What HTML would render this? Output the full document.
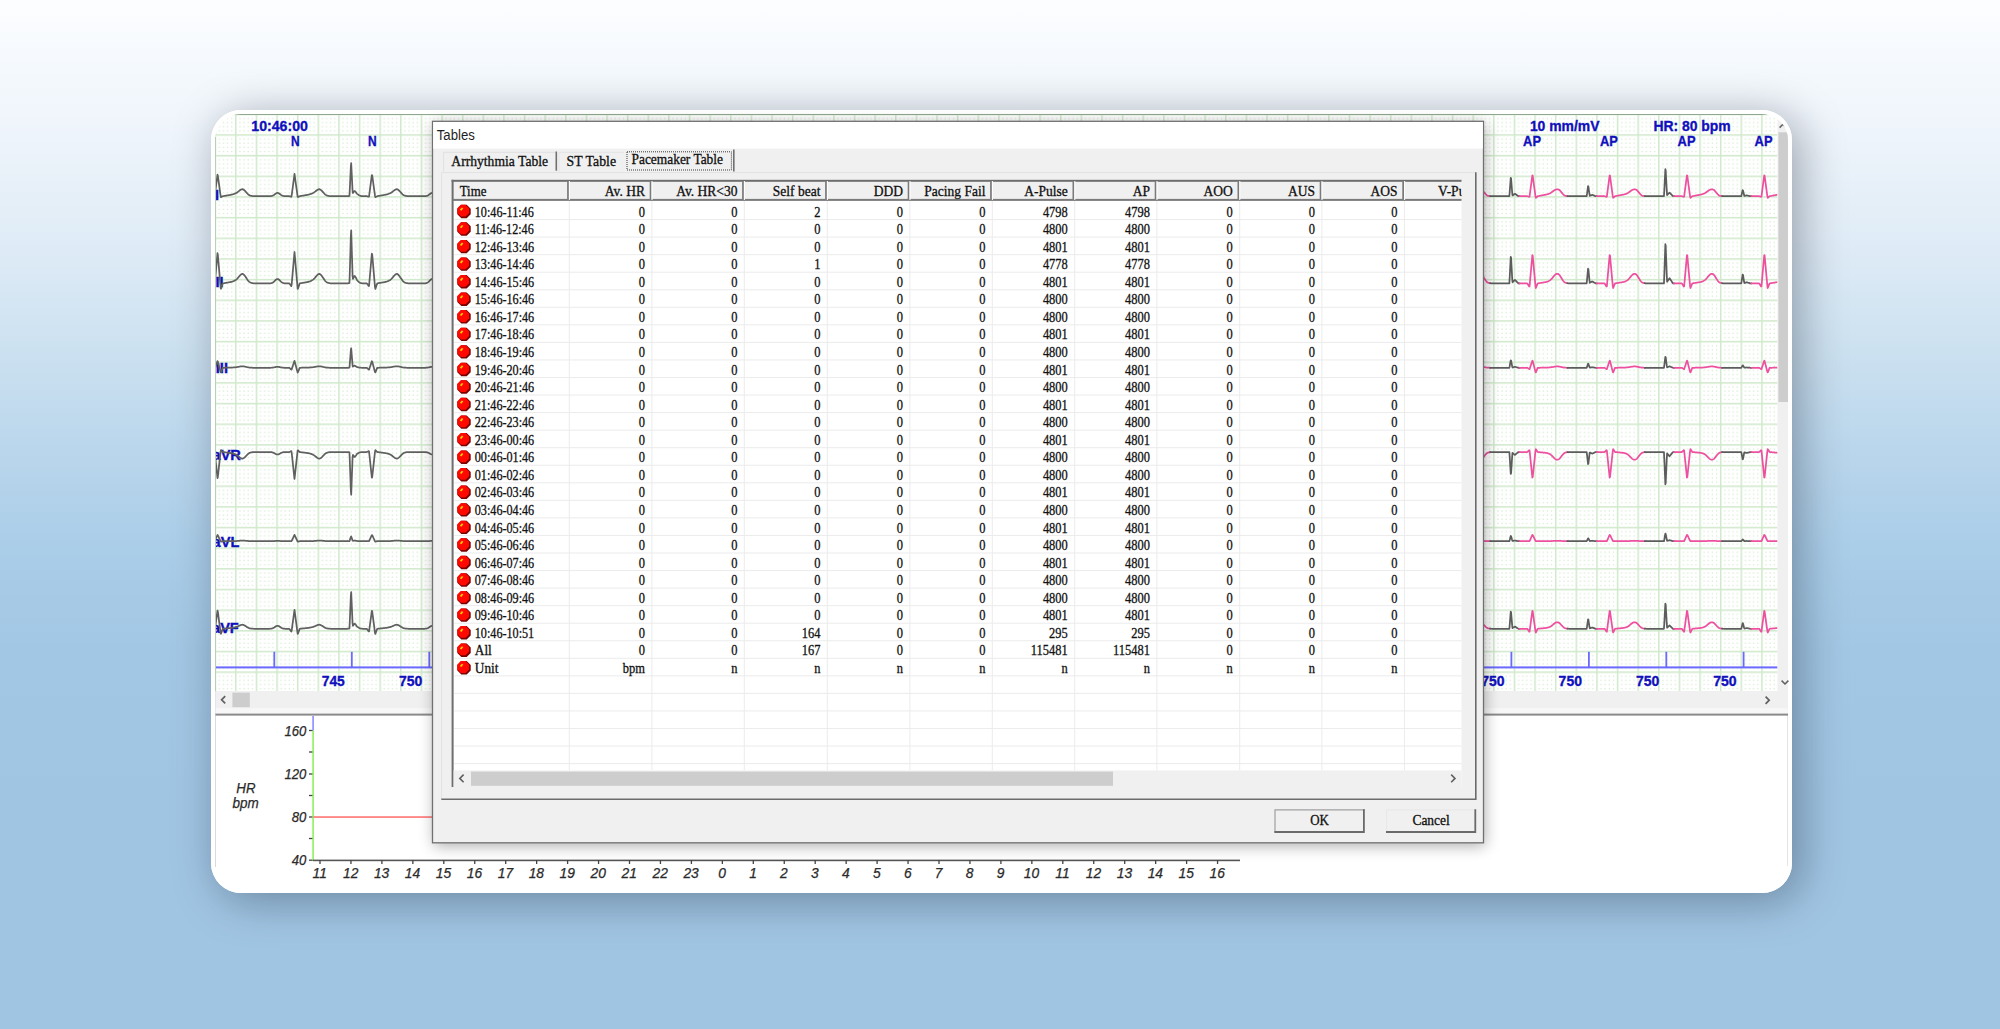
<!DOCTYPE html>
<html><head><meta charset="utf-8"><title>Tables</title>
<style>
html,body{margin:0;padding:0;}
body{width:2000px;height:1029px;overflow:hidden;position:relative;
 background:linear-gradient(180deg,#fcfdff 0px,#f6fafe 55px,#ecf3fa 150px,#deebf6 250px,#cce1f0 350px,#bad6ec 450px,#aacde8 550px,#a2c7e4 650px,#a0c5e3 800px,#a0c5e3 1029px);
 font-family:"Liberation Sans", sans-serif;}
.a{position:absolute;}
#shadow{position:absolute;left:211px;top:110px;width:1581px;height:783px;border-radius:30px;background:#fff;
 box-shadow:8px 7px 45px 0px rgba(0,10,25,0.34);}
#card{position:absolute;left:0;top:0;width:2000px;height:1029px;clip-path:inset(110px 208px 136px 211px round 30px);}
.ser{font-family:"Liberation Serif", serif;}
.lbl{font-family:"Liberation Sans", sans-serif;font-weight:bold;color:#1414c4;position:absolute;white-space:nowrap;line-height:1;}
</style></head><body>
<div id="shadow"></div>
<div id="card">
<div class="a" style="left:211px;top:110px;width:1581px;height:783px;background:#fff;"></div>

<svg class="a" style="left:0;top:0" width="2000" height="1029" viewBox="0 0 2000 1029"><defs><pattern id="g" patternUnits="userSpaceOnUse" x="214.450" y="113.590" width="20.623" height="20.660"><rect x="4.22" y="4.23" width="1.3" height="1.3" fill="#d6ecd2"/><rect x="4.22" y="8.36" width="1.3" height="1.3" fill="#d6ecd2"/><rect x="4.22" y="12.50" width="1.3" height="1.3" fill="#d6ecd2"/><rect x="4.22" y="16.63" width="1.3" height="1.3" fill="#d6ecd2"/><rect x="8.35" y="4.23" width="1.3" height="1.3" fill="#d6ecd2"/><rect x="8.35" y="8.36" width="1.3" height="1.3" fill="#d6ecd2"/><rect x="8.35" y="12.50" width="1.3" height="1.3" fill="#d6ecd2"/><rect x="8.35" y="16.63" width="1.3" height="1.3" fill="#d6ecd2"/><rect x="12.47" y="4.23" width="1.3" height="1.3" fill="#d6ecd2"/><rect x="12.47" y="8.36" width="1.3" height="1.3" fill="#d6ecd2"/><rect x="12.47" y="12.50" width="1.3" height="1.3" fill="#d6ecd2"/><rect x="12.47" y="16.63" width="1.3" height="1.3" fill="#d6ecd2"/><rect x="16.60" y="4.23" width="1.3" height="1.3" fill="#d6ecd2"/><rect x="16.60" y="8.36" width="1.3" height="1.3" fill="#d6ecd2"/><rect x="16.60" y="12.50" width="1.3" height="1.3" fill="#d6ecd2"/><rect x="16.60" y="16.63" width="1.3" height="1.3" fill="#d6ecd2"/><rect x="0" y="0" width="20.623" height="1.5" fill="#cfe9ca"/><rect x="0" y="0" width="1.5" height="20.660" fill="#cfe9ca"/></pattern></defs><clipPath id="gc"><path d="M215 140 A26 26 0 0 1 241 114 H1761 A26 26 0 0 1 1787 140 V691 H215 Z"/></clipPath><g clip-path="url(#gc)"><rect x="215" y="114" width="1562.5" height="577" fill="#fff"/><rect x="215" y="114" width="1562.5" height="577" fill="url(#g)"/><rect x="215" y="114" width="1562.5" height="1" fill="#8fa88f"/></g></svg>
<svg class="a" style="left:0;top:0" width="2000" height="1029" viewBox="0 0 2000 1029">
<defs><clipPath id="lc"><rect x="215.3" y="114" width="300" height="600"/></clipPath></defs><g clip-path="url(#lc)">
<text x="215.10" y="200.00" font-size="14.60" font-family='"Liberation Sans", sans-serif' font-weight="bold" fill="#1010bd" text-anchor="start" stroke="#1010bd" stroke-width="0.35">I</text>
<text x="215.50" y="286.80" font-size="14.60" font-family='"Liberation Sans", sans-serif' font-weight="bold" fill="#1010bd" text-anchor="start" stroke="#1010bd" stroke-width="0.35">II</text>
<text x="215.80" y="373.30" font-size="14.60" font-family='"Liberation Sans", sans-serif' font-weight="bold" fill="#1010bd" text-anchor="start" stroke="#1010bd" stroke-width="0.35">III</text>
<text x="240.91" y="459.80" font-size="14.60" font-family='"Liberation Sans", sans-serif' font-weight="bold" fill="#1010bd" text-anchor="end" stroke="#1010bd" stroke-width="0.35">aVR</text>
<text x="239.39" y="546.60" font-size="14.60" font-family='"Liberation Sans", sans-serif' font-weight="bold" fill="#1010bd" text-anchor="end" stroke="#1010bd" stroke-width="0.35">aVL</text>
<text x="238.79" y="632.80" font-size="14.60" font-family='"Liberation Sans", sans-serif' font-weight="bold" fill="#1010bd" text-anchor="end" stroke="#1010bd" stroke-width="0.35">aVF</text>
</g>
</svg>
<svg class="a" style="left:0;top:0" width="2000" height="1029" viewBox="0 0 2000 1029"><defs><clipPath id="ec"><rect x="215.5" y="114" width="1562" height="577"/></clipPath></defs><g clip-path="url(#ec)" fill="none" stroke-width="1.75" stroke-linejoin="round" stroke-linecap="round"><path d="M214.00 196.64 L214.35 196.73 L214.70 196.04 L215.05 193.36 L215.40 190.69 L215.75 188.02 L216.10 185.35 L216.45 182.68 L216.80 180.01 L217.15 177.33 L217.50 174.66 L217.85 175.72 L218.20 178.27 L218.55 180.82 L218.90 183.37 L219.25 185.91 L219.60 188.46 L219.95 191.01 L220.30 193.56 L220.65 196.11 L221.00 197.10 L221.35 196.92 L221.70 196.75 L222.05 196.57 L222.40 196.40 L222.75 196.20 L223.10 196.12 L223.45 196.06 L223.80 196.00 L224.15 195.94 L224.50 195.88 L224.85 195.82 L225.20 195.77 L225.55 195.71 L225.90 195.65 L226.25 195.59 L226.60 195.53 L226.95 195.47 L227.30 195.42 L227.65 195.36 L228.00 195.30 L228.35 195.24 L228.70 195.18 L229.05 195.12 L229.40 195.05 L229.75 194.99 L230.10 194.93 L230.45 194.86 L230.80 194.79 L231.15 194.72 L231.50 194.65 L231.85 194.57 L232.20 194.48 L232.55 194.39 L232.90 194.29 L233.25 194.18 L233.60 194.06 L233.95 193.93 L234.30 193.79 L234.65 193.64 L235.00 193.52 L235.35 193.39 L235.70 193.24 L236.05 193.07 L236.40 192.88 L236.75 192.67 L237.10 192.45 L237.45 192.20 L237.80 191.95 L238.15 191.68 L238.50 191.41 L238.85 191.13 L239.20 190.85 L239.55 190.58 L239.90 190.32 L240.25 190.07 L240.60 189.85 L240.95 189.65 L241.30 189.48 L241.65 189.35 L242.00 189.26 L242.35 189.21 L242.70 189.24 L243.05 189.38 L243.40 189.58 L243.75 189.81 L244.10 190.07 L244.45 190.38 L244.80 190.70 L245.15 191.06 L245.50 191.43 L245.85 191.81 L246.20 192.21 L246.55 192.60 L246.90 193.00 L247.25 193.39 L247.60 193.76 L247.95 194.13 L248.30 194.48 L248.65 194.79 L249.00 194.99 L249.35 195.17 L249.70 195.33 L250.05 195.47 L250.40 195.59 L250.75 195.70 L251.10 195.79 L251.45 195.87 L251.80 195.93 L252.15 195.99 L252.50 196.03 L252.85 196.07 L253.20 196.10 L253.55 196.12 L253.90 196.14 L254.25 196.15 L254.60 196.17 L254.95 196.17 L255.30 196.18 L255.65 196.19 L256.00 196.19 L256.35 196.19 L256.70 196.19 L257.05 196.20 L257.40 196.20 L257.75 196.20 L258.10 196.20 L258.45 196.20 L258.80 196.20 L259.15 196.20 L259.50 196.20 L259.85 196.20 L260.20 196.20 L260.55 196.20 L260.90 196.20 L261.25 196.20 L261.60 196.20 L261.95 196.20 L262.30 196.20 L262.65 196.20 L263.00 196.20 L263.35 196.20 L263.70 196.20 L264.05 196.20 L264.40 196.20 L264.75 196.20 L265.10 196.20 L265.45 196.20 L265.80 196.20 L266.15 196.20 L266.50 196.20 L266.85 196.20 L267.20 196.20 L267.55 196.20 L267.90 196.20 L268.25 196.19 L268.60 196.19 L268.95 196.19 L269.30 196.18 L269.65 196.17 L270.00 196.15 L270.35 196.12 L270.70 196.09 L271.05 196.05 L271.40 195.99 L271.75 195.91 L272.10 195.82 L272.45 195.70 L272.80 195.56 L273.15 195.39 L273.50 195.19 L273.85 194.97 L274.20 194.73 L274.55 194.47 L274.90 194.20 L275.25 193.93 L275.60 193.67 L275.95 193.44 L276.30 193.23 L276.65 193.07 L277.00 192.96 L277.35 192.91 L277.70 192.91 L278.05 192.97 L278.40 193.09 L278.75 193.26 L279.10 193.47 L279.45 193.71 L279.80 193.97 L280.15 194.24 L280.50 194.50 L280.85 194.76 L281.20 195.00 L281.55 195.22 L281.90 195.41 L282.25 195.58 L282.60 195.72 L282.95 195.83 L283.30 195.93 L283.65 196.00 L284.00 196.06 L284.35 196.10 L284.70 196.13 L285.05 196.15 L285.40 196.17 L285.75 196.18 L286.10 196.19 L286.45 196.19 L286.80 196.19 L287.15 196.20 L287.50 196.20 L287.85 196.20 L288.20 196.20 L288.55 196.20 L288.90 196.20 L289.25 196.20 L289.60 196.28 L289.95 196.38 L290.30 196.47 L290.65 196.57 L291.00 196.66 L291.35 196.76 L291.70 195.27 L292.05 192.60 L292.40 189.93 L292.75 187.26 L293.10 184.59 L293.45 181.91 L293.80 179.24 L294.15 176.57 L294.50 173.90 L294.85 176.45 L295.20 179.00 L295.55 181.55 L295.90 184.09 L296.25 186.64 L296.60 189.19 L296.95 191.74 L297.30 194.29 L297.65 196.84 L298.00 197.05 L298.35 196.87 L298.70 196.70 L299.05 196.52 L299.40 196.35 L299.75 196.16 L300.10 196.10 L300.45 196.04 L300.80 195.98 L301.15 195.92 L301.50 195.87 L301.85 195.81 L302.20 195.75 L302.55 195.69 L302.90 195.63 L303.25 195.57 L303.60 195.52 L303.95 195.46 L304.30 195.40 L304.65 195.34 L305.00 195.28 L305.35 195.22 L305.70 195.16 L306.05 195.10 L306.40 195.04 L306.75 194.97 L307.10 194.91 L307.45 194.84 L307.80 194.77 L308.15 194.70 L308.50 194.62 L308.85 194.54 L309.20 194.46 L309.55 194.36 L309.90 194.26 L310.25 194.15 L310.60 194.03 L310.95 193.89 L311.30 193.75 L311.65 193.61 L312.00 193.49 L312.35 193.35 L312.70 193.19 L313.05 193.02 L313.40 192.82 L313.75 192.61 L314.10 192.38 L314.45 192.13 L314.80 191.87 L315.15 191.60 L315.50 191.33 L315.85 191.05 L316.20 190.77 L316.55 190.50 L316.90 190.24 L317.25 190.00 L317.60 189.79 L317.95 189.60 L318.30 189.44 L318.65 189.32 L319.00 189.24 L319.35 189.20 L319.70 189.27 L320.05 189.44 L320.40 189.64 L320.75 189.88 L321.10 190.16 L321.45 190.47 L321.80 190.80 L322.15 191.16 L322.50 191.54 L322.85 191.93 L323.20 192.32 L323.55 192.72 L323.90 193.11 L324.25 193.49 L324.60 193.87 L324.95 194.23 L325.30 194.57 L325.65 194.85 L326.00 195.04 L326.35 195.22 L326.70 195.37 L327.05 195.51 L327.40 195.62 L327.75 195.73 L328.10 195.81 L328.45 195.89 L328.80 195.95 L329.15 196.00 L329.50 196.04 L329.85 196.08 L330.20 196.11 L330.55 196.13 L330.90 196.14 L331.25 196.16 L331.60 196.17 L331.95 196.18 L332.30 196.18 L332.65 196.19 L333.00 196.19 L333.35 196.19 L333.70 196.20 L334.05 196.20 L334.40 196.20 L334.75 196.20 L335.10 196.20 L335.45 196.20 L335.80 196.20 L336.15 196.20 L336.50 196.20 L336.85 196.20 L337.20 196.20 L337.55 196.20 L337.90 196.20 L338.25 196.20 L338.60 196.20 L338.95 196.20 L339.30 196.20 L339.65 196.20 L340.00 196.20 L340.35 196.20 L340.70 196.20 L341.05 196.20 L341.40 196.20 L341.75 196.20 L342.10 196.20 L342.45 196.20 L342.80 196.20 L343.15 196.20 L343.50 196.20 L343.85 196.20 L344.20 196.20 L344.55 196.20 L344.90 196.20 L345.25 196.20 L345.60 196.20 L345.95 196.19 L346.30 196.19 L346.65 196.18 L347.00 196.17 L347.35 196.16 L347.70 196.14 L348.05 196.11 L348.40 196.07 L348.75 196.02 L349.10 195.95 L349.45 195.86 L349.80 189.38 L350.15 181.81 L350.50 174.21 L350.85 166.59 L351.20 163.19 L351.55 170.39 L351.90 177.58 L352.25 184.55 L352.60 191.43 L352.95 193.01 L353.30 192.47 L353.65 191.97 L354.00 191.50 L354.35 191.08 L354.70 191.05 L355.05 191.31 L355.40 191.63 L355.75 192.01 L356.10 192.45 L356.45 192.93 L356.80 193.44 L357.15 193.86 L357.50 194.12 L357.85 194.39 L358.20 194.65 L358.55 194.90 L358.90 195.13 L359.25 195.33 L359.60 195.51 L359.95 195.66 L360.30 195.79 L360.65 195.89 L361.00 195.97 L361.35 196.03 L361.70 196.08 L362.05 196.12 L362.40 196.14 L362.75 196.16 L363.10 196.17 L363.45 196.18 L363.80 196.19 L364.15 196.19 L364.50 196.20 L364.85 196.20 L365.20 196.20 L365.55 196.20 L365.90 196.20 L366.25 196.20 L366.60 196.20 L366.95 196.24 L367.30 196.34 L367.65 196.43 L368.00 196.53 L368.35 196.62 L368.70 196.72 L369.05 196.42 L369.40 193.75 L369.75 191.07 L370.10 188.40 L370.45 185.73 L370.80 183.06 L371.15 180.39 L371.50 177.72 L371.85 175.04 L372.20 175.36 L372.55 177.90 L372.90 180.45 L373.25 183.00 L373.60 185.55 L373.95 188.10 L374.30 190.65 L374.65 193.20 L375.00 195.74 L375.35 197.12 L375.70 196.95 L376.05 196.77 L376.40 196.60 L376.75 196.42 L377.10 196.23 L377.45 196.12 L377.80 196.07 L378.15 196.01 L378.50 195.95 L378.85 195.89 L379.20 195.83 L379.55 195.77 L379.90 195.72 L380.25 195.66 L380.60 195.60 L380.95 195.54 L381.30 195.48 L381.65 195.42 L382.00 195.36 L382.35 195.31 L382.70 195.25 L383.05 195.19 L383.40 195.13 L383.75 195.06 L384.10 195.00 L384.45 194.94 L384.80 194.87 L385.15 194.80 L385.50 194.73 L385.85 194.66 L386.20 194.58 L386.55 194.49 L386.90 194.40 L387.25 194.31 L387.60 194.20 L387.95 194.08 L388.30 193.95 L388.65 193.81 L389.00 193.65 L389.35 193.54 L389.70 193.41 L390.05 193.26 L390.40 193.09 L390.75 192.91 L391.10 192.70 L391.45 192.48 L391.80 192.24 L392.15 191.99 L392.50 191.72 L392.85 191.45 L393.20 191.17 L393.55 190.89 L393.90 190.62 L394.25 190.35 L394.60 190.10 L394.95 189.88 L395.30 189.68 L395.65 189.51 L396.00 189.37 L396.35 189.27 L396.70 189.22 L397.05 189.22 L397.40 189.36 L397.75 189.55 L398.10 189.77 L398.45 190.03 L398.80 190.33 L399.15 190.66 L399.50 191.01 L399.85 191.38 L400.20 191.76 L400.55 192.15 L400.90 192.55 L401.25 192.94 L401.60 193.33 L401.95 193.71 L402.30 194.08 L402.65 194.43 L403.00 194.76 L403.35 194.96 L403.70 195.14 L404.05 195.31 L404.40 195.45 L404.75 195.58 L405.10 195.68 L405.45 195.78 L405.80 195.86 L406.15 195.92 L406.50 195.98 L406.85 196.03 L407.20 196.06 L407.55 196.09 L407.90 196.12 L408.25 196.14 L408.60 196.15 L408.95 196.16 L409.30 196.17 L409.65 196.18 L410.00 196.19 L410.35 196.19 L410.70 196.19 L411.05 196.19 L411.40 196.20 L411.75 196.20 L412.10 196.20 L412.45 196.20 L412.80 196.20 L413.15 196.20 L413.50 196.20 L413.85 196.20 L414.20 196.20 L414.55 196.20 L414.90 196.20 L415.25 196.20 L415.60 196.20 L415.95 196.20 L416.30 196.20 L416.65 196.20 L417.00 196.20 L417.35 196.20 L417.70 196.20 L418.05 196.20 L418.40 196.20 L418.75 196.20 L419.10 196.20 L419.45 196.20 L419.80 196.20 L420.15 196.20 L420.50 196.20 L420.85 196.20 L421.20 196.20 L421.55 196.20 L421.90 196.20 L422.25 196.20 L422.60 196.20 L422.95 196.19 L423.30 196.19 L423.65 196.19 L424.00 196.18 L424.35 196.17 L424.70 196.15 L425.05 196.13 L425.40 196.10 L425.75 196.06 L426.10 196.01 L426.45 195.94 L426.80 195.85 L427.15 195.74 L427.50 195.60 L427.85 195.44 L428.20 195.25 L428.55 195.03 L428.90 194.80 L429.25 194.54 L429.60 194.28 L429.95 194.01 L430.30 193.75 L430.65 193.50 L431.00 193.29 L431.35 193.11 L431.70 192.99 L432.05 192.92 L432.40 192.90 L432.75 192.95" stroke="#606060"/><path d="M1480.00 189.35 L1480.35 189.38 L1480.70 189.44 L1481.05 189.53 L1481.40 189.65 L1481.75 189.79 L1482.10 189.96 L1482.45 190.29 L1482.80 190.70 L1483.15 191.11 L1483.50 191.53 L1483.85 191.96 L1484.20 192.38 L1484.55 192.79 L1484.90 193.20 L1485.25 193.60 L1485.60 193.99 L1485.95 194.36 L1486.30 194.72 L1486.65 195.07 L1487.00 195.39 L1487.35 195.62 L1487.70 195.72 L1488.05 195.80 L1488.40 195.88 L1488.75 195.94 L1489.10 195.99 L1489.45 196.03 L1489.80 196.07 L1490.15 196.10" stroke="#ee50a0"/><path d="M1490.10 196.09 L1490.45 196.12 L1490.80 196.14 L1491.15 196.15 L1491.50 196.16 L1491.85 196.17 L1492.20 196.18 L1492.55 196.18 L1492.90 196.19 L1493.25 196.19 L1493.60 196.19 L1493.95 196.20 L1494.30 196.20 L1494.65 196.20 L1495.00 196.20 L1495.35 196.20 L1495.70 196.20 L1496.05 196.20 L1496.40 196.20 L1496.75 196.20 L1497.10 196.20 L1497.45 196.20 L1497.80 196.20 L1498.15 196.20 L1498.50 196.20 L1498.85 196.20 L1499.20 196.20 L1499.55 196.20 L1499.90 196.20 L1500.25 196.20 L1500.60 196.20 L1500.95 196.20 L1501.30 196.20 L1501.65 196.20 L1502.00 196.20 L1502.35 196.20 L1502.70 196.20 L1503.05 196.20 L1503.40 196.20 L1503.75 196.20 L1504.10 196.20 L1504.45 196.20 L1504.80 196.20 L1505.15 196.20 L1505.50 196.20 L1505.85 196.20 L1506.20 196.20 L1506.55 196.20 L1506.90 196.20 L1507.25 196.20 L1507.60 196.20 L1507.95 196.20 L1508.30 196.20 L1508.65 196.20 L1509.00 196.20 L1509.35 196.20 L1509.70 192.12 L1510.05 187.36 L1510.40 182.60 L1510.75 177.84 L1511.10 178.52 L1511.45 183.25 L1511.80 187.76 L1512.15 192.28 L1512.50 195.43 L1512.85 195.19 L1513.20 194.94 L1513.55 194.70 L1513.90 194.45 L1514.25 194.21 L1514.60 193.96 L1514.95 193.79 L1515.30 194.03 L1515.65 194.28 L1516.00 194.52 L1516.35 194.77 L1516.70 195.01 L1517.05 195.26 L1517.40 195.50 L1517.75 195.75 L1518.10 195.99 L1518.45 196.20 L1518.80 196.20 L1519.15 196.20 L1519.50 196.20" stroke="#5c5c5c"/><path d="M1519.40 196.20 L1519.75 196.20 L1520.10 196.20 L1520.45 196.20 L1520.80 196.20 L1521.15 196.20 L1521.50 196.20 L1521.85 196.20 L1522.20 196.20 L1522.55 196.20 L1522.90 196.20 L1523.25 196.20 L1523.60 196.20 L1523.95 196.20 L1524.30 196.20 L1524.65 196.20 L1525.00 196.20 L1525.35 196.20 L1525.70 196.20 L1526.05 196.20 L1526.40 196.20 L1526.75 196.20 L1527.10 196.20 L1527.45 196.25 L1527.80 196.36 L1528.15 196.47 L1528.50 196.58 L1528.85 196.69 L1529.20 196.80 L1529.55 196.52 L1529.90 193.87 L1530.25 191.22 L1530.60 188.58 L1530.95 185.93 L1531.30 183.28 L1531.65 180.63 L1532.00 177.98 L1532.35 175.33 L1532.70 175.69 L1533.05 178.29 L1533.40 180.89 L1533.75 183.50 L1534.10 186.10 L1534.45 188.70 L1534.80 191.31 L1535.15 193.91 L1535.50 196.51 L1535.85 197.86 L1536.20 197.55 L1536.55 197.23 L1536.90 196.92 L1537.25 196.60 L1537.60 196.27 L1537.95 196.12 L1538.30 196.05 L1538.65 195.99 L1539.00 195.93 L1539.35 195.86 L1539.70 195.80 L1540.05 195.74 L1540.40 195.67 L1540.75 195.61 L1541.10 195.55 L1541.45 195.48 L1541.80 195.42 L1542.15 195.36 L1542.50 195.29 L1542.85 195.23 L1543.20 195.16 L1543.55 195.10 L1543.90 195.03 L1544.25 194.96 L1544.60 194.90 L1544.95 194.83 L1545.30 194.76 L1545.65 194.68 L1546.00 194.61 L1546.35 194.53 L1546.70 194.45 L1547.05 194.36 L1547.40 194.26 L1547.75 194.16 L1548.10 194.05 L1548.45 193.94 L1548.80 193.81 L1549.15 193.67 L1549.50 193.52 L1549.85 193.35 L1550.20 193.17 L1550.55 192.98 L1550.90 192.77 L1551.25 192.55 L1551.60 192.31 L1551.95 192.06 L1552.30 191.80 L1552.65 191.53 L1553.00 191.25 L1553.35 190.96 L1553.70 190.72 L1554.05 190.50 L1554.40 190.29 L1554.75 190.09 L1555.10 189.91 L1555.45 189.75 L1555.80 189.61 L1556.15 189.50 L1556.50 189.42 L1556.85 189.37 L1557.20 189.35 L1557.55 189.37 L1557.90 189.42 L1558.25 189.50 L1558.60 189.61 L1558.95 189.75 L1559.30 189.91 L1559.65 190.18 L1560.00 190.58 L1560.35 190.99 L1560.70 191.41 L1561.05 191.83 L1561.40 192.26 L1561.75 192.68 L1562.10 193.09 L1562.45 193.49 L1562.80 193.88 L1563.15 194.26 L1563.50 194.62 L1563.85 194.97 L1564.20 195.30 L1564.55 195.59 L1564.90 195.69 L1565.25 195.78 L1565.60 195.86 L1565.95 195.92 L1566.30 195.98 L1566.65 196.02 L1567.00 196.06 L1567.35 196.09 L1567.70 196.11" stroke="#ee50a0"/><path d="M1567.40 196.09 L1567.75 196.12 L1568.10 196.14 L1568.45 196.15 L1568.80 196.16 L1569.15 196.17 L1569.50 196.18 L1569.85 196.18 L1570.20 196.19 L1570.55 196.19 L1570.90 196.19 L1571.25 196.20 L1571.60 196.20 L1571.95 196.20 L1572.30 196.20 L1572.65 196.20 L1573.00 196.20 L1573.35 196.20 L1573.70 196.20 L1574.05 196.20 L1574.40 196.20 L1574.75 196.20 L1575.10 196.20 L1575.45 196.20 L1575.80 196.20 L1576.15 196.20 L1576.50 196.20 L1576.85 196.20 L1577.20 196.20 L1577.55 196.20 L1577.90 196.20 L1578.25 196.20 L1578.60 196.20 L1578.95 196.20 L1579.30 196.20 L1579.65 196.20 L1580.00 196.20 L1580.35 196.20 L1580.70 196.20 L1581.05 196.20 L1581.40 196.20 L1581.75 196.20 L1582.10 196.20 L1582.45 196.20 L1582.80 196.20 L1583.15 196.20 L1583.50 196.20 L1583.85 196.20 L1584.20 196.20 L1584.55 196.20 L1584.90 196.20 L1585.25 196.20 L1585.60 196.20 L1585.95 196.20 L1586.30 196.20 L1586.65 196.20 L1587.00 193.96 L1587.35 191.34 L1587.70 188.72 L1588.05 186.10 L1588.40 186.48 L1588.75 189.07 L1589.10 191.56 L1589.45 194.04 L1589.80 195.78 L1590.15 195.64 L1590.50 195.51 L1590.85 195.37 L1591.20 195.24 L1591.55 195.10 L1591.90 194.97 L1592.25 194.87 L1592.60 195.01 L1592.95 195.14 L1593.30 195.28 L1593.65 195.41 L1594.00 195.55 L1594.35 195.68 L1594.70 195.82 L1595.05 195.95 L1595.40 196.08 L1595.75 196.20 L1596.10 196.20 L1596.45 196.20 L1596.80 196.20" stroke="#5c5c5c"/><path d="M1596.70 196.20 L1597.05 196.20 L1597.40 196.20 L1597.75 196.20 L1598.10 196.20 L1598.45 196.20 L1598.80 196.20 L1599.15 196.20 L1599.50 196.20 L1599.85 196.20 L1600.20 196.20 L1600.55 196.20 L1600.90 196.20 L1601.25 196.20 L1601.60 196.20 L1601.95 196.20 L1602.30 196.20 L1602.65 196.20 L1603.00 196.20 L1603.35 196.20 L1603.70 196.20 L1604.05 196.20 L1604.40 196.20 L1604.75 196.25 L1605.10 196.36 L1605.45 196.47 L1605.80 196.58 L1606.15 196.69 L1606.50 196.80 L1606.85 196.52 L1607.20 193.87 L1607.55 191.22 L1607.90 188.58 L1608.25 185.93 L1608.60 183.28 L1608.95 180.63 L1609.30 177.98 L1609.65 175.33 L1610.00 175.69 L1610.35 178.29 L1610.70 180.89 L1611.05 183.50 L1611.40 186.10 L1611.75 188.70 L1612.10 191.31 L1612.45 193.91 L1612.80 196.51 L1613.15 197.86 L1613.50 197.55 L1613.85 197.23 L1614.20 196.92 L1614.55 196.60 L1614.90 196.27 L1615.25 196.12 L1615.60 196.05 L1615.95 195.99 L1616.30 195.93 L1616.65 195.86 L1617.00 195.80 L1617.35 195.74 L1617.70 195.67 L1618.05 195.61 L1618.40 195.55 L1618.75 195.48 L1619.10 195.42 L1619.45 195.36 L1619.80 195.29 L1620.15 195.23 L1620.50 195.16 L1620.85 195.10 L1621.20 195.03 L1621.55 194.96 L1621.90 194.90 L1622.25 194.83 L1622.60 194.76 L1622.95 194.68 L1623.30 194.61 L1623.65 194.53 L1624.00 194.45 L1624.35 194.36 L1624.70 194.26 L1625.05 194.16 L1625.40 194.05 L1625.75 193.94 L1626.10 193.81 L1626.45 193.67 L1626.80 193.52 L1627.15 193.35 L1627.50 193.17 L1627.85 192.98 L1628.20 192.77 L1628.55 192.55 L1628.90 192.31 L1629.25 192.06 L1629.60 191.80 L1629.95 191.53 L1630.30 191.25 L1630.65 190.96 L1631.00 190.72 L1631.35 190.50 L1631.70 190.29 L1632.05 190.09 L1632.40 189.91 L1632.75 189.75 L1633.10 189.61 L1633.45 189.50 L1633.80 189.42 L1634.15 189.37 L1634.50 189.35 L1634.85 189.37 L1635.20 189.42 L1635.55 189.50 L1635.90 189.61 L1636.25 189.75 L1636.60 189.91 L1636.95 190.18 L1637.30 190.58 L1637.65 190.99 L1638.00 191.41 L1638.35 191.83 L1638.70 192.26 L1639.05 192.68 L1639.40 193.09 L1639.75 193.49 L1640.10 193.88 L1640.45 194.26 L1640.80 194.62 L1641.15 194.97 L1641.50 195.30 L1641.85 195.59 L1642.20 195.69 L1642.55 195.78 L1642.90 195.86 L1643.25 195.92 L1643.60 195.98 L1643.95 196.02 L1644.30 196.06 L1644.65 196.09 L1645.00 196.11" stroke="#ee50a0"/><path d="M1644.70 196.09 L1645.05 196.12 L1645.40 196.14 L1645.75 196.15 L1646.10 196.16 L1646.45 196.17 L1646.80 196.18 L1647.15 196.18 L1647.50 196.19 L1647.85 196.19 L1648.20 196.19 L1648.55 196.20 L1648.90 196.20 L1649.25 196.20 L1649.60 196.20 L1649.95 196.20 L1650.30 196.20 L1650.65 196.20 L1651.00 196.20 L1651.35 196.20 L1651.70 196.20 L1652.05 196.20 L1652.40 196.20 L1652.75 196.20 L1653.10 196.20 L1653.45 196.20 L1653.80 196.20 L1654.15 196.20 L1654.50 196.20 L1654.85 196.20 L1655.20 196.20 L1655.55 196.20 L1655.90 196.20 L1656.25 196.20 L1656.60 196.20 L1656.95 196.20 L1657.30 196.20 L1657.65 196.20 L1658.00 196.20 L1658.35 196.20 L1658.70 196.20 L1659.05 196.20 L1659.40 196.20 L1659.75 196.20 L1660.10 196.20 L1660.45 196.20 L1660.80 196.20 L1661.15 196.20 L1661.50 196.20 L1661.85 196.20 L1662.20 196.20 L1662.55 196.20 L1662.90 196.20 L1663.25 196.20 L1663.60 196.20 L1663.95 196.20 L1664.30 190.20 L1664.65 183.21 L1665.00 176.21 L1665.35 169.21 L1665.70 170.21 L1666.05 177.16 L1666.40 183.79 L1666.75 190.43 L1667.10 195.07 L1667.45 194.71 L1667.80 194.35 L1668.15 193.99 L1668.50 193.63 L1668.85 193.27 L1669.20 192.91 L1669.55 192.65 L1669.90 193.01 L1670.25 193.37 L1670.60 193.73 L1670.95 194.09 L1671.30 194.45 L1671.65 194.81 L1672.00 195.17 L1672.35 195.53 L1672.70 195.89 L1673.05 196.20 L1673.40 196.20 L1673.75 196.20 L1674.10 196.20" stroke="#5c5c5c"/><path d="M1674.00 196.20 L1674.35 196.20 L1674.70 196.20 L1675.05 196.20 L1675.40 196.20 L1675.75 196.20 L1676.10 196.20 L1676.45 196.20 L1676.80 196.20 L1677.15 196.20 L1677.50 196.20 L1677.85 196.20 L1678.20 196.20 L1678.55 196.20 L1678.90 196.20 L1679.25 196.20 L1679.60 196.20 L1679.95 196.20 L1680.30 196.20 L1680.65 196.20 L1681.00 196.20 L1681.35 196.20 L1681.70 196.20 L1682.05 196.25 L1682.40 196.36 L1682.75 196.47 L1683.10 196.58 L1683.45 196.69 L1683.80 196.80 L1684.15 196.52 L1684.50 193.87 L1684.85 191.22 L1685.20 188.58 L1685.55 185.93 L1685.90 183.28 L1686.25 180.63 L1686.60 177.98 L1686.95 175.33 L1687.30 175.69 L1687.65 178.29 L1688.00 180.89 L1688.35 183.50 L1688.70 186.10 L1689.05 188.70 L1689.40 191.31 L1689.75 193.91 L1690.10 196.51 L1690.45 197.86 L1690.80 197.55 L1691.15 197.23 L1691.50 196.92 L1691.85 196.60 L1692.20 196.27 L1692.55 196.12 L1692.90 196.05 L1693.25 195.99 L1693.60 195.93 L1693.95 195.86 L1694.30 195.80 L1694.65 195.74 L1695.00 195.67 L1695.35 195.61 L1695.70 195.55 L1696.05 195.48 L1696.40 195.42 L1696.75 195.36 L1697.10 195.29 L1697.45 195.23 L1697.80 195.16 L1698.15 195.10 L1698.50 195.03 L1698.85 194.96 L1699.20 194.90 L1699.55 194.83 L1699.90 194.76 L1700.25 194.68 L1700.60 194.61 L1700.95 194.53 L1701.30 194.45 L1701.65 194.36 L1702.00 194.26 L1702.35 194.16 L1702.70 194.05 L1703.05 193.94 L1703.40 193.81 L1703.75 193.67 L1704.10 193.52 L1704.45 193.35 L1704.80 193.17 L1705.15 192.98 L1705.50 192.77 L1705.85 192.55 L1706.20 192.31 L1706.55 192.06 L1706.90 191.80 L1707.25 191.53 L1707.60 191.25 L1707.95 190.96 L1708.30 190.72 L1708.65 190.50 L1709.00 190.29 L1709.35 190.09 L1709.70 189.91 L1710.05 189.75 L1710.40 189.61 L1710.75 189.50 L1711.10 189.42 L1711.45 189.37 L1711.80 189.35 L1712.15 189.37 L1712.50 189.42 L1712.85 189.50 L1713.20 189.61 L1713.55 189.75 L1713.90 189.91 L1714.25 190.18 L1714.60 190.58 L1714.95 190.99 L1715.30 191.41 L1715.65 191.83 L1716.00 192.26 L1716.35 192.68 L1716.70 193.09 L1717.05 193.49 L1717.40 193.88 L1717.75 194.26 L1718.10 194.62 L1718.45 194.97 L1718.80 195.30 L1719.15 195.59 L1719.50 195.69 L1719.85 195.78 L1720.20 195.86 L1720.55 195.92 L1720.90 195.98 L1721.25 196.02 L1721.60 196.06 L1721.95 196.09 L1722.30 196.11" stroke="#ee50a0"/><path d="M1722.00 196.09 L1722.35 196.12 L1722.70 196.14 L1723.05 196.15 L1723.40 196.16 L1723.75 196.17 L1724.10 196.18 L1724.45 196.18 L1724.80 196.19 L1725.15 196.19 L1725.50 196.19 L1725.85 196.20 L1726.20 196.20 L1726.55 196.20 L1726.90 196.20 L1727.25 196.20 L1727.60 196.20 L1727.95 196.20 L1728.30 196.20 L1728.65 196.20 L1729.00 196.20 L1729.35 196.20 L1729.70 196.20 L1730.05 196.20 L1730.40 196.20 L1730.75 196.20 L1731.10 196.20 L1731.45 196.20 L1731.80 196.20 L1732.15 196.20 L1732.50 196.20 L1732.85 196.20 L1733.20 196.20 L1733.55 196.20 L1733.90 196.20 L1734.25 196.20 L1734.60 196.20 L1734.95 196.20 L1735.30 196.20 L1735.65 196.20 L1736.00 196.20 L1736.35 196.20 L1736.70 196.20 L1737.05 196.20 L1737.40 196.20 L1737.75 196.20 L1738.10 196.20 L1738.45 196.20 L1738.80 196.20 L1739.15 196.20 L1739.50 196.20 L1739.85 196.20 L1740.20 196.20 L1740.55 196.20 L1740.90 196.20 L1741.25 196.20 L1741.60 194.85 L1741.95 193.28 L1742.30 191.71 L1742.65 190.14 L1743.00 190.37 L1743.35 191.92 L1743.70 193.41 L1744.05 194.90 L1744.40 195.95 L1744.75 195.87 L1745.10 195.78 L1745.45 195.70 L1745.80 195.62 L1746.15 195.54 L1746.50 195.46 L1746.85 195.40 L1747.20 195.48 L1747.55 195.57 L1747.90 195.65 L1748.25 195.73 L1748.60 195.81 L1748.95 195.89 L1749.30 195.97 L1749.65 196.05 L1750.00 196.13 L1750.35 196.20 L1750.70 196.20 L1751.05 196.20 L1751.40 196.20" stroke="#5c5c5c"/><path d="M1751.30 196.20 L1751.65 196.20 L1752.00 196.20 L1752.35 196.20 L1752.70 196.20 L1753.05 196.20 L1753.40 196.20 L1753.75 196.20 L1754.10 196.20 L1754.45 196.20 L1754.80 196.20 L1755.15 196.20 L1755.50 196.20 L1755.85 196.20 L1756.20 196.20 L1756.55 196.20 L1756.90 196.20 L1757.25 196.20 L1757.60 196.20 L1757.95 196.20 L1758.30 196.20 L1758.65 196.20 L1759.00 196.20 L1759.35 196.25 L1759.70 196.36 L1760.05 196.47 L1760.40 196.58 L1760.75 196.69 L1761.10 196.80 L1761.45 196.52 L1761.80 193.87 L1762.15 191.22 L1762.50 188.58 L1762.85 185.93 L1763.20 183.28 L1763.55 180.63 L1763.90 177.98 L1764.25 175.33 L1764.60 175.69 L1764.95 178.29 L1765.30 180.89 L1765.65 183.50 L1766.00 186.10 L1766.35 188.70 L1766.70 191.31 L1767.05 193.91 L1767.40 196.51 L1767.75 197.86 L1768.10 197.55 L1768.45 197.23 L1768.80 196.92 L1769.15 196.60 L1769.50 196.27 L1769.85 196.12 L1770.20 196.05 L1770.55 195.99 L1770.90 195.93 L1771.25 195.86 L1771.60 195.80 L1771.95 195.74 L1772.30 195.67 L1772.65 195.61 L1773.00 195.55 L1773.35 195.48 L1773.70 195.42 L1774.05 195.36 L1774.40 195.29 L1774.75 195.23 L1775.10 195.16 L1775.45 195.10 L1775.80 195.03 L1776.15 194.96 L1776.50 194.90 L1776.85 194.83 L1777.20 194.76 L1777.55 194.68 L1777.90 194.61 L1778.25 194.53 L1778.60 194.45 L1778.95 194.36 L1779.30 194.26 L1779.65 194.16 L1780.00 194.05 L1780.35 193.94" stroke="#ee50a0"/><path d="M214.00 285.58 L214.35 286.06 L214.70 285.25 L215.05 281.24 L215.40 277.23 L215.75 273.21 L216.10 269.20 L216.45 265.19 L216.80 261.17 L217.15 257.16 L217.50 253.15 L217.85 254.92 L218.20 259.01 L218.55 263.10 L218.90 267.19 L219.25 271.28 L219.60 275.37 L219.95 279.47 L220.30 283.56 L220.65 287.65 L221.00 288.80 L221.35 287.75 L221.70 286.70 L222.05 285.65 L222.40 284.60 L222.75 283.52 L223.10 283.32 L223.45 283.26 L223.80 283.20 L224.15 283.14 L224.50 283.08 L224.85 283.02 L225.20 282.97 L225.55 282.91 L225.90 282.85 L226.25 282.79 L226.60 282.73 L226.95 282.67 L227.30 282.61 L227.65 282.56 L228.00 282.50 L228.35 282.44 L228.70 282.37 L229.05 282.31 L229.40 282.25 L229.75 282.18 L230.10 282.12 L230.45 282.05 L230.80 281.97 L231.15 281.89 L231.50 281.81 L231.85 281.72 L232.20 281.62 L232.55 281.51 L232.90 281.39 L233.25 281.26 L233.60 281.11 L233.95 280.95 L234.30 280.76 L234.65 280.56 L235.00 280.38 L235.35 280.18 L235.70 279.96 L236.05 279.70 L236.40 279.42 L236.75 279.11 L237.10 278.77 L237.45 278.41 L237.80 278.02 L238.15 277.62 L238.50 277.21 L238.85 276.79 L239.20 276.37 L239.55 275.97 L239.90 275.57 L240.25 275.21 L240.60 274.87 L240.95 274.57 L241.30 274.33 L241.65 274.13 L242.00 273.99 L242.35 273.92 L242.70 273.94 L243.05 274.10 L243.40 274.33 L243.75 274.62 L244.10 274.96 L244.45 275.35 L244.80 275.79 L245.15 276.26 L245.50 276.76 L245.85 277.28 L246.20 277.81 L246.55 278.35 L246.90 278.88 L247.25 279.40 L247.60 279.91 L247.95 280.40 L248.30 280.87 L248.65 281.29 L249.00 281.58 L249.35 281.85 L249.70 282.09 L250.05 282.30 L250.40 282.49 L250.75 282.65 L251.10 282.79 L251.45 282.90 L251.80 283.00 L252.15 283.08 L252.50 283.15 L252.85 283.20 L253.20 283.25 L253.55 283.28 L253.90 283.31 L254.25 283.33 L254.60 283.35 L254.95 283.36 L255.30 283.37 L255.65 283.38 L256.00 283.39 L256.35 283.39 L256.70 283.39 L257.05 283.39 L257.40 283.40 L257.75 283.40 L258.10 283.40 L258.45 283.40 L258.80 283.40 L259.15 283.40 L259.50 283.40 L259.85 283.40 L260.20 283.40 L260.55 283.40 L260.90 283.40 L261.25 283.40 L261.60 283.40 L261.95 283.40 L262.30 283.40 L262.65 283.40 L263.00 283.40 L263.35 283.40 L263.70 283.40 L264.05 283.40 L264.40 283.40 L264.75 283.40 L265.10 283.40 L265.45 283.40 L265.80 283.40 L266.15 283.40 L266.50 283.40 L266.85 283.40 L267.20 283.40 L267.55 283.40 L267.90 283.40 L268.25 283.39 L268.60 283.39 L268.95 283.38 L269.30 283.37 L269.65 283.35 L270.00 283.33 L270.35 283.30 L270.70 283.26 L271.05 283.20 L271.40 283.12 L271.75 283.02 L272.10 282.89 L272.45 282.73 L272.80 282.54 L273.15 282.31 L273.50 282.05 L273.85 281.76 L274.20 281.43 L274.55 281.09 L274.90 280.73 L275.25 280.37 L275.60 280.03 L275.95 279.72 L276.30 279.44 L276.65 279.23 L277.00 279.08 L277.35 279.01 L277.70 279.01 L278.05 279.10 L278.40 279.26 L278.75 279.48 L279.10 279.76 L279.45 280.08 L279.80 280.42 L280.15 280.78 L280.50 281.14 L280.85 281.48 L281.20 281.80 L281.55 282.09 L281.90 282.35 L282.25 282.57 L282.60 282.76 L282.95 282.91 L283.30 283.03 L283.65 283.13 L284.00 283.21 L284.35 283.26 L284.70 283.30 L285.05 283.34 L285.40 283.36 L285.75 283.37 L286.10 283.38 L286.45 283.39 L286.80 283.39 L287.15 283.40 L287.50 283.40 L287.85 283.40 L288.20 283.40 L288.55 283.40 L288.90 283.40 L289.25 283.40 L289.60 283.81 L289.95 284.29 L290.30 284.76 L290.65 285.24 L291.00 285.72 L291.35 286.20 L291.70 284.11 L292.05 280.09 L292.40 276.08 L292.75 272.07 L293.10 268.05 L293.45 264.04 L293.80 260.03 L294.15 256.01 L294.50 252.00 L294.85 256.09 L295.20 260.18 L295.55 264.27 L295.90 268.36 L296.25 272.45 L296.60 276.54 L296.95 280.63 L297.30 284.72 L297.65 288.82 L298.00 288.50 L298.35 287.45 L298.70 286.40 L299.05 285.35 L299.40 284.30 L299.75 283.36 L300.10 283.30 L300.45 283.24 L300.80 283.18 L301.15 283.12 L301.50 283.07 L301.85 283.01 L302.20 282.95 L302.55 282.89 L302.90 282.83 L303.25 282.77 L303.60 282.72 L303.95 282.66 L304.30 282.60 L304.65 282.54 L305.00 282.48 L305.35 282.42 L305.70 282.36 L306.05 282.29 L306.40 282.23 L306.75 282.16 L307.10 282.10 L307.45 282.03 L307.80 281.95 L308.15 281.87 L308.50 281.79 L308.85 281.69 L309.20 281.59 L309.55 281.48 L309.90 281.36 L310.25 281.22 L310.60 281.07 L310.95 280.89 L311.30 280.70 L311.65 280.51 L312.00 280.33 L312.35 280.12 L312.70 279.89 L313.05 279.62 L313.40 279.33 L313.75 279.01 L314.10 278.67 L314.45 278.30 L314.80 277.91 L315.15 277.51 L315.50 277.09 L315.85 276.67 L316.20 276.26 L316.55 275.85 L316.90 275.47 L317.25 275.11 L317.60 274.78 L317.95 274.50 L318.30 274.26 L318.65 274.09 L319.00 273.96 L319.35 273.91 L319.70 273.98 L320.05 274.16 L320.40 274.41 L320.75 274.71 L321.10 275.07 L321.45 275.48 L321.80 275.92 L322.15 276.40 L322.50 276.91 L322.85 277.43 L323.20 277.96 L323.55 278.50 L323.90 279.03 L324.25 279.55 L324.60 280.05 L324.95 280.54 L325.30 280.99 L325.65 281.38 L326.00 281.66 L326.35 281.92 L326.70 282.15 L327.05 282.36 L327.40 282.54 L327.75 282.69 L328.10 282.82 L328.45 282.93 L328.80 283.02 L329.15 283.10 L329.50 283.16 L329.85 283.22 L330.20 283.26 L330.55 283.29 L330.90 283.32 L331.25 283.34 L331.60 283.35 L331.95 283.36 L332.30 283.37 L332.65 283.38 L333.00 283.39 L333.35 283.39 L333.70 283.39 L334.05 283.40 L334.40 283.40 L334.75 283.40 L335.10 283.40 L335.45 283.40 L335.80 283.40 L336.15 283.40 L336.50 283.40 L336.85 283.40 L337.20 283.40 L337.55 283.40 L337.90 283.40 L338.25 283.40 L338.60 283.40 L338.95 283.40 L339.30 283.40 L339.65 283.40 L340.00 283.40 L340.35 283.40 L340.70 283.40 L341.05 283.40 L341.40 283.40 L341.75 283.40 L342.10 283.40 L342.45 283.40 L342.80 283.40 L343.15 283.40 L343.50 283.40 L343.85 283.40 L344.20 283.40 L344.55 283.40 L344.90 283.40 L345.25 283.40 L345.60 283.39 L345.95 283.39 L346.30 283.38 L346.65 283.37 L347.00 283.36 L347.35 283.34 L347.70 283.31 L348.05 283.28 L348.40 283.22 L348.75 283.16 L349.10 283.06 L349.45 282.95 L349.80 272.49 L350.15 260.28 L350.50 248.04 L350.85 235.76 L351.20 230.33 L351.55 242.04 L351.90 253.74 L352.25 265.09 L352.60 276.30 L352.95 278.92 L353.30 278.13 L353.65 277.38 L354.00 276.67 L354.35 276.03 L354.70 275.99 L355.05 276.43 L355.40 276.94 L355.75 277.53 L356.10 278.19 L356.45 278.91 L356.80 279.67 L357.15 280.27 L357.50 280.63 L357.85 280.99 L358.20 281.34 L358.55 281.67 L358.90 281.97 L359.25 282.24 L359.60 282.48 L359.95 282.68 L360.30 282.85 L360.65 282.99 L361.00 283.09 L361.35 283.18 L361.70 283.24 L362.05 283.29 L362.40 283.32 L362.75 283.35 L363.10 283.37 L363.45 283.38 L363.80 283.39 L364.15 283.39 L364.50 283.39 L364.85 283.40 L365.20 283.40 L365.55 283.40 L365.90 283.40 L366.25 283.40 L366.60 283.40 L366.95 283.60 L367.30 284.08 L367.65 284.56 L368.00 285.04 L368.35 285.51 L368.70 285.99 L369.05 285.83 L369.40 281.81 L369.75 277.80 L370.10 273.79 L370.45 269.77 L370.80 265.76 L371.15 261.75 L371.50 257.73 L371.85 253.72 L372.20 254.34 L372.55 258.43 L372.90 262.52 L373.25 266.61 L373.60 270.70 L373.95 274.79 L374.30 278.88 L374.65 282.97 L375.00 287.06 L375.35 288.95 L375.70 287.90 L376.05 286.85 L376.40 285.80 L376.75 284.75 L377.10 283.68 L377.45 283.32 L377.80 283.27 L378.15 283.21 L378.50 283.15 L378.85 283.09 L379.20 283.03 L379.55 282.97 L379.90 282.92 L380.25 282.86 L380.60 282.80 L380.95 282.74 L381.30 282.68 L381.65 282.62 L382.00 282.56 L382.35 282.50 L382.70 282.44 L383.05 282.38 L383.40 282.32 L383.75 282.26 L384.10 282.19 L384.45 282.13 L384.80 282.06 L385.15 281.98 L385.50 281.91 L385.85 281.82 L386.20 281.73 L386.55 281.64 L386.90 281.53 L387.25 281.41 L387.60 281.28 L387.95 281.14 L388.30 280.97 L388.65 280.79 L389.00 280.58 L389.35 280.41 L389.70 280.22 L390.05 279.99 L390.40 279.74 L390.75 279.46 L391.10 279.15 L391.45 278.82 L391.80 278.46 L392.15 278.08 L392.50 277.68 L392.85 277.27 L393.20 276.85 L393.55 276.43 L393.90 276.02 L394.25 275.63 L394.60 275.26 L394.95 274.92 L395.30 274.61 L395.65 274.36 L396.00 274.16 L396.35 274.01 L396.70 273.92 L397.05 273.92 L397.40 274.07 L397.75 274.29 L398.10 274.57 L398.45 274.91 L398.80 275.30 L399.15 275.73 L399.50 276.19 L399.85 276.69 L400.20 277.21 L400.55 277.74 L400.90 278.27 L401.25 278.80 L401.60 279.33 L401.95 279.84 L402.30 280.33 L402.65 280.80 L403.00 281.24 L403.35 281.54 L403.70 281.82 L404.05 282.06 L404.40 282.27 L404.75 282.46 L405.10 282.63 L405.45 282.77 L405.80 282.89 L406.15 282.99 L406.50 283.07 L406.85 283.14 L407.20 283.20 L407.55 283.24 L407.90 283.28 L408.25 283.31 L408.60 283.33 L408.95 283.35 L409.30 283.36 L409.65 283.37 L410.00 283.38 L410.35 283.38 L410.70 283.39 L411.05 283.39 L411.40 283.39 L411.75 283.40 L412.10 283.40 L412.45 283.40 L412.80 283.40 L413.15 283.40 L413.50 283.40 L413.85 283.40 L414.20 283.40 L414.55 283.40 L414.90 283.40 L415.25 283.40 L415.60 283.40 L415.95 283.40 L416.30 283.40 L416.65 283.40 L417.00 283.40 L417.35 283.40 L417.70 283.40 L418.05 283.40 L418.40 283.40 L418.75 283.40 L419.10 283.40 L419.45 283.40 L419.80 283.40 L420.15 283.40 L420.50 283.40 L420.85 283.40 L421.20 283.40 L421.55 283.40 L421.90 283.40 L422.25 283.40 L422.60 283.40 L422.95 283.39 L423.30 283.39 L423.65 283.38 L424.00 283.37 L424.35 283.36 L424.70 283.34 L425.05 283.31 L425.40 283.27 L425.75 283.22 L426.10 283.14 L426.45 283.05 L426.80 282.93 L427.15 282.78 L427.50 282.60 L427.85 282.38 L428.20 282.13 L428.55 281.84 L428.90 281.53 L429.25 281.19 L429.60 280.83 L429.95 280.48 L430.30 280.13 L430.65 279.80 L431.00 279.52 L431.35 279.28 L431.70 279.12 L432.05 279.02 L432.40 279.00 L432.75 279.07" stroke="#606060"/><path d="M1480.00 273.85 L1480.35 273.90 L1480.70 274.00 L1481.05 274.17 L1481.40 274.38 L1481.75 274.64 L1482.10 274.94 L1482.45 275.40 L1482.80 275.93 L1483.15 276.48 L1483.50 277.05 L1483.85 277.62 L1484.20 278.18 L1484.55 278.74 L1484.90 279.28 L1485.25 279.81 L1485.60 280.31 L1485.95 280.79 L1486.30 281.24 L1486.65 281.67 L1487.00 282.07 L1487.35 282.37 L1487.70 282.54 L1488.05 282.69 L1488.40 282.82 L1488.75 282.93 L1489.10 283.02 L1489.45 283.10 L1489.80 283.16 L1490.15 283.21" stroke="#ee50a0"/><path d="M1490.10 283.21 L1490.45 283.25 L1490.80 283.28 L1491.15 283.31 L1491.50 283.33 L1491.85 283.35 L1492.20 283.36 L1492.55 283.37 L1492.90 283.38 L1493.25 283.39 L1493.60 283.39 L1493.95 283.39 L1494.30 283.39 L1494.65 283.40 L1495.00 283.40 L1495.35 283.40 L1495.70 283.40 L1496.05 283.40 L1496.40 283.40 L1496.75 283.40 L1497.10 283.40 L1497.45 283.40 L1497.80 283.40 L1498.15 283.40 L1498.50 283.40 L1498.85 283.40 L1499.20 283.40 L1499.55 283.40 L1499.90 283.40 L1500.25 283.40 L1500.60 283.40 L1500.95 283.40 L1501.30 283.40 L1501.65 283.40 L1502.00 283.40 L1502.35 283.40 L1502.70 283.40 L1503.05 283.40 L1503.40 283.40 L1503.75 283.40 L1504.10 283.40 L1504.45 283.40 L1504.80 283.40 L1505.15 283.40 L1505.50 283.40 L1505.85 283.40 L1506.20 283.40 L1506.55 283.40 L1506.90 283.40 L1507.25 283.40 L1507.60 283.40 L1507.95 283.40 L1508.30 283.40 L1508.65 283.40 L1509.00 283.40 L1509.35 283.40 L1509.70 277.48 L1510.05 270.57 L1510.40 263.67 L1510.75 256.76 L1511.10 257.75 L1511.45 264.60 L1511.80 271.15 L1512.15 277.71 L1512.50 282.28 L1512.85 281.93 L1513.20 281.57 L1513.55 281.22 L1513.90 280.86 L1514.25 280.51 L1514.60 280.15 L1514.95 279.90 L1515.30 280.25 L1515.65 280.61 L1516.00 280.96 L1516.35 281.32 L1516.70 281.67 L1517.05 282.03 L1517.40 282.39 L1517.75 282.74 L1518.10 283.10 L1518.45 283.40 L1518.80 283.40 L1519.15 283.40 L1519.50 283.40" stroke="#5c5c5c"/><path d="M1519.40 283.40 L1519.75 283.40 L1520.10 283.40 L1520.45 283.40 L1520.80 283.40 L1521.15 283.40 L1521.50 283.40 L1521.85 283.40 L1522.20 283.40 L1522.55 283.40 L1522.90 283.40 L1523.25 283.40 L1523.60 283.40 L1523.95 283.40 L1524.30 283.40 L1524.65 283.40 L1525.00 283.40 L1525.35 283.40 L1525.70 283.40 L1526.05 283.40 L1526.40 283.40 L1526.75 283.40 L1527.10 283.40 L1527.45 283.65 L1527.80 284.22 L1528.15 284.79 L1528.50 285.36 L1528.85 285.94 L1529.20 286.51 L1529.55 286.44 L1529.90 282.52 L1530.25 278.60 L1530.60 274.68 L1530.95 270.76 L1531.30 266.84 L1531.65 262.92 L1532.00 259.00 L1532.35 255.08 L1532.70 255.59 L1533.05 259.42 L1533.40 263.24 L1533.75 267.07 L1534.10 270.90 L1534.45 274.73 L1534.80 278.56 L1535.15 282.38 L1535.50 286.21 L1535.85 288.02 L1536.20 287.15 L1536.55 286.27 L1536.90 285.40 L1537.25 284.52 L1537.60 283.63 L1537.95 283.33 L1538.30 283.27 L1538.65 283.22 L1539.00 283.17 L1539.35 283.11 L1539.70 283.06 L1540.05 283.00 L1540.40 282.95 L1540.75 282.89 L1541.10 282.84 L1541.45 282.78 L1541.80 282.73 L1542.15 282.67 L1542.50 282.61 L1542.85 282.56 L1543.20 282.50 L1543.55 282.44 L1543.90 282.38 L1544.25 282.32 L1544.60 282.26 L1544.95 282.20 L1545.30 282.13 L1545.65 282.06 L1546.00 281.98 L1546.35 281.90 L1546.70 281.81 L1547.05 281.71 L1547.40 281.60 L1547.75 281.48 L1548.10 281.34 L1548.45 281.19 L1548.80 281.02 L1549.15 280.83 L1549.50 280.62 L1549.85 280.38 L1550.20 280.12 L1550.55 279.84 L1550.90 279.52 L1551.25 279.18 L1551.60 278.82 L1551.95 278.43 L1552.30 278.02 L1552.65 277.59 L1553.00 277.15 L1553.35 276.70 L1553.70 276.29 L1554.05 275.90 L1554.40 275.53 L1554.75 275.17 L1555.10 274.85 L1555.45 274.56 L1555.80 274.31 L1556.15 274.11 L1556.50 273.97 L1556.85 273.88 L1557.20 273.85 L1557.55 273.88 L1557.90 273.97 L1558.25 274.11 L1558.60 274.31 L1558.95 274.56 L1559.30 274.85 L1559.65 275.25 L1560.00 275.78 L1560.35 276.32 L1560.70 276.89 L1561.05 277.46 L1561.40 278.02 L1561.75 278.58 L1562.10 279.13 L1562.45 279.66 L1562.80 280.17 L1563.15 280.66 L1563.50 281.12 L1563.85 281.55 L1564.20 281.96 L1564.55 282.31 L1564.90 282.50 L1565.25 282.65 L1565.60 282.79 L1565.95 282.90 L1566.30 283.00 L1566.65 283.08 L1567.00 283.15 L1567.35 283.20 L1567.70 283.25" stroke="#ee50a0"/><path d="M1567.40 283.21 L1567.75 283.25 L1568.10 283.28 L1568.45 283.31 L1568.80 283.33 L1569.15 283.35 L1569.50 283.36 L1569.85 283.37 L1570.20 283.38 L1570.55 283.39 L1570.90 283.39 L1571.25 283.39 L1571.60 283.39 L1571.95 283.40 L1572.30 283.40 L1572.65 283.40 L1573.00 283.40 L1573.35 283.40 L1573.70 283.40 L1574.05 283.40 L1574.40 283.40 L1574.75 283.40 L1575.10 283.40 L1575.45 283.40 L1575.80 283.40 L1576.15 283.40 L1576.50 283.40 L1576.85 283.40 L1577.20 283.40 L1577.55 283.40 L1577.90 283.40 L1578.25 283.40 L1578.60 283.40 L1578.95 283.40 L1579.30 283.40 L1579.65 283.40 L1580.00 283.40 L1580.35 283.40 L1580.70 283.40 L1581.05 283.40 L1581.40 283.40 L1581.75 283.40 L1582.10 283.40 L1582.45 283.40 L1582.80 283.40 L1583.15 283.40 L1583.50 283.40 L1583.85 283.40 L1584.20 283.40 L1584.55 283.40 L1584.90 283.40 L1585.25 283.40 L1585.60 283.40 L1585.95 283.40 L1586.30 283.40 L1586.65 283.40 L1587.00 280.14 L1587.35 276.35 L1587.70 272.55 L1588.05 268.75 L1588.40 269.29 L1588.75 273.06 L1589.10 276.66 L1589.45 280.27 L1589.80 282.79 L1590.15 282.59 L1590.50 282.40 L1590.85 282.20 L1591.20 282.00 L1591.55 281.81 L1591.90 281.61 L1592.25 281.47 L1592.60 281.67 L1592.95 281.87 L1593.30 282.06 L1593.65 282.26 L1594.00 282.45 L1594.35 282.65 L1594.70 282.84 L1595.05 283.04 L1595.40 283.23 L1595.75 283.40 L1596.10 283.40 L1596.45 283.40 L1596.80 283.40" stroke="#5c5c5c"/><path d="M1596.70 283.40 L1597.05 283.40 L1597.40 283.40 L1597.75 283.40 L1598.10 283.40 L1598.45 283.40 L1598.80 283.40 L1599.15 283.40 L1599.50 283.40 L1599.85 283.40 L1600.20 283.40 L1600.55 283.40 L1600.90 283.40 L1601.25 283.40 L1601.60 283.40 L1601.95 283.40 L1602.30 283.40 L1602.65 283.40 L1603.00 283.40 L1603.35 283.40 L1603.70 283.40 L1604.05 283.40 L1604.40 283.40 L1604.75 283.65 L1605.10 284.22 L1605.45 284.79 L1605.80 285.36 L1606.15 285.94 L1606.50 286.51 L1606.85 286.44 L1607.20 282.52 L1607.55 278.60 L1607.90 274.68 L1608.25 270.76 L1608.60 266.84 L1608.95 262.92 L1609.30 259.00 L1609.65 255.08 L1610.00 255.59 L1610.35 259.42 L1610.70 263.24 L1611.05 267.07 L1611.40 270.90 L1611.75 274.73 L1612.10 278.56 L1612.45 282.38 L1612.80 286.21 L1613.15 288.02 L1613.50 287.15 L1613.85 286.27 L1614.20 285.40 L1614.55 284.52 L1614.90 283.63 L1615.25 283.33 L1615.60 283.27 L1615.95 283.22 L1616.30 283.17 L1616.65 283.11 L1617.00 283.06 L1617.35 283.00 L1617.70 282.95 L1618.05 282.89 L1618.40 282.84 L1618.75 282.78 L1619.10 282.73 L1619.45 282.67 L1619.80 282.61 L1620.15 282.56 L1620.50 282.50 L1620.85 282.44 L1621.20 282.38 L1621.55 282.32 L1621.90 282.26 L1622.25 282.20 L1622.60 282.13 L1622.95 282.06 L1623.30 281.98 L1623.65 281.90 L1624.00 281.81 L1624.35 281.71 L1624.70 281.60 L1625.05 281.48 L1625.40 281.34 L1625.75 281.19 L1626.10 281.02 L1626.45 280.83 L1626.80 280.62 L1627.15 280.38 L1627.50 280.12 L1627.85 279.84 L1628.20 279.52 L1628.55 279.18 L1628.90 278.82 L1629.25 278.43 L1629.60 278.02 L1629.95 277.59 L1630.30 277.15 L1630.65 276.70 L1631.00 276.29 L1631.35 275.90 L1631.70 275.53 L1632.05 275.17 L1632.40 274.85 L1632.75 274.56 L1633.10 274.31 L1633.45 274.11 L1633.80 273.97 L1634.15 273.88 L1634.50 273.85 L1634.85 273.88 L1635.20 273.97 L1635.55 274.11 L1635.90 274.31 L1636.25 274.56 L1636.60 274.85 L1636.95 275.25 L1637.30 275.78 L1637.65 276.32 L1638.00 276.89 L1638.35 277.46 L1638.70 278.02 L1639.05 278.58 L1639.40 279.13 L1639.75 279.66 L1640.10 280.17 L1640.45 280.66 L1640.80 281.12 L1641.15 281.55 L1641.50 281.96 L1641.85 282.31 L1642.20 282.50 L1642.55 282.65 L1642.90 282.79 L1643.25 282.90 L1643.60 283.00 L1643.95 283.08 L1644.30 283.15 L1644.65 283.20 L1645.00 283.25" stroke="#ee50a0"/><path d="M1644.70 283.21 L1645.05 283.25 L1645.40 283.28 L1645.75 283.31 L1646.10 283.33 L1646.45 283.35 L1646.80 283.36 L1647.15 283.37 L1647.50 283.38 L1647.85 283.39 L1648.20 283.39 L1648.55 283.39 L1648.90 283.39 L1649.25 283.40 L1649.60 283.40 L1649.95 283.40 L1650.30 283.40 L1650.65 283.40 L1651.00 283.40 L1651.35 283.40 L1651.70 283.40 L1652.05 283.40 L1652.40 283.40 L1652.75 283.40 L1653.10 283.40 L1653.45 283.40 L1653.80 283.40 L1654.15 283.40 L1654.50 283.40 L1654.85 283.40 L1655.20 283.40 L1655.55 283.40 L1655.90 283.40 L1656.25 283.40 L1656.60 283.40 L1656.95 283.40 L1657.30 283.40 L1657.65 283.40 L1658.00 283.40 L1658.35 283.40 L1658.70 283.40 L1659.05 283.40 L1659.40 283.40 L1659.75 283.40 L1660.10 283.40 L1660.45 283.40 L1660.80 283.40 L1661.15 283.40 L1661.50 283.40 L1661.85 283.40 L1662.20 283.40 L1662.55 283.40 L1662.90 283.40 L1663.25 283.40 L1663.60 283.40 L1663.95 283.40 L1664.30 274.70 L1664.65 264.54 L1665.00 254.39 L1665.35 244.24 L1665.70 245.69 L1666.05 255.77 L1666.40 265.40 L1666.75 275.03 L1667.10 281.76 L1667.45 281.24 L1667.80 280.71 L1668.15 280.19 L1668.50 279.67 L1668.85 279.15 L1669.20 278.63 L1669.55 278.25 L1669.90 278.78 L1670.25 279.30 L1670.60 279.82 L1670.95 280.34 L1671.30 280.86 L1671.65 281.39 L1672.00 281.91 L1672.35 282.43 L1672.70 282.95 L1673.05 283.40 L1673.40 283.40 L1673.75 283.40 L1674.10 283.40" stroke="#5c5c5c"/><path d="M1674.00 283.40 L1674.35 283.40 L1674.70 283.40 L1675.05 283.40 L1675.40 283.40 L1675.75 283.40 L1676.10 283.40 L1676.45 283.40 L1676.80 283.40 L1677.15 283.40 L1677.50 283.40 L1677.85 283.40 L1678.20 283.40 L1678.55 283.40 L1678.90 283.40 L1679.25 283.40 L1679.60 283.40 L1679.95 283.40 L1680.30 283.40 L1680.65 283.40 L1681.00 283.40 L1681.35 283.40 L1681.70 283.40 L1682.05 283.65 L1682.40 284.22 L1682.75 284.79 L1683.10 285.36 L1683.45 285.94 L1683.80 286.51 L1684.15 286.44 L1684.50 282.52 L1684.85 278.60 L1685.20 274.68 L1685.55 270.76 L1685.90 266.84 L1686.25 262.92 L1686.60 259.00 L1686.95 255.08 L1687.30 255.59 L1687.65 259.42 L1688.00 263.24 L1688.35 267.07 L1688.70 270.90 L1689.05 274.73 L1689.40 278.56 L1689.75 282.38 L1690.10 286.21 L1690.45 288.02 L1690.80 287.15 L1691.15 286.27 L1691.50 285.40 L1691.85 284.52 L1692.20 283.63 L1692.55 283.33 L1692.90 283.27 L1693.25 283.22 L1693.60 283.17 L1693.95 283.11 L1694.30 283.06 L1694.65 283.00 L1695.00 282.95 L1695.35 282.89 L1695.70 282.84 L1696.05 282.78 L1696.40 282.73 L1696.75 282.67 L1697.10 282.61 L1697.45 282.56 L1697.80 282.50 L1698.15 282.44 L1698.50 282.38 L1698.85 282.32 L1699.20 282.26 L1699.55 282.20 L1699.90 282.13 L1700.25 282.06 L1700.60 281.98 L1700.95 281.90 L1701.30 281.81 L1701.65 281.71 L1702.00 281.60 L1702.35 281.48 L1702.70 281.34 L1703.05 281.19 L1703.40 281.02 L1703.75 280.83 L1704.10 280.62 L1704.45 280.38 L1704.80 280.12 L1705.15 279.84 L1705.50 279.52 L1705.85 279.18 L1706.20 278.82 L1706.55 278.43 L1706.90 278.02 L1707.25 277.59 L1707.60 277.15 L1707.95 276.70 L1708.30 276.29 L1708.65 275.90 L1709.00 275.53 L1709.35 275.17 L1709.70 274.85 L1710.05 274.56 L1710.40 274.31 L1710.75 274.11 L1711.10 273.97 L1711.45 273.88 L1711.80 273.85 L1712.15 273.88 L1712.50 273.97 L1712.85 274.11 L1713.20 274.31 L1713.55 274.56 L1713.90 274.85 L1714.25 275.25 L1714.60 275.78 L1714.95 276.32 L1715.30 276.89 L1715.65 277.46 L1716.00 278.02 L1716.35 278.58 L1716.70 279.13 L1717.05 279.66 L1717.40 280.17 L1717.75 280.66 L1718.10 281.12 L1718.45 281.55 L1718.80 281.96 L1719.15 282.31 L1719.50 282.50 L1719.85 282.65 L1720.20 282.79 L1720.55 282.90 L1720.90 283.00 L1721.25 283.08 L1721.60 283.15 L1721.95 283.20 L1722.30 283.25" stroke="#ee50a0"/><path d="M1722.00 283.21 L1722.35 283.25 L1722.70 283.28 L1723.05 283.31 L1723.40 283.33 L1723.75 283.35 L1724.10 283.36 L1724.45 283.37 L1724.80 283.38 L1725.15 283.39 L1725.50 283.39 L1725.85 283.39 L1726.20 283.39 L1726.55 283.40 L1726.90 283.40 L1727.25 283.40 L1727.60 283.40 L1727.95 283.40 L1728.30 283.40 L1728.65 283.40 L1729.00 283.40 L1729.35 283.40 L1729.70 283.40 L1730.05 283.40 L1730.40 283.40 L1730.75 283.40 L1731.10 283.40 L1731.45 283.40 L1731.80 283.40 L1732.15 283.40 L1732.50 283.40 L1732.85 283.40 L1733.20 283.40 L1733.55 283.40 L1733.90 283.40 L1734.25 283.40 L1734.60 283.40 L1734.95 283.40 L1735.30 283.40 L1735.65 283.40 L1736.00 283.40 L1736.35 283.40 L1736.70 283.40 L1737.05 283.40 L1737.40 283.40 L1737.75 283.40 L1738.10 283.40 L1738.45 283.40 L1738.80 283.40 L1739.15 283.40 L1739.50 283.40 L1739.85 283.40 L1740.20 283.40 L1740.55 283.40 L1740.90 283.40 L1741.25 283.40 L1741.60 281.45 L1741.95 279.17 L1742.30 276.89 L1742.65 274.61 L1743.00 274.93 L1743.35 277.20 L1743.70 279.36 L1744.05 281.52 L1744.40 283.03 L1744.75 282.91 L1745.10 282.80 L1745.45 282.68 L1745.80 282.56 L1746.15 282.45 L1746.50 282.33 L1746.85 282.24 L1747.20 282.36 L1747.55 282.48 L1747.90 282.60 L1748.25 282.71 L1748.60 282.83 L1748.95 282.95 L1749.30 283.07 L1749.65 283.18 L1750.00 283.30 L1750.35 283.40 L1750.70 283.40 L1751.05 283.40 L1751.40 283.40" stroke="#5c5c5c"/><path d="M1751.30 283.40 L1751.65 283.40 L1752.00 283.40 L1752.35 283.40 L1752.70 283.40 L1753.05 283.40 L1753.40 283.40 L1753.75 283.40 L1754.10 283.40 L1754.45 283.40 L1754.80 283.40 L1755.15 283.40 L1755.50 283.40 L1755.85 283.40 L1756.20 283.40 L1756.55 283.40 L1756.90 283.40 L1757.25 283.40 L1757.60 283.40 L1757.95 283.40 L1758.30 283.40 L1758.65 283.40 L1759.00 283.40 L1759.35 283.65 L1759.70 284.22 L1760.05 284.79 L1760.40 285.36 L1760.75 285.94 L1761.10 286.51 L1761.45 286.44 L1761.80 282.52 L1762.15 278.60 L1762.50 274.68 L1762.85 270.76 L1763.20 266.84 L1763.55 262.92 L1763.90 259.00 L1764.25 255.08 L1764.60 255.59 L1764.95 259.42 L1765.30 263.24 L1765.65 267.07 L1766.00 270.90 L1766.35 274.73 L1766.70 278.56 L1767.05 282.38 L1767.40 286.21 L1767.75 288.02 L1768.10 287.15 L1768.45 286.27 L1768.80 285.40 L1769.15 284.52 L1769.50 283.63 L1769.85 283.33 L1770.20 283.27 L1770.55 283.22 L1770.90 283.17 L1771.25 283.11 L1771.60 283.06 L1771.95 283.00 L1772.30 282.95 L1772.65 282.89 L1773.00 282.84 L1773.35 282.78 L1773.70 282.73 L1774.05 282.67 L1774.40 282.61 L1774.75 282.56 L1775.10 282.50 L1775.45 282.44 L1775.80 282.38 L1776.15 282.32 L1776.50 282.26 L1776.85 282.20 L1777.20 282.13 L1777.55 282.06 L1777.90 281.98 L1778.25 281.90 L1778.60 281.81 L1778.95 281.71 L1779.30 281.60 L1779.65 281.48 L1780.00 281.34 L1780.35 281.19" stroke="#ee50a0"/><path d="M214.00 369.25 L214.35 369.57 L214.70 369.50 L215.05 368.45 L215.40 367.40 L215.75 366.35 L216.10 365.30 L216.45 364.25 L216.80 363.20 L217.15 362.15 L217.50 361.10 L217.85 361.74 L218.20 363.05 L218.55 364.36 L218.90 365.67 L219.25 366.99 L219.60 368.30 L219.95 369.61 L220.30 370.92 L220.65 372.24 L221.00 372.30 L221.35 371.42 L221.70 370.55 L222.05 369.67 L222.40 368.80 L222.75 367.92 L223.10 367.79 L223.45 367.78 L223.80 367.77 L224.15 367.76 L224.50 367.75 L224.85 367.74 L225.20 367.73 L225.55 367.73 L225.90 367.72 L226.25 367.71 L226.60 367.70 L226.95 367.69 L227.30 367.68 L227.65 367.67 L228.00 367.66 L228.35 367.66 L228.70 367.65 L229.05 367.64 L229.40 367.63 L229.75 367.62 L230.10 367.61 L230.45 367.60 L230.80 367.59 L231.15 367.57 L231.50 367.56 L231.85 367.55 L232.20 367.53 L232.55 367.51 L232.90 367.50 L233.25 367.47 L233.60 367.45 L233.95 367.42 L234.30 367.40 L234.65 367.36 L235.00 367.33 L235.35 367.30 L235.70 367.27 L236.05 367.22 L236.40 367.18 L236.75 367.13 L237.10 367.07 L237.45 367.01 L237.80 366.95 L238.15 366.89 L238.50 366.82 L238.85 366.75 L239.20 366.68 L239.55 366.62 L239.90 366.55 L240.25 366.49 L240.60 366.44 L240.95 366.39 L241.30 366.35 L241.65 366.32 L242.00 366.30 L242.35 366.28 L242.70 366.29 L243.05 366.31 L243.40 366.35 L243.75 366.39 L244.10 366.45 L244.45 366.51 L244.80 366.58 L245.15 366.65 L245.50 366.73 L245.85 366.82 L246.20 366.90 L246.55 366.99 L246.90 367.07 L247.25 367.16 L247.60 367.24 L247.95 367.31 L248.30 367.39 L248.65 367.46 L249.00 367.50 L249.35 367.55 L249.70 367.59 L250.05 367.62 L250.40 367.65 L250.75 367.68 L251.10 367.70 L251.45 367.72 L251.80 367.73 L252.15 367.75 L252.50 367.76 L252.85 367.77 L253.20 367.78 L253.55 367.78 L253.90 367.79 L254.25 367.79 L254.60 367.79 L254.95 367.79 L255.30 367.80 L255.65 367.80 L256.00 367.80 L256.35 367.80 L256.70 367.80 L257.05 367.80 L257.40 367.80 L257.75 367.80 L258.10 367.80 L258.45 367.80 L258.80 367.80 L259.15 367.80 L259.50 367.80 L259.85 367.80 L260.20 367.80 L260.55 367.80 L260.90 367.80 L261.25 367.80 L261.60 367.80 L261.95 367.80 L262.30 367.80 L262.65 367.80 L263.00 367.80 L263.35 367.80 L263.70 367.80 L264.05 367.80 L264.40 367.80 L264.75 367.80 L265.10 367.80 L265.45 367.80 L265.80 367.80 L266.15 367.80 L266.50 367.80 L266.85 367.80 L267.20 367.80 L267.55 367.80 L267.90 367.80 L268.25 367.80 L268.60 367.80 L268.95 367.80 L269.30 367.79 L269.65 367.79 L270.00 367.78 L270.35 367.78 L270.70 367.77 L271.05 367.75 L271.40 367.74 L271.75 367.71 L272.10 367.68 L272.45 367.65 L272.80 367.60 L273.15 367.55 L273.50 367.49 L273.85 367.43 L274.20 367.35 L274.55 367.27 L274.90 367.19 L275.25 367.11 L275.60 367.03 L275.95 366.96 L276.30 366.90 L276.65 366.85 L277.00 366.82 L277.35 366.80 L277.70 366.80 L278.05 366.82 L278.40 366.86 L278.75 366.91 L279.10 366.97 L279.45 367.05 L279.80 367.12 L280.15 367.21 L280.50 367.29 L280.85 367.36 L281.20 367.44 L281.55 367.50 L281.90 367.56 L282.25 367.61 L282.60 367.65 L282.95 367.69 L283.30 367.72 L283.65 367.74 L284.00 367.76 L284.35 367.77 L284.70 367.78 L285.05 367.79 L285.40 367.79 L285.75 367.79 L286.10 367.80 L286.45 367.80 L286.80 367.80 L287.15 367.80 L287.50 367.80 L287.85 367.80 L288.20 367.80 L288.55 367.80 L288.90 367.80 L289.25 367.80 L289.60 368.07 L289.95 368.39 L290.30 368.71 L290.65 369.03 L291.00 369.35 L291.35 369.66 L291.70 369.20 L292.05 368.15 L292.40 367.10 L292.75 366.05 L293.10 365.00 L293.45 363.95 L293.80 362.90 L294.15 361.85 L294.50 360.80 L294.85 362.11 L295.20 363.42 L295.55 364.74 L295.90 366.05 L296.25 367.36 L296.60 368.67 L296.95 369.99 L297.30 371.30 L297.65 372.61 L298.00 372.05 L298.35 371.17 L298.70 370.30 L299.05 369.42 L299.40 368.55 L299.75 367.79 L300.10 367.78 L300.45 367.78 L300.80 367.77 L301.15 367.76 L301.50 367.75 L301.85 367.74 L302.20 367.73 L302.55 367.72 L302.90 367.71 L303.25 367.71 L303.60 367.70 L303.95 367.69 L304.30 367.68 L304.65 367.67 L305.00 367.66 L305.35 367.65 L305.70 367.64 L306.05 367.63 L306.40 367.62 L306.75 367.61 L307.10 367.60 L307.45 367.59 L307.80 367.58 L308.15 367.57 L308.50 367.56 L308.85 367.54 L309.20 367.53 L309.55 367.51 L309.90 367.49 L310.25 367.47 L310.60 367.44 L310.95 367.42 L311.30 367.39 L311.65 367.36 L312.00 367.33 L312.35 367.29 L312.70 367.25 L313.05 367.21 L313.40 367.16 L313.75 367.11 L314.10 367.06 L314.45 367.00 L314.80 366.93 L315.15 366.87 L315.50 366.80 L315.85 366.73 L316.20 366.66 L316.55 366.60 L316.90 366.53 L317.25 366.48 L317.60 366.42 L317.95 366.38 L318.30 366.34 L318.65 366.31 L319.00 366.29 L319.35 366.28 L319.70 366.29 L320.05 366.32 L320.40 366.36 L320.75 366.41 L321.10 366.46 L321.45 366.53 L321.80 366.60 L322.15 366.68 L322.50 366.76 L322.85 366.84 L323.20 366.93 L323.55 367.01 L323.90 367.10 L324.25 367.18 L324.60 367.26 L324.95 367.34 L325.30 367.41 L325.65 367.47 L326.00 367.52 L326.35 367.56 L326.70 367.60 L327.05 367.63 L327.40 367.66 L327.75 367.68 L328.10 367.71 L328.45 367.72 L328.80 367.74 L329.15 367.75 L329.50 367.76 L329.85 367.77 L330.20 367.78 L330.55 367.78 L330.90 367.79 L331.25 367.79 L331.60 367.79 L331.95 367.79 L332.30 367.80 L332.65 367.80 L333.00 367.80 L333.35 367.80 L333.70 367.80 L334.05 367.80 L334.40 367.80 L334.75 367.80 L335.10 367.80 L335.45 367.80 L335.80 367.80 L336.15 367.80 L336.50 367.80 L336.85 367.80 L337.20 367.80 L337.55 367.80 L337.90 367.80 L338.25 367.80 L338.60 367.80 L338.95 367.80 L339.30 367.80 L339.65 367.80 L340.00 367.80 L340.35 367.80 L340.70 367.80 L341.05 367.80 L341.40 367.80 L341.75 367.80 L342.10 367.80 L342.45 367.80 L342.80 367.80 L343.15 367.80 L343.50 367.80 L343.85 367.80 L344.20 367.80 L344.55 367.80 L344.90 367.80 L345.25 367.80 L345.60 367.80 L345.95 367.80 L346.30 367.80 L346.65 367.79 L347.00 367.79 L347.35 367.79 L347.70 367.78 L348.05 367.77 L348.40 367.76 L348.75 367.74 L349.10 367.72 L349.45 367.70 L349.80 363.82 L350.15 359.30 L350.50 354.76 L350.85 350.22 L351.20 348.24 L351.55 352.65 L351.90 357.06 L352.25 361.34 L352.60 365.57 L352.95 366.60 L353.30 366.35 L353.65 366.11 L354.00 365.89 L354.35 365.67 L354.70 365.68 L355.05 365.84 L355.40 366.02 L355.75 366.23 L356.10 366.44 L356.45 366.67 L356.80 366.91 L357.15 367.09 L357.50 367.17 L357.85 367.25 L358.20 367.33 L358.55 367.41 L358.90 367.48 L359.25 367.54 L359.60 367.59 L359.95 367.64 L360.30 367.67 L360.65 367.71 L361.00 367.73 L361.35 367.75 L361.70 367.76 L362.05 367.77 L362.40 367.78 L362.75 367.79 L363.10 367.79 L363.45 367.79 L363.80 367.80 L364.15 367.80 L364.50 367.80 L364.85 367.80 L365.20 367.80 L365.55 367.80 L365.90 367.80 L366.25 367.80 L366.60 367.80 L366.95 367.94 L367.30 368.25 L367.65 368.57 L368.00 368.89 L368.35 369.21 L368.70 369.53 L369.05 369.65 L369.40 368.60 L369.75 367.55 L370.10 366.50 L370.45 365.45 L370.80 364.40 L371.15 363.35 L371.50 362.30 L371.85 361.25 L372.20 361.55 L372.55 362.86 L372.90 364.17 L373.25 365.49 L373.60 366.80 L373.95 368.11 L374.30 369.42 L374.65 370.74 L375.00 372.05 L375.35 372.42 L375.70 371.55 L376.05 370.67 L376.40 369.80 L376.75 368.92 L377.10 368.05 L377.45 367.79 L377.80 367.78 L378.15 367.77 L378.50 367.76 L378.85 367.75 L379.20 367.74 L379.55 367.74 L379.90 367.73 L380.25 367.72 L380.60 367.71 L380.95 367.70 L381.30 367.69 L381.65 367.68 L382.00 367.67 L382.35 367.67 L382.70 367.66 L383.05 367.65 L383.40 367.64 L383.75 367.63 L384.10 367.62 L384.45 367.61 L384.80 367.60 L385.15 367.59 L385.50 367.57 L385.85 367.56 L386.20 367.55 L386.55 367.53 L386.90 367.52 L387.25 367.50 L387.60 367.48 L387.95 367.45 L388.30 367.43 L388.65 367.40 L389.00 367.37 L389.35 367.34 L389.70 367.31 L390.05 367.27 L390.40 367.23 L390.75 367.18 L391.10 367.13 L391.45 367.08 L391.80 367.02 L392.15 366.96 L392.50 366.89 L392.85 366.83 L393.20 366.76 L393.55 366.69 L393.90 366.63 L394.25 366.56 L394.60 366.50 L394.95 366.45 L395.30 366.40 L395.65 366.35 L396.00 366.32 L396.35 366.30 L396.70 366.28 L397.05 366.28 L397.40 366.31 L397.75 366.34 L398.10 366.39 L398.45 366.44 L398.80 366.50 L399.15 366.57 L399.50 366.64 L399.85 366.72 L400.20 366.80 L400.55 366.89 L400.90 366.97 L401.25 367.06 L401.60 367.14 L401.95 367.23 L402.30 367.30 L402.65 367.38 L403.00 367.45 L403.35 367.50 L403.70 367.54 L404.05 367.58 L404.40 367.62 L404.75 367.65 L405.10 367.67 L405.45 367.70 L405.80 367.72 L406.15 367.73 L406.50 367.75 L406.85 367.76 L407.20 367.77 L407.55 367.77 L407.90 367.78 L408.25 367.78 L408.60 367.79 L408.95 367.79 L409.30 367.79 L409.65 367.80 L410.00 367.80 L410.35 367.80 L410.70 367.80 L411.05 367.80 L411.40 367.80 L411.75 367.80 L412.10 367.80 L412.45 367.80 L412.80 367.80 L413.15 367.80 L413.50 367.80 L413.85 367.80 L414.20 367.80 L414.55 367.80 L414.90 367.80 L415.25 367.80 L415.60 367.80 L415.95 367.80 L416.30 367.80 L416.65 367.80 L417.00 367.80 L417.35 367.80 L417.70 367.80 L418.05 367.80 L418.40 367.80 L418.75 367.80 L419.10 367.80 L419.45 367.80 L419.80 367.80 L420.15 367.80 L420.50 367.80 L420.85 367.80 L421.20 367.80 L421.55 367.80 L421.90 367.80 L422.25 367.80 L422.60 367.80 L422.95 367.80 L423.30 367.80 L423.65 367.80 L424.00 367.79 L424.35 367.79 L424.70 367.79 L425.05 367.78 L425.40 367.77 L425.75 367.76 L426.10 367.74 L426.45 367.72 L426.80 367.69 L427.15 367.66 L427.50 367.62 L427.85 367.57 L428.20 367.51 L428.55 367.45 L428.90 367.37 L429.25 367.30 L429.60 367.22 L429.95 367.14 L430.30 367.06 L430.65 366.98 L431.00 366.92 L431.35 366.86 L431.70 366.83 L432.05 366.80 L432.40 366.80 L432.75 366.81" stroke="#606060"/><path d="M1480.00 366.45 L1480.35 366.46 L1480.70 366.47 L1481.05 366.50 L1481.40 366.53 L1481.75 366.57 L1482.10 366.61 L1482.45 366.68 L1482.80 366.75 L1483.15 366.83 L1483.50 366.91 L1483.85 366.99 L1484.20 367.07 L1484.55 367.14 L1484.90 367.22 L1485.25 367.29 L1485.60 367.36 L1485.95 367.43 L1486.30 367.49 L1486.65 367.55 L1487.00 367.60 L1487.35 367.65 L1487.70 367.67 L1488.05 367.69 L1488.40 367.71 L1488.75 367.73 L1489.10 367.74 L1489.45 367.76 L1489.80 367.76 L1490.15 367.77" stroke="#ee50a0"/><path d="M1490.10 367.77 L1490.45 367.78 L1490.80 367.78 L1491.15 367.79 L1491.50 367.79 L1491.85 367.79 L1492.20 367.79 L1492.55 367.80 L1492.90 367.80 L1493.25 367.80 L1493.60 367.80 L1493.95 367.80 L1494.30 367.80 L1494.65 367.80 L1495.00 367.80 L1495.35 367.80 L1495.70 367.80 L1496.05 367.80 L1496.40 367.80 L1496.75 367.80 L1497.10 367.80 L1497.45 367.80 L1497.80 367.80 L1498.15 367.80 L1498.50 367.80 L1498.85 367.80 L1499.20 367.80 L1499.55 367.80 L1499.90 367.80 L1500.25 367.80 L1500.60 367.80 L1500.95 367.80 L1501.30 367.80 L1501.65 367.80 L1502.00 367.80 L1502.35 367.80 L1502.70 367.80 L1503.05 367.80 L1503.40 367.80 L1503.75 367.80 L1504.10 367.80 L1504.45 367.80 L1504.80 367.80 L1505.15 367.80 L1505.50 367.80 L1505.85 367.80 L1506.20 367.80 L1506.55 367.80 L1506.90 367.80 L1507.25 367.80 L1507.60 367.80 L1507.95 367.80 L1508.30 367.80 L1508.65 367.80 L1509.00 367.80 L1509.35 367.80 L1509.70 366.14 L1510.05 364.20 L1510.40 362.27 L1510.75 360.33 L1511.10 360.61 L1511.45 362.53 L1511.80 364.37 L1512.15 366.20 L1512.50 367.49 L1512.85 367.39 L1513.20 367.29 L1513.55 367.19 L1513.90 367.09 L1514.25 366.99 L1514.60 366.89 L1514.95 366.82 L1515.30 366.92 L1515.65 367.02 L1516.00 367.12 L1516.35 367.22 L1516.70 367.32 L1517.05 367.42 L1517.40 367.52 L1517.75 367.62 L1518.10 367.71 L1518.45 367.80 L1518.80 367.80 L1519.15 367.80 L1519.50 367.80" stroke="#5c5c5c"/><path d="M1519.40 367.80 L1519.75 367.80 L1520.10 367.80 L1520.45 367.80 L1520.80 367.80 L1521.15 367.80 L1521.50 367.80 L1521.85 367.80 L1522.20 367.80 L1522.55 367.80 L1522.90 367.80 L1523.25 367.80 L1523.60 367.80 L1523.95 367.80 L1524.30 367.80 L1524.65 367.80 L1525.00 367.80 L1525.35 367.80 L1525.70 367.80 L1526.05 367.80 L1526.40 367.80 L1526.75 367.80 L1527.10 367.80 L1527.45 367.90 L1527.80 368.14 L1528.15 368.38 L1528.50 368.62 L1528.85 368.86 L1529.20 369.10 L1529.55 369.15 L1529.90 368.09 L1530.25 367.02 L1530.60 365.96 L1530.95 364.90 L1531.30 363.84 L1531.65 362.78 L1532.00 361.72 L1532.35 360.65 L1532.70 360.99 L1533.05 362.37 L1533.40 363.74 L1533.75 365.12 L1534.10 366.50 L1534.45 367.88 L1534.80 369.26 L1535.15 370.63 L1535.50 372.01 L1535.85 372.42 L1536.20 371.55 L1536.55 370.67 L1536.90 369.80 L1537.25 368.92 L1537.60 368.05 L1537.95 367.79 L1538.30 367.78 L1538.65 367.78 L1539.00 367.77 L1539.35 367.77 L1539.70 367.76 L1540.05 367.75 L1540.40 367.75 L1540.75 367.74 L1541.10 367.73 L1541.45 367.73 L1541.80 367.72 L1542.15 367.71 L1542.50 367.71 L1542.85 367.70 L1543.20 367.69 L1543.55 367.68 L1543.90 367.68 L1544.25 367.67 L1544.60 367.66 L1544.95 367.65 L1545.30 367.65 L1545.65 367.64 L1546.00 367.63 L1546.35 367.62 L1546.70 367.60 L1547.05 367.59 L1547.40 367.58 L1547.75 367.56 L1548.10 367.54 L1548.45 367.52 L1548.80 367.50 L1549.15 367.47 L1549.50 367.44 L1549.85 367.41 L1550.20 367.37 L1550.55 367.33 L1550.90 367.28 L1551.25 367.23 L1551.60 367.18 L1551.95 367.12 L1552.30 367.07 L1552.65 367.00 L1553.00 366.94 L1553.35 366.87 L1553.70 366.81 L1554.05 366.76 L1554.40 366.70 L1554.75 366.65 L1555.10 366.60 L1555.45 366.56 L1555.80 366.52 L1556.15 366.49 L1556.50 366.47 L1556.85 366.45 L1557.20 366.45 L1557.55 366.45 L1557.90 366.47 L1558.25 366.49 L1558.60 366.52 L1558.95 366.56 L1559.30 366.60 L1559.65 366.66 L1560.00 366.73 L1560.35 366.81 L1560.70 366.88 L1561.05 366.96 L1561.40 367.04 L1561.75 367.12 L1562.10 367.20 L1562.45 367.27 L1562.80 367.34 L1563.15 367.41 L1563.50 367.47 L1563.85 367.53 L1564.20 367.59 L1564.55 367.64 L1564.90 367.67 L1565.25 367.69 L1565.60 367.71 L1565.95 367.73 L1566.30 367.74 L1566.65 367.75 L1567.00 367.76 L1567.35 367.77 L1567.70 367.78" stroke="#ee50a0"/><path d="M1567.40 367.77 L1567.75 367.78 L1568.10 367.78 L1568.45 367.79 L1568.80 367.79 L1569.15 367.79 L1569.50 367.79 L1569.85 367.80 L1570.20 367.80 L1570.55 367.80 L1570.90 367.80 L1571.25 367.80 L1571.60 367.80 L1571.95 367.80 L1572.30 367.80 L1572.65 367.80 L1573.00 367.80 L1573.35 367.80 L1573.70 367.80 L1574.05 367.80 L1574.40 367.80 L1574.75 367.80 L1575.10 367.80 L1575.45 367.80 L1575.80 367.80 L1576.15 367.80 L1576.50 367.80 L1576.85 367.80 L1577.20 367.80 L1577.55 367.80 L1577.90 367.80 L1578.25 367.80 L1578.60 367.80 L1578.95 367.80 L1579.30 367.80 L1579.65 367.80 L1580.00 367.80 L1580.35 367.80 L1580.70 367.80 L1581.05 367.80 L1581.40 367.80 L1581.75 367.80 L1582.10 367.80 L1582.45 367.80 L1582.80 367.80 L1583.15 367.80 L1583.50 367.80 L1583.85 367.80 L1584.20 367.80 L1584.55 367.80 L1584.90 367.80 L1585.25 367.80 L1585.60 367.80 L1585.95 367.80 L1586.30 367.80 L1586.65 367.80 L1587.00 366.89 L1587.35 365.82 L1587.70 364.76 L1588.05 363.69 L1588.40 363.84 L1588.75 364.90 L1589.10 365.91 L1589.45 366.92 L1589.80 367.63 L1590.15 367.57 L1590.50 367.52 L1590.85 367.46 L1591.20 367.41 L1591.55 367.35 L1591.90 367.30 L1592.25 367.26 L1592.60 367.31 L1592.95 367.37 L1593.30 367.42 L1593.65 367.48 L1594.00 367.53 L1594.35 367.59 L1594.70 367.64 L1595.05 367.70 L1595.40 367.75 L1595.75 367.80 L1596.10 367.80 L1596.45 367.80 L1596.80 367.80" stroke="#5c5c5c"/><path d="M1596.70 367.80 L1597.05 367.80 L1597.40 367.80 L1597.75 367.80 L1598.10 367.80 L1598.45 367.80 L1598.80 367.80 L1599.15 367.80 L1599.50 367.80 L1599.85 367.80 L1600.20 367.80 L1600.55 367.80 L1600.90 367.80 L1601.25 367.80 L1601.60 367.80 L1601.95 367.80 L1602.30 367.80 L1602.65 367.80 L1603.00 367.80 L1603.35 367.80 L1603.70 367.80 L1604.05 367.80 L1604.40 367.80 L1604.75 367.90 L1605.10 368.14 L1605.45 368.38 L1605.80 368.62 L1606.15 368.86 L1606.50 369.10 L1606.85 369.15 L1607.20 368.09 L1607.55 367.02 L1607.90 365.96 L1608.25 364.90 L1608.60 363.84 L1608.95 362.78 L1609.30 361.72 L1609.65 360.65 L1610.00 360.99 L1610.35 362.37 L1610.70 363.74 L1611.05 365.12 L1611.40 366.50 L1611.75 367.88 L1612.10 369.26 L1612.45 370.63 L1612.80 372.01 L1613.15 372.42 L1613.50 371.55 L1613.85 370.67 L1614.20 369.80 L1614.55 368.92 L1614.90 368.05 L1615.25 367.79 L1615.60 367.78 L1615.95 367.78 L1616.30 367.77 L1616.65 367.77 L1617.00 367.76 L1617.35 367.75 L1617.70 367.75 L1618.05 367.74 L1618.40 367.73 L1618.75 367.73 L1619.10 367.72 L1619.45 367.71 L1619.80 367.71 L1620.15 367.70 L1620.50 367.69 L1620.85 367.68 L1621.20 367.68 L1621.55 367.67 L1621.90 367.66 L1622.25 367.65 L1622.60 367.65 L1622.95 367.64 L1623.30 367.63 L1623.65 367.62 L1624.00 367.60 L1624.35 367.59 L1624.70 367.58 L1625.05 367.56 L1625.40 367.54 L1625.75 367.52 L1626.10 367.50 L1626.45 367.47 L1626.80 367.44 L1627.15 367.41 L1627.50 367.37 L1627.85 367.33 L1628.20 367.28 L1628.55 367.23 L1628.90 367.18 L1629.25 367.12 L1629.60 367.07 L1629.95 367.00 L1630.30 366.94 L1630.65 366.87 L1631.00 366.81 L1631.35 366.76 L1631.70 366.70 L1632.05 366.65 L1632.40 366.60 L1632.75 366.56 L1633.10 366.52 L1633.45 366.49 L1633.80 366.47 L1634.15 366.45 L1634.50 366.45 L1634.85 366.45 L1635.20 366.47 L1635.55 366.49 L1635.90 366.52 L1636.25 366.56 L1636.60 366.60 L1636.95 366.66 L1637.30 366.73 L1637.65 366.81 L1638.00 366.88 L1638.35 366.96 L1638.70 367.04 L1639.05 367.12 L1639.40 367.20 L1639.75 367.27 L1640.10 367.34 L1640.45 367.41 L1640.80 367.47 L1641.15 367.53 L1641.50 367.59 L1641.85 367.64 L1642.20 367.67 L1642.55 367.69 L1642.90 367.71 L1643.25 367.73 L1643.60 367.74 L1643.95 367.75 L1644.30 367.76 L1644.65 367.77 L1645.00 367.78" stroke="#ee50a0"/><path d="M1644.70 367.77 L1645.05 367.78 L1645.40 367.78 L1645.75 367.79 L1646.10 367.79 L1646.45 367.79 L1646.80 367.79 L1647.15 367.80 L1647.50 367.80 L1647.85 367.80 L1648.20 367.80 L1648.55 367.80 L1648.90 367.80 L1649.25 367.80 L1649.60 367.80 L1649.95 367.80 L1650.30 367.80 L1650.65 367.80 L1651.00 367.80 L1651.35 367.80 L1651.70 367.80 L1652.05 367.80 L1652.40 367.80 L1652.75 367.80 L1653.10 367.80 L1653.45 367.80 L1653.80 367.80 L1654.15 367.80 L1654.50 367.80 L1654.85 367.80 L1655.20 367.80 L1655.55 367.80 L1655.90 367.80 L1656.25 367.80 L1656.60 367.80 L1656.95 367.80 L1657.30 367.80 L1657.65 367.80 L1658.00 367.80 L1658.35 367.80 L1658.70 367.80 L1659.05 367.80 L1659.40 367.80 L1659.75 367.80 L1660.10 367.80 L1660.45 367.80 L1660.80 367.80 L1661.15 367.80 L1661.50 367.80 L1661.85 367.80 L1662.20 367.80 L1662.55 367.80 L1662.90 367.80 L1663.25 367.80 L1663.60 367.80 L1663.95 367.80 L1664.30 365.36 L1664.65 362.51 L1665.00 359.67 L1665.35 356.82 L1665.70 357.23 L1666.05 360.05 L1666.40 362.75 L1666.75 365.45 L1667.10 367.34 L1667.45 367.19 L1667.80 367.05 L1668.15 366.90 L1668.50 366.75 L1668.85 366.61 L1669.20 366.46 L1669.55 366.36 L1669.90 366.50 L1670.25 366.65 L1670.60 366.80 L1670.95 366.94 L1671.30 367.09 L1671.65 367.24 L1672.00 367.38 L1672.35 367.53 L1672.70 367.67 L1673.05 367.80 L1673.40 367.80 L1673.75 367.80 L1674.10 367.80" stroke="#5c5c5c"/><path d="M1674.00 367.80 L1674.35 367.80 L1674.70 367.80 L1675.05 367.80 L1675.40 367.80 L1675.75 367.80 L1676.10 367.80 L1676.45 367.80 L1676.80 367.80 L1677.15 367.80 L1677.50 367.80 L1677.85 367.80 L1678.20 367.80 L1678.55 367.80 L1678.90 367.80 L1679.25 367.80 L1679.60 367.80 L1679.95 367.80 L1680.30 367.80 L1680.65 367.80 L1681.00 367.80 L1681.35 367.80 L1681.70 367.80 L1682.05 367.90 L1682.40 368.14 L1682.75 368.38 L1683.10 368.62 L1683.45 368.86 L1683.80 369.10 L1684.15 369.15 L1684.50 368.09 L1684.85 367.02 L1685.20 365.96 L1685.55 364.90 L1685.90 363.84 L1686.25 362.78 L1686.60 361.72 L1686.95 360.65 L1687.30 360.99 L1687.65 362.37 L1688.00 363.74 L1688.35 365.12 L1688.70 366.50 L1689.05 367.88 L1689.40 369.26 L1689.75 370.63 L1690.10 372.01 L1690.45 372.42 L1690.80 371.55 L1691.15 370.67 L1691.50 369.80 L1691.85 368.92 L1692.20 368.05 L1692.55 367.79 L1692.90 367.78 L1693.25 367.78 L1693.60 367.77 L1693.95 367.77 L1694.30 367.76 L1694.65 367.75 L1695.00 367.75 L1695.35 367.74 L1695.70 367.73 L1696.05 367.73 L1696.40 367.72 L1696.75 367.71 L1697.10 367.71 L1697.45 367.70 L1697.80 367.69 L1698.15 367.68 L1698.50 367.68 L1698.85 367.67 L1699.20 367.66 L1699.55 367.65 L1699.90 367.65 L1700.25 367.64 L1700.60 367.63 L1700.95 367.62 L1701.30 367.60 L1701.65 367.59 L1702.00 367.58 L1702.35 367.56 L1702.70 367.54 L1703.05 367.52 L1703.40 367.50 L1703.75 367.47 L1704.10 367.44 L1704.45 367.41 L1704.80 367.37 L1705.15 367.33 L1705.50 367.28 L1705.85 367.23 L1706.20 367.18 L1706.55 367.12 L1706.90 367.07 L1707.25 367.00 L1707.60 366.94 L1707.95 366.87 L1708.30 366.81 L1708.65 366.76 L1709.00 366.70 L1709.35 366.65 L1709.70 366.60 L1710.05 366.56 L1710.40 366.52 L1710.75 366.49 L1711.10 366.47 L1711.45 366.45 L1711.80 366.45 L1712.15 366.45 L1712.50 366.47 L1712.85 366.49 L1713.20 366.52 L1713.55 366.56 L1713.90 366.60 L1714.25 366.66 L1714.60 366.73 L1714.95 366.81 L1715.30 366.88 L1715.65 366.96 L1716.00 367.04 L1716.35 367.12 L1716.70 367.20 L1717.05 367.27 L1717.40 367.34 L1717.75 367.41 L1718.10 367.47 L1718.45 367.53 L1718.80 367.59 L1719.15 367.64 L1719.50 367.67 L1719.85 367.69 L1720.20 367.71 L1720.55 367.73 L1720.90 367.74 L1721.25 367.75 L1721.60 367.76 L1721.95 367.77 L1722.30 367.78" stroke="#ee50a0"/><path d="M1722.00 367.77 L1722.35 367.78 L1722.70 367.78 L1723.05 367.79 L1723.40 367.79 L1723.75 367.79 L1724.10 367.79 L1724.45 367.80 L1724.80 367.80 L1725.15 367.80 L1725.50 367.80 L1725.85 367.80 L1726.20 367.80 L1726.55 367.80 L1726.90 367.80 L1727.25 367.80 L1727.60 367.80 L1727.95 367.80 L1728.30 367.80 L1728.65 367.80 L1729.00 367.80 L1729.35 367.80 L1729.70 367.80 L1730.05 367.80 L1730.40 367.80 L1730.75 367.80 L1731.10 367.80 L1731.45 367.80 L1731.80 367.80 L1732.15 367.80 L1732.50 367.80 L1732.85 367.80 L1733.20 367.80 L1733.55 367.80 L1733.90 367.80 L1734.25 367.80 L1734.60 367.80 L1734.95 367.80 L1735.30 367.80 L1735.65 367.80 L1736.00 367.80 L1736.35 367.80 L1736.70 367.80 L1737.05 367.80 L1737.40 367.80 L1737.75 367.80 L1738.10 367.80 L1738.45 367.80 L1738.80 367.80 L1739.15 367.80 L1739.50 367.80 L1739.85 367.80 L1740.20 367.80 L1740.55 367.80 L1740.90 367.80 L1741.25 367.80 L1741.60 367.25 L1741.95 366.61 L1742.30 365.97 L1742.65 365.33 L1743.00 365.43 L1743.35 366.06 L1743.70 366.67 L1744.05 367.27 L1744.40 367.70 L1744.75 367.66 L1745.10 367.63 L1745.45 367.60 L1745.80 367.57 L1746.15 367.53 L1746.50 367.50 L1746.85 367.48 L1747.20 367.51 L1747.55 367.54 L1747.90 367.57 L1748.25 367.61 L1748.60 367.64 L1748.95 367.67 L1749.30 367.71 L1749.65 367.74 L1750.00 367.77 L1750.35 367.80 L1750.70 367.80 L1751.05 367.80 L1751.40 367.80" stroke="#5c5c5c"/><path d="M1751.30 367.80 L1751.65 367.80 L1752.00 367.80 L1752.35 367.80 L1752.70 367.80 L1753.05 367.80 L1753.40 367.80 L1753.75 367.80 L1754.10 367.80 L1754.45 367.80 L1754.80 367.80 L1755.15 367.80 L1755.50 367.80 L1755.85 367.80 L1756.20 367.80 L1756.55 367.80 L1756.90 367.80 L1757.25 367.80 L1757.60 367.80 L1757.95 367.80 L1758.30 367.80 L1758.65 367.80 L1759.00 367.80 L1759.35 367.90 L1759.70 368.14 L1760.05 368.38 L1760.40 368.62 L1760.75 368.86 L1761.10 369.10 L1761.45 369.15 L1761.80 368.09 L1762.15 367.02 L1762.50 365.96 L1762.85 364.90 L1763.20 363.84 L1763.55 362.78 L1763.90 361.72 L1764.25 360.65 L1764.60 360.99 L1764.95 362.37 L1765.30 363.74 L1765.65 365.12 L1766.00 366.50 L1766.35 367.88 L1766.70 369.26 L1767.05 370.63 L1767.40 372.01 L1767.75 372.42 L1768.10 371.55 L1768.45 370.67 L1768.80 369.80 L1769.15 368.92 L1769.50 368.05 L1769.85 367.79 L1770.20 367.78 L1770.55 367.78 L1770.90 367.77 L1771.25 367.77 L1771.60 367.76 L1771.95 367.75 L1772.30 367.75 L1772.65 367.74 L1773.00 367.73 L1773.35 367.73 L1773.70 367.72 L1774.05 367.71 L1774.40 367.71 L1774.75 367.70 L1775.10 367.69 L1775.45 367.68 L1775.80 367.68 L1776.15 367.67 L1776.50 367.66 L1776.85 367.65 L1777.20 367.65 L1777.55 367.64 L1777.90 367.63 L1778.25 367.62 L1778.60 367.60 L1778.95 367.59 L1779.30 367.58 L1779.65 367.56 L1780.00 367.54 L1780.35 367.52" stroke="#ee50a0"/><path d="M214.00 451.27 L214.35 451.11 L214.70 451.93 L215.05 455.20 L215.40 458.47 L215.75 461.73 L216.10 465.00 L216.45 468.27 L216.80 471.53 L217.15 474.80 L217.50 478.07 L217.85 476.73 L218.20 473.56 L218.55 470.39 L218.90 467.22 L219.25 464.05 L219.60 460.88 L219.95 457.70 L220.30 454.53 L220.65 451.36 L221.00 450.20 L221.35 450.55 L221.70 450.90 L222.05 451.25 L222.40 451.60 L222.75 451.97 L223.10 452.06 L223.45 452.11 L223.80 452.15 L224.15 452.19 L224.50 452.24 L224.85 452.28 L225.20 452.33 L225.55 452.37 L225.90 452.41 L226.25 452.46 L226.60 452.50 L226.95 452.54 L227.30 452.59 L227.65 452.63 L228.00 452.68 L228.35 452.72 L228.70 452.77 L229.05 452.82 L229.40 452.86 L229.75 452.91 L230.10 452.96 L230.45 453.01 L230.80 453.07 L231.15 453.12 L231.50 453.18 L231.85 453.25 L232.20 453.32 L232.55 453.40 L232.90 453.48 L233.25 453.58 L233.60 453.68 L233.95 453.80 L234.30 453.93 L234.65 454.07 L235.00 454.19 L235.35 454.33 L235.70 454.48 L236.05 454.65 L236.40 454.85 L236.75 455.06 L237.10 455.29 L237.45 455.54 L237.80 455.80 L238.15 456.07 L238.50 456.35 L238.85 456.63 L239.20 456.92 L239.55 457.20 L239.90 457.46 L240.25 457.71 L240.60 457.94 L240.95 458.14 L241.30 458.31 L241.65 458.44 L242.00 458.54 L242.35 458.59 L242.70 458.57 L243.05 458.45 L243.40 458.29 L243.75 458.08 L244.10 457.84 L244.45 457.57 L244.80 457.26 L245.15 456.93 L245.50 456.59 L245.85 456.23 L246.20 455.86 L246.55 455.48 L246.90 455.11 L247.25 454.75 L247.60 454.40 L247.95 454.06 L248.30 453.73 L248.65 453.44 L249.00 453.23 L249.35 453.05 L249.70 452.89 L250.05 452.75 L250.40 452.62 L250.75 452.51 L251.10 452.42 L251.45 452.34 L251.80 452.27 L252.15 452.22 L252.50 452.17 L252.85 452.13 L253.20 452.10 L253.55 452.08 L253.90 452.06 L254.25 452.05 L254.60 452.03 L254.95 452.03 L255.30 452.02 L255.65 452.01 L256.00 452.01 L256.35 452.01 L256.70 452.01 L257.05 452.00 L257.40 452.00 L257.75 452.00 L258.10 452.00 L258.45 452.00 L258.80 452.00 L259.15 452.00 L259.50 452.00 L259.85 452.00 L260.20 452.00 L260.55 452.00 L260.90 452.00 L261.25 452.00 L261.60 452.00 L261.95 452.00 L262.30 452.00 L262.65 452.00 L263.00 452.00 L263.35 452.00 L263.70 452.00 L264.05 452.00 L264.40 452.00 L264.75 452.00 L265.10 452.00 L265.45 452.00 L265.80 452.00 L266.15 452.00 L266.50 452.00 L266.85 452.00 L267.20 452.00 L267.55 452.00 L267.90 452.00 L268.25 452.00 L268.60 452.01 L268.95 452.01 L269.30 452.02 L269.65 452.03 L270.00 452.04 L270.35 452.06 L270.70 452.08 L271.05 452.12 L271.40 452.16 L271.75 452.22 L272.10 452.29 L272.45 452.38 L272.80 452.49 L273.15 452.62 L273.50 452.77 L273.85 452.93 L274.20 453.12 L274.55 453.31 L274.90 453.52 L275.25 453.72 L275.60 453.91 L275.95 454.09 L276.30 454.25 L276.65 454.37 L277.00 454.45 L277.35 454.50 L277.70 454.49 L278.05 454.44 L278.40 454.35 L278.75 454.23 L279.10 454.07 L279.45 453.89 L279.80 453.69 L280.15 453.49 L280.50 453.28 L280.85 453.09 L281.20 452.91 L281.55 452.74 L281.90 452.60 L282.25 452.47 L282.60 452.37 L282.95 452.28 L283.30 452.21 L283.65 452.15 L284.00 452.11 L284.35 452.08 L284.70 452.05 L285.05 452.04 L285.40 452.02 L285.75 452.02 L286.10 452.01 L286.45 452.01 L286.80 452.00 L287.15 452.00 L287.50 452.00 L287.85 452.00 L288.20 452.00 L288.55 452.00 L288.90 452.00 L289.25 452.00 L289.60 451.86 L289.95 451.70 L290.30 451.55 L290.65 451.39 L291.00 451.23 L291.35 451.07 L291.70 452.87 L292.05 456.13 L292.40 459.40 L292.75 462.67 L293.10 465.93 L293.45 469.20 L293.80 472.47 L294.15 475.73 L294.50 479.00 L294.85 475.83 L295.20 472.66 L295.55 469.48 L295.90 466.31 L296.25 463.14 L296.60 459.97 L296.95 456.80 L297.30 453.63 L297.65 450.45 L298.00 450.30 L298.35 450.65 L298.70 451.00 L299.05 451.35 L299.40 451.70 L299.75 452.03 L300.10 452.08 L300.45 452.12 L300.80 452.16 L301.15 452.21 L301.50 452.25 L301.85 452.29 L302.20 452.34 L302.55 452.38 L302.90 452.43 L303.25 452.47 L303.60 452.51 L303.95 452.56 L304.30 452.60 L304.65 452.65 L305.00 452.69 L305.35 452.74 L305.70 452.78 L306.05 452.83 L306.40 452.88 L306.75 452.92 L307.10 452.97 L307.45 453.03 L307.80 453.08 L308.15 453.14 L308.50 453.20 L308.85 453.27 L309.20 453.34 L309.55 453.42 L309.90 453.51 L310.25 453.61 L310.60 453.72 L310.95 453.84 L311.30 453.97 L311.65 454.10 L312.00 454.23 L312.35 454.37 L312.70 454.53 L313.05 454.71 L313.40 454.91 L313.75 455.12 L314.10 455.36 L314.45 455.61 L314.80 455.87 L315.15 456.15 L315.50 456.43 L315.85 456.72 L316.20 457.00 L316.55 457.27 L316.90 457.54 L317.25 457.78 L317.60 458.00 L317.95 458.19 L318.30 458.35 L318.65 458.47 L319.00 458.56 L319.35 458.60 L319.70 458.54 L320.05 458.41 L320.40 458.23 L320.75 458.02 L321.10 457.77 L321.45 457.48 L321.80 457.17 L322.15 456.84 L322.50 456.48 L322.85 456.12 L323.20 455.75 L323.55 455.38 L323.90 455.01 L324.25 454.65 L324.60 454.30 L324.95 453.96 L325.30 453.64 L325.65 453.38 L326.00 453.18 L326.35 453.00 L326.70 452.85 L327.05 452.71 L327.40 452.59 L327.75 452.48 L328.10 452.39 L328.45 452.32 L328.80 452.26 L329.15 452.20 L329.50 452.16 L329.85 452.12 L330.20 452.10 L330.55 452.07 L330.90 452.06 L331.25 452.04 L331.60 452.03 L331.95 452.02 L332.30 452.02 L332.65 452.01 L333.00 452.01 L333.35 452.01 L333.70 452.00 L334.05 452.00 L334.40 452.00 L334.75 452.00 L335.10 452.00 L335.45 452.00 L335.80 452.00 L336.15 452.00 L336.50 452.00 L336.85 452.00 L337.20 452.00 L337.55 452.00 L337.90 452.00 L338.25 452.00 L338.60 452.00 L338.95 452.00 L339.30 452.00 L339.65 452.00 L340.00 452.00 L340.35 452.00 L340.70 452.00 L341.05 452.00 L341.40 452.00 L341.75 452.00 L342.10 452.00 L342.45 452.00 L342.80 452.00 L343.15 452.00 L343.50 452.00 L343.85 452.00 L344.20 452.00 L344.55 452.00 L344.90 452.00 L345.25 452.00 L345.60 452.00 L345.95 452.01 L346.30 452.01 L346.65 452.01 L347.00 452.02 L347.35 452.03 L347.70 452.05 L348.05 452.07 L348.40 452.10 L348.75 452.14 L349.10 452.19 L349.45 452.26 L349.80 460.72 L350.15 470.60 L350.50 480.50 L350.85 490.42 L351.20 494.77 L351.55 485.16 L351.90 475.58 L352.25 466.27 L352.60 457.07 L352.95 454.85 L353.30 455.41 L353.65 455.95 L354.00 456.47 L354.35 456.94 L354.70 456.95 L355.05 456.59 L355.40 456.19 L355.75 455.74 L356.10 455.25 L356.45 454.73 L356.80 454.18 L357.15 453.78 L357.50 453.57 L357.85 453.37 L358.20 453.17 L358.55 452.98 L358.90 452.81 L359.25 452.66 L359.60 452.52 L359.95 452.41 L360.30 452.31 L360.65 452.24 L361.00 452.17 L361.35 452.13 L361.70 452.09 L362.05 452.06 L362.40 452.04 L362.75 452.03 L363.10 452.02 L363.45 452.01 L363.80 452.01 L364.15 452.01 L364.50 452.00 L364.85 452.00 L365.20 452.00 L365.55 452.00 L365.90 452.00 L366.25 452.00 L366.60 452.00 L366.95 451.93 L367.30 451.77 L367.65 451.61 L368.00 451.45 L368.35 451.30 L368.70 451.14 L369.05 451.47 L369.40 454.73 L369.75 458.00 L370.10 461.27 L370.45 464.53 L370.80 467.80 L371.15 471.07 L371.50 474.33 L371.85 477.60 L372.20 477.19 L372.55 474.02 L372.90 470.84 L373.25 467.67 L373.60 464.50 L373.95 461.33 L374.30 458.16 L374.65 454.98 L375.00 451.81 L375.35 450.15 L375.70 450.50 L376.05 450.85 L376.40 451.20 L376.75 451.55 L377.10 451.91 L377.45 452.06 L377.80 452.10 L378.15 452.14 L378.50 452.19 L378.85 452.23 L379.20 452.28 L379.55 452.32 L379.90 452.36 L380.25 452.41 L380.60 452.45 L380.95 452.49 L381.30 452.54 L381.65 452.58 L382.00 452.63 L382.35 452.67 L382.70 452.72 L383.05 452.76 L383.40 452.81 L383.75 452.86 L384.10 452.90 L384.45 452.95 L384.80 453.00 L385.15 453.06 L385.50 453.11 L385.85 453.18 L386.20 453.24 L386.55 453.31 L386.90 453.39 L387.25 453.47 L387.60 453.56 L387.95 453.67 L388.30 453.78 L388.65 453.91 L389.00 454.06 L389.35 454.17 L389.70 454.31 L390.05 454.46 L390.40 454.63 L390.75 454.82 L391.10 455.03 L391.45 455.26 L391.80 455.50 L392.15 455.76 L392.50 456.03 L392.85 456.31 L393.20 456.59 L393.55 456.88 L393.90 457.16 L394.25 457.43 L394.60 457.68 L394.95 457.91 L395.30 458.11 L395.65 458.29 L396.00 458.43 L396.35 458.53 L396.70 458.58 L397.05 458.59 L397.40 458.47 L397.75 458.31 L398.10 458.12 L398.45 457.88 L398.80 457.61 L399.15 457.31 L399.50 456.98 L399.85 456.64 L400.20 456.28 L400.55 455.91 L400.90 455.54 L401.25 455.17 L401.60 454.80 L401.95 454.45 L402.30 454.10 L402.65 453.78 L403.00 453.47 L403.35 453.26 L403.70 453.08 L404.05 452.91 L404.40 452.77 L404.75 452.64 L405.10 452.53 L405.45 452.43 L405.80 452.35 L406.15 452.28 L406.50 452.22 L406.85 452.18 L407.20 452.14 L407.55 452.11 L407.90 452.08 L408.25 452.06 L408.60 452.05 L408.95 452.04 L409.30 452.03 L409.65 452.02 L410.00 452.01 L410.35 452.01 L410.70 452.01 L411.05 452.01 L411.40 452.00 L411.75 452.00 L412.10 452.00 L412.45 452.00 L412.80 452.00 L413.15 452.00 L413.50 452.00 L413.85 452.00 L414.20 452.00 L414.55 452.00 L414.90 452.00 L415.25 452.00 L415.60 452.00 L415.95 452.00 L416.30 452.00 L416.65 452.00 L417.00 452.00 L417.35 452.00 L417.70 452.00 L418.05 452.00 L418.40 452.00 L418.75 452.00 L419.10 452.00 L419.45 452.00 L419.80 452.00 L420.15 452.00 L420.50 452.00 L420.85 452.00 L421.20 452.00 L421.55 452.00 L421.90 452.00 L422.25 452.00 L422.60 452.00 L422.95 452.00 L423.30 452.01 L423.65 452.01 L424.00 452.02 L424.35 452.02 L424.70 452.03 L425.05 452.05 L425.40 452.07 L425.75 452.10 L426.10 452.15 L426.45 452.20 L426.80 452.27 L427.15 452.35 L427.50 452.45 L427.85 452.58 L428.20 452.72 L428.55 452.88 L428.90 453.06 L429.25 453.26 L429.60 453.46 L429.95 453.66 L430.30 453.86 L430.65 454.04 L431.00 454.21 L431.35 454.34 L431.70 454.43 L432.05 454.49 L432.40 454.50 L432.75 454.46" stroke="#606060"/><path d="M1480.00 459.75 L1480.35 459.71 L1480.70 459.61 L1481.05 459.47 L1481.40 459.28 L1481.75 459.05 L1482.10 458.79 L1482.45 458.41 L1482.80 457.99 L1483.15 457.55 L1483.50 457.10 L1483.85 456.65 L1484.20 456.19 L1484.55 455.75 L1484.90 455.32 L1485.25 454.90 L1485.60 454.51 L1485.95 454.13 L1486.30 453.78 L1486.65 453.46 L1487.00 453.15 L1487.35 452.91 L1487.70 452.76 L1488.05 452.63 L1488.40 452.51 L1488.75 452.42 L1489.10 452.33 L1489.45 452.27 L1489.80 452.21 L1490.15 452.16" stroke="#ee50a0"/><path d="M1490.10 452.17 L1490.45 452.13 L1490.80 452.10 L1491.15 452.08 L1491.50 452.06 L1491.85 452.04 L1492.20 452.03 L1492.55 452.02 L1492.90 452.02 L1493.25 452.01 L1493.60 452.01 L1493.95 452.01 L1494.30 452.00 L1494.65 452.00 L1495.00 452.00 L1495.35 452.00 L1495.70 452.00 L1496.05 452.00 L1496.40 452.00 L1496.75 452.00 L1497.10 452.00 L1497.45 452.00 L1497.80 452.00 L1498.15 452.00 L1498.50 452.00 L1498.85 452.00 L1499.20 452.00 L1499.55 452.00 L1499.90 452.00 L1500.25 452.00 L1500.60 452.00 L1500.95 452.00 L1501.30 452.00 L1501.65 452.00 L1502.00 452.00 L1502.35 452.00 L1502.70 452.00 L1503.05 452.00 L1503.40 452.00 L1503.75 452.00 L1504.10 452.00 L1504.45 452.00 L1504.80 452.00 L1505.15 452.00 L1505.50 452.00 L1505.85 452.00 L1506.20 452.00 L1506.55 452.00 L1506.90 452.00 L1507.25 452.00 L1507.60 452.00 L1507.95 452.00 L1508.30 452.00 L1508.65 452.00 L1509.00 452.00 L1509.35 452.00 L1509.70 456.88 L1510.05 462.57 L1510.40 468.27 L1510.75 473.96 L1511.10 473.15 L1511.45 467.50 L1511.80 462.09 L1512.15 456.69 L1512.50 452.92 L1512.85 453.21 L1513.20 453.51 L1513.55 453.80 L1513.90 454.09 L1514.25 454.38 L1514.60 454.68 L1514.95 454.89 L1515.30 454.59 L1515.65 454.30 L1516.00 454.01 L1516.35 453.71 L1516.70 453.42 L1517.05 453.13 L1517.40 452.84 L1517.75 452.54 L1518.10 452.25 L1518.45 452.00 L1518.80 452.00 L1519.15 452.00 L1519.50 452.00" stroke="#5c5c5c"/><path d="M1519.40 452.00 L1519.75 452.00 L1520.10 452.00 L1520.45 452.00 L1520.80 452.00 L1521.15 452.00 L1521.50 452.00 L1521.85 452.00 L1522.20 452.00 L1522.55 452.00 L1522.90 452.00 L1523.25 452.00 L1523.60 452.00 L1523.95 452.00 L1524.30 452.00 L1524.65 452.00 L1525.00 452.00 L1525.35 452.00 L1525.70 452.00 L1526.05 452.00 L1526.40 452.00 L1526.75 452.00 L1527.10 452.00 L1527.45 451.86 L1527.80 451.55 L1528.15 451.23 L1528.50 450.91 L1528.85 450.59 L1529.20 450.27 L1529.55 450.48 L1529.90 453.87 L1530.25 457.25 L1530.60 460.63 L1530.95 464.02 L1531.30 467.40 L1531.65 470.78 L1532.00 474.17 L1532.35 477.55 L1532.70 477.13 L1533.05 473.84 L1533.40 470.56 L1533.75 467.28 L1534.10 464.00 L1534.45 460.72 L1534.80 457.44 L1535.15 454.16 L1535.50 450.88 L1535.85 449.23 L1536.20 449.75 L1536.55 450.28 L1536.90 450.80 L1537.25 451.33 L1537.60 451.86 L1537.95 452.04 L1538.30 452.08 L1538.65 452.11 L1539.00 452.14 L1539.35 452.17 L1539.70 452.21 L1540.05 452.24 L1540.40 452.27 L1540.75 452.31 L1541.10 452.34 L1541.45 452.37 L1541.80 452.40 L1542.15 452.44 L1542.50 452.47 L1542.85 452.51 L1543.20 452.54 L1543.55 452.58 L1543.90 452.61 L1544.25 452.65 L1544.60 452.69 L1544.95 452.73 L1545.30 452.78 L1545.65 452.83 L1546.00 452.88 L1546.35 452.94 L1546.70 453.00 L1547.05 453.07 L1547.40 453.15 L1547.75 453.24 L1548.10 453.35 L1548.45 453.47 L1548.80 453.60 L1549.15 453.75 L1549.50 453.93 L1549.85 454.12 L1550.20 454.34 L1550.55 454.58 L1550.90 454.84 L1551.25 455.12 L1551.60 455.43 L1551.95 455.76 L1552.30 456.11 L1552.65 456.47 L1553.00 456.85 L1553.35 457.23 L1553.70 457.59 L1554.05 457.93 L1554.40 458.26 L1554.75 458.58 L1555.10 458.86 L1555.45 459.12 L1555.80 459.34 L1556.15 459.52 L1556.50 459.64 L1556.85 459.72 L1557.20 459.75 L1557.55 459.72 L1557.90 459.64 L1558.25 459.52 L1558.60 459.34 L1558.95 459.12 L1559.30 458.86 L1559.65 458.53 L1560.00 458.11 L1560.35 457.68 L1560.70 457.23 L1561.05 456.78 L1561.40 456.32 L1561.75 455.88 L1562.10 455.44 L1562.45 455.02 L1562.80 454.62 L1563.15 454.24 L1563.50 453.88 L1563.85 453.55 L1564.20 453.24 L1564.55 452.96 L1564.90 452.80 L1565.25 452.66 L1565.60 452.54 L1565.95 452.44 L1566.30 452.36 L1566.65 452.28 L1567.00 452.22 L1567.35 452.18 L1567.70 452.14" stroke="#ee50a0"/><path d="M1567.40 452.17 L1567.75 452.13 L1568.10 452.10 L1568.45 452.08 L1568.80 452.06 L1569.15 452.04 L1569.50 452.03 L1569.85 452.02 L1570.20 452.02 L1570.55 452.01 L1570.90 452.01 L1571.25 452.01 L1571.60 452.00 L1571.95 452.00 L1572.30 452.00 L1572.65 452.00 L1573.00 452.00 L1573.35 452.00 L1573.70 452.00 L1574.05 452.00 L1574.40 452.00 L1574.75 452.00 L1575.10 452.00 L1575.45 452.00 L1575.80 452.00 L1576.15 452.00 L1576.50 452.00 L1576.85 452.00 L1577.20 452.00 L1577.55 452.00 L1577.90 452.00 L1578.25 452.00 L1578.60 452.00 L1578.95 452.00 L1579.30 452.00 L1579.65 452.00 L1580.00 452.00 L1580.35 452.00 L1580.70 452.00 L1581.05 452.00 L1581.40 452.00 L1581.75 452.00 L1582.10 452.00 L1582.45 452.00 L1582.80 452.00 L1583.15 452.00 L1583.50 452.00 L1583.85 452.00 L1584.20 452.00 L1584.55 452.00 L1584.90 452.00 L1585.25 452.00 L1585.60 452.00 L1585.95 452.00 L1586.30 452.00 L1586.65 452.00 L1587.00 454.68 L1587.35 457.82 L1587.70 460.95 L1588.05 464.08 L1588.40 463.63 L1588.75 460.52 L1589.10 457.55 L1589.45 454.58 L1589.80 452.51 L1590.15 452.67 L1590.50 452.83 L1590.85 452.99 L1591.20 453.15 L1591.55 453.31 L1591.90 453.47 L1592.25 453.59 L1592.60 453.43 L1592.95 453.27 L1593.30 453.10 L1593.65 452.94 L1594.00 452.78 L1594.35 452.62 L1594.70 452.46 L1595.05 452.30 L1595.40 452.14 L1595.75 452.00 L1596.10 452.00 L1596.45 452.00 L1596.80 452.00" stroke="#5c5c5c"/><path d="M1596.70 452.00 L1597.05 452.00 L1597.40 452.00 L1597.75 452.00 L1598.10 452.00 L1598.45 452.00 L1598.80 452.00 L1599.15 452.00 L1599.50 452.00 L1599.85 452.00 L1600.20 452.00 L1600.55 452.00 L1600.90 452.00 L1601.25 452.00 L1601.60 452.00 L1601.95 452.00 L1602.30 452.00 L1602.65 452.00 L1603.00 452.00 L1603.35 452.00 L1603.70 452.00 L1604.05 452.00 L1604.40 452.00 L1604.75 451.86 L1605.10 451.55 L1605.45 451.23 L1605.80 450.91 L1606.15 450.59 L1606.50 450.27 L1606.85 450.48 L1607.20 453.87 L1607.55 457.25 L1607.90 460.63 L1608.25 464.02 L1608.60 467.40 L1608.95 470.78 L1609.30 474.17 L1609.65 477.55 L1610.00 477.13 L1610.35 473.84 L1610.70 470.56 L1611.05 467.28 L1611.40 464.00 L1611.75 460.72 L1612.10 457.44 L1612.45 454.16 L1612.80 450.88 L1613.15 449.23 L1613.50 449.75 L1613.85 450.28 L1614.20 450.80 L1614.55 451.33 L1614.90 451.86 L1615.25 452.04 L1615.60 452.08 L1615.95 452.11 L1616.30 452.14 L1616.65 452.17 L1617.00 452.21 L1617.35 452.24 L1617.70 452.27 L1618.05 452.31 L1618.40 452.34 L1618.75 452.37 L1619.10 452.40 L1619.45 452.44 L1619.80 452.47 L1620.15 452.51 L1620.50 452.54 L1620.85 452.58 L1621.20 452.61 L1621.55 452.65 L1621.90 452.69 L1622.25 452.73 L1622.60 452.78 L1622.95 452.83 L1623.30 452.88 L1623.65 452.94 L1624.00 453.00 L1624.35 453.07 L1624.70 453.15 L1625.05 453.24 L1625.40 453.35 L1625.75 453.47 L1626.10 453.60 L1626.45 453.75 L1626.80 453.93 L1627.15 454.12 L1627.50 454.34 L1627.85 454.58 L1628.20 454.84 L1628.55 455.12 L1628.90 455.43 L1629.25 455.76 L1629.60 456.11 L1629.95 456.47 L1630.30 456.85 L1630.65 457.23 L1631.00 457.59 L1631.35 457.93 L1631.70 458.26 L1632.05 458.58 L1632.40 458.86 L1632.75 459.12 L1633.10 459.34 L1633.45 459.52 L1633.80 459.64 L1634.15 459.72 L1634.50 459.75 L1634.85 459.72 L1635.20 459.64 L1635.55 459.52 L1635.90 459.34 L1636.25 459.12 L1636.60 458.86 L1636.95 458.53 L1637.30 458.11 L1637.65 457.68 L1638.00 457.23 L1638.35 456.78 L1638.70 456.32 L1639.05 455.88 L1639.40 455.44 L1639.75 455.02 L1640.10 454.62 L1640.45 454.24 L1640.80 453.88 L1641.15 453.55 L1641.50 453.24 L1641.85 452.96 L1642.20 452.80 L1642.55 452.66 L1642.90 452.54 L1643.25 452.44 L1643.60 452.36 L1643.95 452.28 L1644.30 452.22 L1644.65 452.18 L1645.00 452.14" stroke="#ee50a0"/><path d="M1644.70 452.17 L1645.05 452.13 L1645.40 452.10 L1645.75 452.08 L1646.10 452.06 L1646.45 452.04 L1646.80 452.03 L1647.15 452.02 L1647.50 452.02 L1647.85 452.01 L1648.20 452.01 L1648.55 452.01 L1648.90 452.00 L1649.25 452.00 L1649.60 452.00 L1649.95 452.00 L1650.30 452.00 L1650.65 452.00 L1651.00 452.00 L1651.35 452.00 L1651.70 452.00 L1652.05 452.00 L1652.40 452.00 L1652.75 452.00 L1653.10 452.00 L1653.45 452.00 L1653.80 452.00 L1654.15 452.00 L1654.50 452.00 L1654.85 452.00 L1655.20 452.00 L1655.55 452.00 L1655.90 452.00 L1656.25 452.00 L1656.60 452.00 L1656.95 452.00 L1657.30 452.00 L1657.65 452.00 L1658.00 452.00 L1658.35 452.00 L1658.70 452.00 L1659.05 452.00 L1659.40 452.00 L1659.75 452.00 L1660.10 452.00 L1660.45 452.00 L1660.80 452.00 L1661.15 452.00 L1661.50 452.00 L1661.85 452.00 L1662.20 452.00 L1662.55 452.00 L1662.90 452.00 L1663.25 452.00 L1663.60 452.00 L1663.95 452.00 L1664.30 459.17 L1664.65 467.54 L1665.00 475.91 L1665.35 484.28 L1665.70 483.09 L1666.05 474.78 L1666.40 466.84 L1666.75 458.90 L1667.10 453.35 L1667.45 453.78 L1667.80 454.21 L1668.15 454.64 L1668.50 455.07 L1668.85 455.50 L1669.20 455.94 L1669.55 456.24 L1669.90 455.81 L1670.25 455.38 L1670.60 454.95 L1670.95 454.52 L1671.30 454.09 L1671.65 453.66 L1672.00 453.23 L1672.35 452.80 L1672.70 452.37 L1673.05 452.00 L1673.40 452.00 L1673.75 452.00 L1674.10 452.00" stroke="#5c5c5c"/><path d="M1674.00 452.00 L1674.35 452.00 L1674.70 452.00 L1675.05 452.00 L1675.40 452.00 L1675.75 452.00 L1676.10 452.00 L1676.45 452.00 L1676.80 452.00 L1677.15 452.00 L1677.50 452.00 L1677.85 452.00 L1678.20 452.00 L1678.55 452.00 L1678.90 452.00 L1679.25 452.00 L1679.60 452.00 L1679.95 452.00 L1680.30 452.00 L1680.65 452.00 L1681.00 452.00 L1681.35 452.00 L1681.70 452.00 L1682.05 451.86 L1682.40 451.55 L1682.75 451.23 L1683.10 450.91 L1683.45 450.59 L1683.80 450.27 L1684.15 450.48 L1684.50 453.87 L1684.85 457.25 L1685.20 460.63 L1685.55 464.02 L1685.90 467.40 L1686.25 470.78 L1686.60 474.17 L1686.95 477.55 L1687.30 477.13 L1687.65 473.84 L1688.00 470.56 L1688.35 467.28 L1688.70 464.00 L1689.05 460.72 L1689.40 457.44 L1689.75 454.16 L1690.10 450.88 L1690.45 449.23 L1690.80 449.75 L1691.15 450.28 L1691.50 450.80 L1691.85 451.33 L1692.20 451.86 L1692.55 452.04 L1692.90 452.08 L1693.25 452.11 L1693.60 452.14 L1693.95 452.17 L1694.30 452.21 L1694.65 452.24 L1695.00 452.27 L1695.35 452.31 L1695.70 452.34 L1696.05 452.37 L1696.40 452.40 L1696.75 452.44 L1697.10 452.47 L1697.45 452.51 L1697.80 452.54 L1698.15 452.58 L1698.50 452.61 L1698.85 452.65 L1699.20 452.69 L1699.55 452.73 L1699.90 452.78 L1700.25 452.83 L1700.60 452.88 L1700.95 452.94 L1701.30 453.00 L1701.65 453.07 L1702.00 453.15 L1702.35 453.24 L1702.70 453.35 L1703.05 453.47 L1703.40 453.60 L1703.75 453.75 L1704.10 453.93 L1704.45 454.12 L1704.80 454.34 L1705.15 454.58 L1705.50 454.84 L1705.85 455.12 L1706.20 455.43 L1706.55 455.76 L1706.90 456.11 L1707.25 456.47 L1707.60 456.85 L1707.95 457.23 L1708.30 457.59 L1708.65 457.93 L1709.00 458.26 L1709.35 458.58 L1709.70 458.86 L1710.05 459.12 L1710.40 459.34 L1710.75 459.52 L1711.10 459.64 L1711.45 459.72 L1711.80 459.75 L1712.15 459.72 L1712.50 459.64 L1712.85 459.52 L1713.20 459.34 L1713.55 459.12 L1713.90 458.86 L1714.25 458.53 L1714.60 458.11 L1714.95 457.68 L1715.30 457.23 L1715.65 456.78 L1716.00 456.32 L1716.35 455.88 L1716.70 455.44 L1717.05 455.02 L1717.40 454.62 L1717.75 454.24 L1718.10 453.88 L1718.45 453.55 L1718.80 453.24 L1719.15 452.96 L1719.50 452.80 L1719.85 452.66 L1720.20 452.54 L1720.55 452.44 L1720.90 452.36 L1721.25 452.28 L1721.60 452.22 L1721.95 452.18 L1722.30 452.14" stroke="#ee50a0"/><path d="M1722.00 452.17 L1722.35 452.13 L1722.70 452.10 L1723.05 452.08 L1723.40 452.06 L1723.75 452.04 L1724.10 452.03 L1724.45 452.02 L1724.80 452.02 L1725.15 452.01 L1725.50 452.01 L1725.85 452.01 L1726.20 452.00 L1726.55 452.00 L1726.90 452.00 L1727.25 452.00 L1727.60 452.00 L1727.95 452.00 L1728.30 452.00 L1728.65 452.00 L1729.00 452.00 L1729.35 452.00 L1729.70 452.00 L1730.05 452.00 L1730.40 452.00 L1730.75 452.00 L1731.10 452.00 L1731.45 452.00 L1731.80 452.00 L1732.15 452.00 L1732.50 452.00 L1732.85 452.00 L1733.20 452.00 L1733.55 452.00 L1733.90 452.00 L1734.25 452.00 L1734.60 452.00 L1734.95 452.00 L1735.30 452.00 L1735.65 452.00 L1736.00 452.00 L1736.35 452.00 L1736.70 452.00 L1737.05 452.00 L1737.40 452.00 L1737.75 452.00 L1738.10 452.00 L1738.45 452.00 L1738.80 452.00 L1739.15 452.00 L1739.50 452.00 L1739.85 452.00 L1740.20 452.00 L1740.55 452.00 L1740.90 452.00 L1741.25 452.00 L1741.60 453.61 L1741.95 455.49 L1742.30 457.37 L1742.65 459.25 L1743.00 458.98 L1743.35 457.11 L1743.70 455.33 L1744.05 453.55 L1744.40 452.30 L1744.75 452.40 L1745.10 452.50 L1745.45 452.59 L1745.80 452.69 L1746.15 452.79 L1746.50 452.88 L1746.85 452.95 L1747.20 452.86 L1747.55 452.76 L1747.90 452.66 L1748.25 452.57 L1748.60 452.47 L1748.95 452.37 L1749.30 452.28 L1749.65 452.18 L1750.00 452.08 L1750.35 452.00 L1750.70 452.00 L1751.05 452.00 L1751.40 452.00" stroke="#5c5c5c"/><path d="M1751.30 452.00 L1751.65 452.00 L1752.00 452.00 L1752.35 452.00 L1752.70 452.00 L1753.05 452.00 L1753.40 452.00 L1753.75 452.00 L1754.10 452.00 L1754.45 452.00 L1754.80 452.00 L1755.15 452.00 L1755.50 452.00 L1755.85 452.00 L1756.20 452.00 L1756.55 452.00 L1756.90 452.00 L1757.25 452.00 L1757.60 452.00 L1757.95 452.00 L1758.30 452.00 L1758.65 452.00 L1759.00 452.00 L1759.35 451.86 L1759.70 451.55 L1760.05 451.23 L1760.40 450.91 L1760.75 450.59 L1761.10 450.27 L1761.45 450.48 L1761.80 453.87 L1762.15 457.25 L1762.50 460.63 L1762.85 464.02 L1763.20 467.40 L1763.55 470.78 L1763.90 474.17 L1764.25 477.55 L1764.60 477.13 L1764.95 473.84 L1765.30 470.56 L1765.65 467.28 L1766.00 464.00 L1766.35 460.72 L1766.70 457.44 L1767.05 454.16 L1767.40 450.88 L1767.75 449.23 L1768.10 449.75 L1768.45 450.28 L1768.80 450.80 L1769.15 451.33 L1769.50 451.86 L1769.85 452.04 L1770.20 452.08 L1770.55 452.11 L1770.90 452.14 L1771.25 452.17 L1771.60 452.21 L1771.95 452.24 L1772.30 452.27 L1772.65 452.31 L1773.00 452.34 L1773.35 452.37 L1773.70 452.40 L1774.05 452.44 L1774.40 452.47 L1774.75 452.51 L1775.10 452.54 L1775.45 452.58 L1775.80 452.61 L1776.15 452.65 L1776.50 452.69 L1776.85 452.73 L1777.20 452.78 L1777.55 452.83 L1777.90 452.88 L1778.25 452.94 L1778.60 453.00 L1778.95 453.07 L1779.30 453.15 L1779.65 453.24 L1780.00 453.35 L1780.35 453.47" stroke="#ee50a0"/><path d="M214.00 541.20 L214.35 541.20 L214.70 540.99 L215.05 540.24 L215.40 539.49 L215.75 538.75 L216.10 538.00 L216.45 537.25 L216.80 536.51 L217.15 535.76 L217.50 535.01 L217.85 535.34 L218.20 536.09 L218.55 536.85 L218.90 537.60 L219.25 538.36 L219.60 539.11 L219.95 539.87 L220.30 540.62 L220.65 541.38 L221.00 541.65 L221.35 541.56 L221.70 541.47 L222.05 541.39 L222.40 541.30 L222.75 541.21 L223.10 541.20 L223.45 541.20 L223.80 541.20 L224.15 541.20 L224.50 541.20 L224.85 541.20 L225.20 541.20 L225.55 541.20 L225.90 541.20 L226.25 541.20 L226.60 541.20 L226.95 541.20 L227.30 541.20 L227.65 541.20 L228.00 541.20 L228.35 541.20 L228.70 541.20 L229.05 541.20 L229.40 541.20 L229.75 541.20 L230.10 541.20 L230.45 541.20 L230.80 541.20 L231.15 541.19 L231.50 541.19 L231.85 541.19 L232.20 541.19 L232.55 541.18 L232.90 541.18 L233.25 541.17 L233.60 541.16 L233.95 541.16 L234.30 541.14 L234.65 541.13 L235.00 541.12 L235.35 541.10 L235.70 541.08 L236.05 541.06 L236.40 541.04 L236.75 541.02 L237.10 540.99 L237.45 540.96 L237.80 540.93 L238.15 540.90 L238.50 540.86 L238.85 540.83 L239.20 540.80 L239.55 540.77 L239.90 540.73 L240.25 540.70 L240.60 540.68 L240.95 540.65 L241.30 540.63 L241.65 540.62 L242.00 540.61 L242.35 540.60 L242.70 540.60 L243.05 540.60 L243.40 540.61 L243.75 540.63 L244.10 540.64 L244.45 540.67 L244.80 540.69 L245.15 540.72 L245.50 540.75 L245.85 540.78 L246.20 540.82 L246.55 540.85 L246.90 540.88 L247.25 540.92 L247.60 540.95 L247.95 540.98 L248.30 541.01 L248.65 541.03 L249.00 541.05 L249.35 541.08 L249.70 541.10 L250.05 541.11 L250.40 541.13 L250.75 541.14 L251.10 541.15 L251.45 541.16 L251.80 541.17 L252.15 541.17 L252.50 541.18 L252.85 541.18 L253.20 541.19 L253.55 541.19 L253.90 541.19 L254.25 541.19 L254.60 541.20 L254.95 541.20 L255.30 541.20 L255.65 541.20 L256.00 541.20 L256.35 541.20 L256.70 541.20 L257.05 541.20 L257.40 541.20 L257.75 541.20 L258.10 541.20 L258.45 541.20 L258.80 541.20 L259.15 541.20 L259.50 541.20 L259.85 541.20 L260.20 541.20 L260.55 541.20 L260.90 541.20 L261.25 541.20 L261.60 541.20 L261.95 541.20 L262.30 541.20 L262.65 541.20 L263.00 541.20 L263.35 541.20 L263.70 541.20 L264.05 541.20 L264.40 541.20 L264.75 541.20 L265.10 541.20 L265.45 541.20 L265.80 541.20 L266.15 541.20 L266.50 541.20 L266.85 541.20 L267.20 541.20 L267.55 541.20 L267.90 541.20 L268.25 541.20 L268.60 541.20 L268.95 541.20 L269.30 541.20 L269.65 541.20 L270.00 541.20 L270.35 541.19 L270.70 541.19 L271.05 541.19 L271.40 541.18 L271.75 541.17 L272.10 541.17 L272.45 541.15 L272.80 541.14 L273.15 541.13 L273.50 541.11 L273.85 541.09 L274.20 541.07 L274.55 541.04 L274.90 541.02 L275.25 540.99 L275.60 540.97 L275.95 540.95 L276.30 540.93 L276.65 540.92 L277.00 540.91 L277.35 540.90 L277.70 540.90 L278.05 540.91 L278.40 540.92 L278.75 540.93 L279.10 540.95 L279.45 540.97 L279.80 541.00 L280.15 541.02 L280.50 541.05 L280.85 541.07 L281.20 541.09 L281.55 541.11 L281.90 541.13 L282.25 541.14 L282.60 541.16 L282.95 541.17 L283.30 541.18 L283.65 541.18 L284.00 541.19 L284.35 541.19 L284.70 541.19 L285.05 541.20 L285.40 541.20 L285.75 541.20 L286.10 541.20 L286.45 541.20 L286.80 541.20 L287.15 541.20 L287.50 541.20 L287.85 541.20 L288.20 541.20 L288.55 541.20 L288.90 541.20 L289.25 541.20 L289.60 541.20 L289.95 541.20 L290.30 541.20 L290.65 541.20 L291.00 541.20 L291.35 541.20 L291.70 540.77 L292.05 540.03 L292.40 539.28 L292.75 538.53 L293.10 537.79 L293.45 537.04 L293.80 536.29 L294.15 535.55 L294.50 534.80 L294.85 535.55 L295.20 536.31 L295.55 537.06 L295.90 537.82 L296.25 538.57 L296.60 539.33 L296.95 540.08 L297.30 540.84 L297.65 541.59 L298.00 541.62 L298.35 541.54 L298.70 541.45 L299.05 541.36 L299.40 541.27 L299.75 541.20 L300.10 541.20 L300.45 541.20 L300.80 541.20 L301.15 541.20 L301.50 541.20 L301.85 541.20 L302.20 541.20 L302.55 541.20 L302.90 541.20 L303.25 541.20 L303.60 541.20 L303.95 541.20 L304.30 541.20 L304.65 541.20 L305.00 541.20 L305.35 541.20 L305.70 541.20 L306.05 541.20 L306.40 541.20 L306.75 541.20 L307.10 541.20 L307.45 541.20 L307.80 541.19 L308.15 541.19 L308.50 541.19 L308.85 541.19 L309.20 541.18 L309.55 541.18 L309.90 541.18 L310.25 541.17 L310.60 541.16 L310.95 541.15 L311.30 541.14 L311.65 541.13 L312.00 541.11 L312.35 541.10 L312.70 541.08 L313.05 541.06 L313.40 541.03 L313.75 541.01 L314.10 540.98 L314.45 540.95 L314.80 540.92 L315.15 540.89 L315.50 540.86 L315.85 540.82 L316.20 540.79 L316.55 540.76 L316.90 540.73 L317.25 540.70 L317.60 540.67 L317.95 540.65 L318.30 540.63 L318.65 540.61 L319.00 540.61 L319.35 540.60 L319.70 540.60 L320.05 540.61 L320.40 540.62 L320.75 540.63 L321.10 540.65 L321.45 540.67 L321.80 540.70 L322.15 540.73 L322.50 540.76 L322.85 540.79 L323.20 540.83 L323.55 540.86 L323.90 540.89 L324.25 540.93 L324.60 540.96 L324.95 540.99 L325.30 541.01 L325.65 541.04 L326.00 541.06 L326.35 541.08 L326.70 541.10 L327.05 541.12 L327.40 541.13 L327.75 541.14 L328.10 541.15 L328.45 541.16 L328.80 541.17 L329.15 541.18 L329.50 541.18 L329.85 541.19 L330.20 541.19 L330.55 541.19 L330.90 541.19 L331.25 541.19 L331.60 541.20 L331.95 541.20 L332.30 541.20 L332.65 541.20 L333.00 541.20 L333.35 541.20 L333.70 541.20 L334.05 541.20 L334.40 541.20 L334.75 541.20 L335.10 541.20 L335.45 541.20 L335.80 541.20 L336.15 541.20 L336.50 541.20 L336.85 541.20 L337.20 541.20 L337.55 541.20 L337.90 541.20 L338.25 541.20 L338.60 541.20 L338.95 541.20 L339.30 541.20 L339.65 541.20 L340.00 541.20 L340.35 541.20 L340.70 541.20 L341.05 541.20 L341.40 541.20 L341.75 541.20 L342.10 541.20 L342.45 541.20 L342.80 541.20 L343.15 541.20 L343.50 541.20 L343.85 541.20 L344.20 541.20 L344.55 541.20 L344.90 541.20 L345.25 541.20 L345.60 541.20 L345.95 541.20 L346.30 541.20 L346.65 541.20 L347.00 541.20 L347.35 541.20 L347.70 541.19 L348.05 541.19 L348.40 541.19 L348.75 541.18 L349.10 541.18 L349.45 541.17 L349.80 540.22 L350.15 539.12 L350.50 538.01 L350.85 536.90 L351.20 536.41 L351.55 537.48 L351.90 538.55 L352.25 539.59 L352.60 540.62 L352.95 540.87 L353.30 540.80 L353.65 540.74 L354.00 540.68 L354.35 540.63 L354.70 540.63 L355.05 540.67 L355.40 540.71 L355.75 540.76 L356.10 540.82 L356.45 540.88 L356.80 540.94 L357.15 540.99 L357.50 541.01 L357.85 541.04 L358.20 541.06 L358.55 541.08 L358.90 541.10 L359.25 541.12 L359.60 541.14 L359.95 541.15 L360.30 541.16 L360.65 541.17 L361.00 541.18 L361.35 541.18 L361.70 541.19 L362.05 541.19 L362.40 541.19 L362.75 541.20 L363.10 541.20 L363.45 541.20 L363.80 541.20 L364.15 541.20 L364.50 541.20 L364.85 541.20 L365.20 541.20 L365.55 541.20 L365.90 541.20 L366.25 541.20 L366.60 541.20 L366.95 541.20 L367.30 541.20 L367.65 541.20 L368.00 541.20 L368.35 541.20 L368.70 541.20 L369.05 541.09 L369.40 540.35 L369.75 539.60 L370.10 538.85 L370.45 538.11 L370.80 537.36 L371.15 536.61 L371.50 535.87 L371.85 535.12 L372.20 535.23 L372.55 535.99 L372.90 536.74 L373.25 537.50 L373.60 538.25 L373.95 539.00 L374.30 539.76 L374.65 540.51 L375.00 541.27 L375.35 541.66 L375.70 541.57 L376.05 541.49 L376.40 541.40 L376.75 541.31 L377.10 541.22 L377.45 541.20 L377.80 541.20 L378.15 541.20 L378.50 541.20 L378.85 541.20 L379.20 541.20 L379.55 541.20 L379.90 541.20 L380.25 541.20 L380.60 541.20 L380.95 541.20 L381.30 541.20 L381.65 541.20 L382.00 541.20 L382.35 541.20 L382.70 541.20 L383.05 541.20 L383.40 541.20 L383.75 541.20 L384.10 541.20 L384.45 541.20 L384.80 541.20 L385.15 541.20 L385.50 541.19 L385.85 541.19 L386.20 541.19 L386.55 541.19 L386.90 541.18 L387.25 541.18 L387.60 541.17 L387.95 541.16 L388.30 541.16 L388.65 541.15 L389.00 541.13 L389.35 541.12 L389.70 541.11 L390.05 541.09 L390.40 541.07 L390.75 541.04 L391.10 541.02 L391.45 540.99 L391.80 540.96 L392.15 540.93 L392.50 540.90 L392.85 540.87 L393.20 540.84 L393.55 540.80 L393.90 540.77 L394.25 540.74 L394.60 540.71 L394.95 540.68 L395.30 540.66 L395.65 540.64 L396.00 540.62 L396.35 540.61 L396.70 540.60 L397.05 540.60 L397.40 540.60 L397.75 540.61 L398.10 540.62 L398.45 540.64 L398.80 540.66 L399.15 540.69 L399.50 540.72 L399.85 540.75 L400.20 540.78 L400.55 540.81 L400.90 540.85 L401.25 540.88 L401.60 540.91 L401.95 540.94 L402.30 540.97 L402.65 541.00 L403.00 541.03 L403.35 541.05 L403.70 541.07 L404.05 541.09 L404.40 541.11 L404.75 541.13 L405.10 541.14 L405.45 541.15 L405.80 541.16 L406.15 541.17 L406.50 541.17 L406.85 541.18 L407.20 541.18 L407.55 541.19 L407.90 541.19 L408.25 541.19 L408.60 541.19 L408.95 541.20 L409.30 541.20 L409.65 541.20 L410.00 541.20 L410.35 541.20 L410.70 541.20 L411.05 541.20 L411.40 541.20 L411.75 541.20 L412.10 541.20 L412.45 541.20 L412.80 541.20 L413.15 541.20 L413.50 541.20 L413.85 541.20 L414.20 541.20 L414.55 541.20 L414.90 541.20 L415.25 541.20 L415.60 541.20 L415.95 541.20 L416.30 541.20 L416.65 541.20 L417.00 541.20 L417.35 541.20 L417.70 541.20 L418.05 541.20 L418.40 541.20 L418.75 541.20 L419.10 541.20 L419.45 541.20 L419.80 541.20 L420.15 541.20 L420.50 541.20 L420.85 541.20 L421.20 541.20 L421.55 541.20 L421.90 541.20 L422.25 541.20 L422.60 541.20 L422.95 541.20 L423.30 541.20 L423.65 541.20 L424.00 541.20 L424.35 541.20 L424.70 541.20 L425.05 541.19 L425.40 541.19 L425.75 541.19 L426.10 541.18 L426.45 541.18 L426.80 541.17 L427.15 541.16 L427.50 541.15 L427.85 541.13 L428.20 541.11 L428.55 541.09 L428.90 541.07 L429.25 541.05 L429.60 541.03 L429.95 541.00 L430.30 540.98 L430.65 540.95 L431.00 540.94 L431.35 540.92 L431.70 540.91 L432.05 540.90 L432.40 540.90 L432.75 540.90" stroke="#606060"/><path d="M1480.00 540.80 L1480.35 540.80 L1480.70 540.81 L1481.05 540.82 L1481.40 540.83 L1481.75 540.84 L1482.10 540.86 L1482.45 540.88 L1482.80 540.90 L1483.15 540.92 L1483.50 540.94 L1483.85 540.97 L1484.20 540.99 L1484.55 541.01 L1484.90 541.03 L1485.25 541.05 L1485.60 541.07 L1485.95 541.09 L1486.30 541.10 L1486.65 541.12 L1487.00 541.13 L1487.35 541.14 L1487.70 541.15 L1488.05 541.16 L1488.40 541.17 L1488.75 541.17 L1489.10 541.18 L1489.45 541.18 L1489.80 541.19 L1490.15 541.19" stroke="#ee50a0"/><path d="M1490.10 541.19 L1490.45 541.19 L1490.80 541.19 L1491.15 541.20 L1491.50 541.20 L1491.85 541.20 L1492.20 541.20 L1492.55 541.20 L1492.90 541.20 L1493.25 541.20 L1493.60 541.20 L1493.95 541.20 L1494.30 541.20 L1494.65 541.20 L1495.00 541.20 L1495.35 541.20 L1495.70 541.20 L1496.05 541.20 L1496.40 541.20 L1496.75 541.20 L1497.10 541.20 L1497.45 541.20 L1497.80 541.20 L1498.15 541.20 L1498.50 541.20 L1498.85 541.20 L1499.20 541.20 L1499.55 541.20 L1499.90 541.20 L1500.25 541.20 L1500.60 541.20 L1500.95 541.20 L1501.30 541.20 L1501.65 541.20 L1502.00 541.20 L1502.35 541.20 L1502.70 541.20 L1503.05 541.20 L1503.40 541.20 L1503.75 541.20 L1504.10 541.20 L1504.45 541.20 L1504.80 541.20 L1505.15 541.20 L1505.50 541.20 L1505.85 541.20 L1506.20 541.20 L1506.55 541.20 L1506.90 541.20 L1507.25 541.20 L1507.60 541.20 L1507.95 541.20 L1508.30 541.20 L1508.65 541.20 L1509.00 541.20 L1509.35 541.20 L1509.70 540.04 L1510.05 538.69 L1510.40 537.33 L1510.75 535.98 L1511.10 536.17 L1511.45 537.52 L1511.80 538.80 L1512.15 540.08 L1512.50 540.98 L1512.85 540.91 L1513.20 540.84 L1513.55 540.77 L1513.90 540.70 L1514.25 540.63 L1514.60 540.56 L1514.95 540.51 L1515.30 540.58 L1515.65 540.65 L1516.00 540.72 L1516.35 540.79 L1516.70 540.86 L1517.05 540.93 L1517.40 541.00 L1517.75 541.07 L1518.10 541.14 L1518.45 541.20 L1518.80 541.20 L1519.15 541.20 L1519.50 541.20" stroke="#5c5c5c"/><path d="M1519.40 541.20 L1519.75 541.20 L1520.10 541.20 L1520.45 541.20 L1520.80 541.20 L1521.15 541.20 L1521.50 541.20 L1521.85 541.20 L1522.20 541.20 L1522.55 541.20 L1522.90 541.20 L1523.25 541.20 L1523.60 541.20 L1523.95 541.20 L1524.30 541.20 L1524.65 541.20 L1525.00 541.20 L1525.35 541.20 L1525.70 541.20 L1526.05 541.20 L1526.40 541.20 L1526.75 541.20 L1527.10 541.20 L1527.45 541.20 L1527.80 541.20 L1528.15 541.20 L1528.50 541.20 L1528.85 541.20 L1529.20 541.20 L1529.55 541.09 L1529.90 540.32 L1530.25 539.55 L1530.60 538.78 L1530.95 538.01 L1531.30 537.24 L1531.65 536.47 L1532.00 535.70 L1532.35 534.93 L1532.70 535.01 L1533.05 535.73 L1533.40 536.46 L1533.75 537.18 L1534.10 537.90 L1534.45 538.62 L1534.80 539.34 L1535.15 540.07 L1535.50 540.79 L1535.85 541.20 L1536.20 541.20 L1536.55 541.20 L1536.90 541.20 L1537.25 541.20 L1537.60 541.20 L1537.95 541.20 L1538.30 541.20 L1538.65 541.20 L1539.00 541.20 L1539.35 541.20 L1539.70 541.20 L1540.05 541.20 L1540.40 541.20 L1540.75 541.20 L1541.10 541.20 L1541.45 541.20 L1541.80 541.20 L1542.15 541.20 L1542.50 541.20 L1542.85 541.20 L1543.20 541.20 L1543.55 541.20 L1543.90 541.20 L1544.25 541.20 L1544.60 541.20 L1544.95 541.20 L1545.30 541.20 L1545.65 541.20 L1546.00 541.19 L1546.35 541.19 L1546.70 541.19 L1547.05 541.19 L1547.40 541.19 L1547.75 541.18 L1548.10 541.18 L1548.45 541.17 L1548.80 541.17 L1549.15 541.16 L1549.50 541.15 L1549.85 541.14 L1550.20 541.13 L1550.55 541.11 L1550.90 541.10 L1551.25 541.08 L1551.60 541.06 L1551.95 541.05 L1552.30 541.03 L1552.65 541.00 L1553.00 540.98 L1553.35 540.96 L1553.70 540.94 L1554.05 540.92 L1554.40 540.90 L1554.75 540.88 L1555.10 540.86 L1555.45 540.84 L1555.80 540.83 L1556.15 540.81 L1556.50 540.81 L1556.85 540.80 L1557.20 540.80 L1557.55 540.80 L1557.90 540.81 L1558.25 540.81 L1558.60 540.83 L1558.95 540.84 L1559.30 540.86 L1559.65 540.88 L1560.00 540.90 L1560.35 540.92 L1560.70 540.94 L1561.05 540.96 L1561.40 540.98 L1561.75 541.00 L1562.10 541.03 L1562.45 541.05 L1562.80 541.06 L1563.15 541.08 L1563.50 541.10 L1563.85 541.11 L1564.20 541.13 L1564.55 541.14 L1564.90 541.15 L1565.25 541.16 L1565.60 541.17 L1565.95 541.17 L1566.30 541.18 L1566.65 541.18 L1567.00 541.19 L1567.35 541.19 L1567.70 541.19" stroke="#ee50a0"/><path d="M1567.40 541.19 L1567.75 541.19 L1568.10 541.19 L1568.45 541.20 L1568.80 541.20 L1569.15 541.20 L1569.50 541.20 L1569.85 541.20 L1570.20 541.20 L1570.55 541.20 L1570.90 541.20 L1571.25 541.20 L1571.60 541.20 L1571.95 541.20 L1572.30 541.20 L1572.65 541.20 L1573.00 541.20 L1573.35 541.20 L1573.70 541.20 L1574.05 541.20 L1574.40 541.20 L1574.75 541.20 L1575.10 541.20 L1575.45 541.20 L1575.80 541.20 L1576.15 541.20 L1576.50 541.20 L1576.85 541.20 L1577.20 541.20 L1577.55 541.20 L1577.90 541.20 L1578.25 541.20 L1578.60 541.20 L1578.95 541.20 L1579.30 541.20 L1579.65 541.20 L1580.00 541.20 L1580.35 541.20 L1580.70 541.20 L1581.05 541.20 L1581.40 541.20 L1581.75 541.20 L1582.10 541.20 L1582.45 541.20 L1582.80 541.20 L1583.15 541.20 L1583.50 541.20 L1583.85 541.20 L1584.20 541.20 L1584.55 541.20 L1584.90 541.20 L1585.25 541.20 L1585.60 541.20 L1585.95 541.20 L1586.30 541.20 L1586.65 541.20 L1587.00 540.56 L1587.35 539.82 L1587.70 539.07 L1588.05 538.33 L1588.40 538.44 L1588.75 539.17 L1589.10 539.88 L1589.45 540.59 L1589.80 541.08 L1590.15 541.04 L1590.50 541.00 L1590.85 540.96 L1591.20 540.93 L1591.55 540.89 L1591.90 540.85 L1592.25 540.82 L1592.60 540.86 L1592.95 540.90 L1593.30 540.94 L1593.65 540.98 L1594.00 541.01 L1594.35 541.05 L1594.70 541.09 L1595.05 541.13 L1595.40 541.17 L1595.75 541.20 L1596.10 541.20 L1596.45 541.20 L1596.80 541.20" stroke="#5c5c5c"/><path d="M1596.70 541.20 L1597.05 541.20 L1597.40 541.20 L1597.75 541.20 L1598.10 541.20 L1598.45 541.20 L1598.80 541.20 L1599.15 541.20 L1599.50 541.20 L1599.85 541.20 L1600.20 541.20 L1600.55 541.20 L1600.90 541.20 L1601.25 541.20 L1601.60 541.20 L1601.95 541.20 L1602.30 541.20 L1602.65 541.20 L1603.00 541.20 L1603.35 541.20 L1603.70 541.20 L1604.05 541.20 L1604.40 541.20 L1604.75 541.20 L1605.10 541.20 L1605.45 541.20 L1605.80 541.20 L1606.15 541.20 L1606.50 541.20 L1606.85 541.09 L1607.20 540.32 L1607.55 539.55 L1607.90 538.78 L1608.25 538.01 L1608.60 537.24 L1608.95 536.47 L1609.30 535.70 L1609.65 534.93 L1610.00 535.01 L1610.35 535.73 L1610.70 536.46 L1611.05 537.18 L1611.40 537.90 L1611.75 538.62 L1612.10 539.34 L1612.45 540.07 L1612.80 540.79 L1613.15 541.20 L1613.50 541.20 L1613.85 541.20 L1614.20 541.20 L1614.55 541.20 L1614.90 541.20 L1615.25 541.20 L1615.60 541.20 L1615.95 541.20 L1616.30 541.20 L1616.65 541.20 L1617.00 541.20 L1617.35 541.20 L1617.70 541.20 L1618.05 541.20 L1618.40 541.20 L1618.75 541.20 L1619.10 541.20 L1619.45 541.20 L1619.80 541.20 L1620.15 541.20 L1620.50 541.20 L1620.85 541.20 L1621.20 541.20 L1621.55 541.20 L1621.90 541.20 L1622.25 541.20 L1622.60 541.20 L1622.95 541.20 L1623.30 541.19 L1623.65 541.19 L1624.00 541.19 L1624.35 541.19 L1624.70 541.19 L1625.05 541.18 L1625.40 541.18 L1625.75 541.17 L1626.10 541.17 L1626.45 541.16 L1626.80 541.15 L1627.15 541.14 L1627.50 541.13 L1627.85 541.11 L1628.20 541.10 L1628.55 541.08 L1628.90 541.06 L1629.25 541.05 L1629.60 541.03 L1629.95 541.00 L1630.30 540.98 L1630.65 540.96 L1631.00 540.94 L1631.35 540.92 L1631.70 540.90 L1632.05 540.88 L1632.40 540.86 L1632.75 540.84 L1633.10 540.83 L1633.45 540.81 L1633.80 540.81 L1634.15 540.80 L1634.50 540.80 L1634.85 540.80 L1635.20 540.81 L1635.55 540.81 L1635.90 540.83 L1636.25 540.84 L1636.60 540.86 L1636.95 540.88 L1637.30 540.90 L1637.65 540.92 L1638.00 540.94 L1638.35 540.96 L1638.70 540.98 L1639.05 541.00 L1639.40 541.03 L1639.75 541.05 L1640.10 541.06 L1640.45 541.08 L1640.80 541.10 L1641.15 541.11 L1641.50 541.13 L1641.85 541.14 L1642.20 541.15 L1642.55 541.16 L1642.90 541.17 L1643.25 541.17 L1643.60 541.18 L1643.95 541.18 L1644.30 541.19 L1644.65 541.19 L1645.00 541.19" stroke="#ee50a0"/><path d="M1644.70 541.19 L1645.05 541.19 L1645.40 541.19 L1645.75 541.20 L1646.10 541.20 L1646.45 541.20 L1646.80 541.20 L1647.15 541.20 L1647.50 541.20 L1647.85 541.20 L1648.20 541.20 L1648.55 541.20 L1648.90 541.20 L1649.25 541.20 L1649.60 541.20 L1649.95 541.20 L1650.30 541.20 L1650.65 541.20 L1651.00 541.20 L1651.35 541.20 L1651.70 541.20 L1652.05 541.20 L1652.40 541.20 L1652.75 541.20 L1653.10 541.20 L1653.45 541.20 L1653.80 541.20 L1654.15 541.20 L1654.50 541.20 L1654.85 541.20 L1655.20 541.20 L1655.55 541.20 L1655.90 541.20 L1656.25 541.20 L1656.60 541.20 L1656.95 541.20 L1657.30 541.20 L1657.65 541.20 L1658.00 541.20 L1658.35 541.20 L1658.70 541.20 L1659.05 541.20 L1659.40 541.20 L1659.75 541.20 L1660.10 541.20 L1660.45 541.20 L1660.80 541.20 L1661.15 541.20 L1661.50 541.20 L1661.85 541.20 L1662.20 541.20 L1662.55 541.20 L1662.90 541.20 L1663.25 541.20 L1663.60 541.20 L1663.95 541.20 L1664.30 539.49 L1664.65 537.51 L1665.00 535.52 L1665.35 533.53 L1665.70 533.81 L1666.05 535.79 L1666.40 537.67 L1666.75 539.56 L1667.10 540.88 L1667.45 540.78 L1667.80 540.67 L1668.15 540.57 L1668.50 540.47 L1668.85 540.37 L1669.20 540.26 L1669.55 540.19 L1669.90 540.29 L1670.25 540.40 L1670.60 540.50 L1670.95 540.60 L1671.30 540.70 L1671.65 540.81 L1672.00 540.91 L1672.35 541.01 L1672.70 541.11 L1673.05 541.20 L1673.40 541.20 L1673.75 541.20 L1674.10 541.20" stroke="#5c5c5c"/><path d="M1674.00 541.20 L1674.35 541.20 L1674.70 541.20 L1675.05 541.20 L1675.40 541.20 L1675.75 541.20 L1676.10 541.20 L1676.45 541.20 L1676.80 541.20 L1677.15 541.20 L1677.50 541.20 L1677.85 541.20 L1678.20 541.20 L1678.55 541.20 L1678.90 541.20 L1679.25 541.20 L1679.60 541.20 L1679.95 541.20 L1680.30 541.20 L1680.65 541.20 L1681.00 541.20 L1681.35 541.20 L1681.70 541.20 L1682.05 541.20 L1682.40 541.20 L1682.75 541.20 L1683.10 541.20 L1683.45 541.20 L1683.80 541.20 L1684.15 541.09 L1684.50 540.32 L1684.85 539.55 L1685.20 538.78 L1685.55 538.01 L1685.90 537.24 L1686.25 536.47 L1686.60 535.70 L1686.95 534.93 L1687.30 535.01 L1687.65 535.73 L1688.00 536.46 L1688.35 537.18 L1688.70 537.90 L1689.05 538.62 L1689.40 539.34 L1689.75 540.07 L1690.10 540.79 L1690.45 541.20 L1690.80 541.20 L1691.15 541.20 L1691.50 541.20 L1691.85 541.20 L1692.20 541.20 L1692.55 541.20 L1692.90 541.20 L1693.25 541.20 L1693.60 541.20 L1693.95 541.20 L1694.30 541.20 L1694.65 541.20 L1695.00 541.20 L1695.35 541.20 L1695.70 541.20 L1696.05 541.20 L1696.40 541.20 L1696.75 541.20 L1697.10 541.20 L1697.45 541.20 L1697.80 541.20 L1698.15 541.20 L1698.50 541.20 L1698.85 541.20 L1699.20 541.20 L1699.55 541.20 L1699.90 541.20 L1700.25 541.20 L1700.60 541.19 L1700.95 541.19 L1701.30 541.19 L1701.65 541.19 L1702.00 541.19 L1702.35 541.18 L1702.70 541.18 L1703.05 541.17 L1703.40 541.17 L1703.75 541.16 L1704.10 541.15 L1704.45 541.14 L1704.80 541.13 L1705.15 541.11 L1705.50 541.10 L1705.85 541.08 L1706.20 541.06 L1706.55 541.05 L1706.90 541.03 L1707.25 541.00 L1707.60 540.98 L1707.95 540.96 L1708.30 540.94 L1708.65 540.92 L1709.00 540.90 L1709.35 540.88 L1709.70 540.86 L1710.05 540.84 L1710.40 540.83 L1710.75 540.81 L1711.10 540.81 L1711.45 540.80 L1711.80 540.80 L1712.15 540.80 L1712.50 540.81 L1712.85 540.81 L1713.20 540.83 L1713.55 540.84 L1713.90 540.86 L1714.25 540.88 L1714.60 540.90 L1714.95 540.92 L1715.30 540.94 L1715.65 540.96 L1716.00 540.98 L1716.35 541.00 L1716.70 541.03 L1717.05 541.05 L1717.40 541.06 L1717.75 541.08 L1718.10 541.10 L1718.45 541.11 L1718.80 541.13 L1719.15 541.14 L1719.50 541.15 L1719.85 541.16 L1720.20 541.17 L1720.55 541.17 L1720.90 541.18 L1721.25 541.18 L1721.60 541.19 L1721.95 541.19 L1722.30 541.19" stroke="#ee50a0"/><path d="M1722.00 541.19 L1722.35 541.19 L1722.70 541.19 L1723.05 541.20 L1723.40 541.20 L1723.75 541.20 L1724.10 541.20 L1724.45 541.20 L1724.80 541.20 L1725.15 541.20 L1725.50 541.20 L1725.85 541.20 L1726.20 541.20 L1726.55 541.20 L1726.90 541.20 L1727.25 541.20 L1727.60 541.20 L1727.95 541.20 L1728.30 541.20 L1728.65 541.20 L1729.00 541.20 L1729.35 541.20 L1729.70 541.20 L1730.05 541.20 L1730.40 541.20 L1730.75 541.20 L1731.10 541.20 L1731.45 541.20 L1731.80 541.20 L1732.15 541.20 L1732.50 541.20 L1732.85 541.20 L1733.20 541.20 L1733.55 541.20 L1733.90 541.20 L1734.25 541.20 L1734.60 541.20 L1734.95 541.20 L1735.30 541.20 L1735.65 541.20 L1736.00 541.20 L1736.35 541.20 L1736.70 541.20 L1737.05 541.20 L1737.40 541.20 L1737.75 541.20 L1738.10 541.20 L1738.45 541.20 L1738.80 541.20 L1739.15 541.20 L1739.50 541.20 L1739.85 541.20 L1740.20 541.20 L1740.55 541.20 L1740.90 541.20 L1741.25 541.20 L1741.60 540.82 L1741.95 540.37 L1742.30 539.92 L1742.65 539.48 L1743.00 539.54 L1743.35 539.98 L1743.70 540.41 L1744.05 540.83 L1744.40 541.13 L1744.75 541.10 L1745.10 541.08 L1745.45 541.06 L1745.80 541.04 L1746.15 541.01 L1746.50 540.99 L1746.85 540.97 L1747.20 541.00 L1747.55 541.02 L1747.90 541.04 L1748.25 541.07 L1748.60 541.09 L1748.95 541.11 L1749.30 541.13 L1749.65 541.16 L1750.00 541.18 L1750.35 541.20 L1750.70 541.20 L1751.05 541.20 L1751.40 541.20" stroke="#5c5c5c"/><path d="M1751.30 541.20 L1751.65 541.20 L1752.00 541.20 L1752.35 541.20 L1752.70 541.20 L1753.05 541.20 L1753.40 541.20 L1753.75 541.20 L1754.10 541.20 L1754.45 541.20 L1754.80 541.20 L1755.15 541.20 L1755.50 541.20 L1755.85 541.20 L1756.20 541.20 L1756.55 541.20 L1756.90 541.20 L1757.25 541.20 L1757.60 541.20 L1757.95 541.20 L1758.30 541.20 L1758.65 541.20 L1759.00 541.20 L1759.35 541.20 L1759.70 541.20 L1760.05 541.20 L1760.40 541.20 L1760.75 541.20 L1761.10 541.20 L1761.45 541.09 L1761.80 540.32 L1762.15 539.55 L1762.50 538.78 L1762.85 538.01 L1763.20 537.24 L1763.55 536.47 L1763.90 535.70 L1764.25 534.93 L1764.60 535.01 L1764.95 535.73 L1765.30 536.46 L1765.65 537.18 L1766.00 537.90 L1766.35 538.62 L1766.70 539.34 L1767.05 540.07 L1767.40 540.79 L1767.75 541.20 L1768.10 541.20 L1768.45 541.20 L1768.80 541.20 L1769.15 541.20 L1769.50 541.20 L1769.85 541.20 L1770.20 541.20 L1770.55 541.20 L1770.90 541.20 L1771.25 541.20 L1771.60 541.20 L1771.95 541.20 L1772.30 541.20 L1772.65 541.20 L1773.00 541.20 L1773.35 541.20 L1773.70 541.20 L1774.05 541.20 L1774.40 541.20 L1774.75 541.20 L1775.10 541.20 L1775.45 541.20 L1775.80 541.20 L1776.15 541.20 L1776.50 541.20 L1776.85 541.20 L1777.20 541.20 L1777.55 541.20 L1777.90 541.19 L1778.25 541.19 L1778.60 541.19 L1778.95 541.19 L1779.30 541.19 L1779.65 541.18 L1780.00 541.18 L1780.35 541.17" stroke="#ee50a0"/><path d="M214.00 630.98 L214.35 631.46 L214.70 631.07 L215.05 628.50 L215.40 625.93 L215.75 623.37 L216.10 620.80 L216.45 618.23 L216.80 615.67 L217.15 613.10 L217.50 610.53 L217.85 611.71 L218.20 614.39 L218.55 617.07 L218.90 619.75 L219.25 622.43 L219.60 625.11 L219.95 627.79 L220.30 630.47 L220.65 633.15 L221.00 633.75 L221.35 632.79 L221.70 631.82 L222.05 630.86 L222.40 629.90 L222.75 628.92 L223.10 628.75 L223.45 628.71 L223.80 628.68 L224.15 628.64 L224.50 628.61 L224.85 628.57 L225.20 628.54 L225.55 628.50 L225.90 628.47 L226.25 628.43 L226.60 628.40 L226.95 628.36 L227.30 628.33 L227.65 628.29 L228.00 628.26 L228.35 628.22 L228.70 628.19 L229.05 628.15 L229.40 628.11 L229.75 628.08 L230.10 628.04 L230.45 628.00 L230.80 627.96 L231.15 627.91 L231.50 627.87 L231.85 627.82 L232.20 627.77 L232.55 627.72 L232.90 627.66 L233.25 627.60 L233.60 627.53 L233.95 627.45 L234.30 627.36 L234.65 627.28 L235.00 627.21 L235.35 627.13 L235.70 627.05 L236.05 626.95 L236.40 626.84 L236.75 626.72 L237.10 626.59 L237.45 626.45 L237.80 626.30 L238.15 626.15 L238.50 625.99 L238.85 625.83 L239.20 625.67 L239.55 625.51 L239.90 625.36 L240.25 625.22 L240.60 625.09 L240.95 624.98 L241.30 624.88 L241.65 624.81 L242.00 624.76 L242.35 624.73 L242.70 624.74 L243.05 624.83 L243.40 624.94 L243.75 625.08 L244.10 625.24 L244.45 625.41 L244.80 625.60 L245.15 625.81 L245.50 626.03 L245.85 626.25 L246.20 626.48 L246.55 626.71 L246.90 626.94 L247.25 627.17 L247.60 627.39 L247.95 627.60 L248.30 627.81 L248.65 627.99 L249.00 628.10 L249.35 628.21 L249.70 628.30 L250.05 628.38 L250.40 628.45 L250.75 628.51 L251.10 628.56 L251.45 628.61 L251.80 628.65 L252.15 628.68 L252.50 628.70 L252.85 628.72 L253.20 628.74 L253.55 628.75 L253.90 628.77 L254.25 628.77 L254.60 628.78 L254.95 628.79 L255.30 628.79 L255.65 628.79 L256.00 628.79 L256.35 628.80 L256.70 628.80 L257.05 628.80 L257.40 628.80 L257.75 628.80 L258.10 628.80 L258.45 628.80 L258.80 628.80 L259.15 628.80 L259.50 628.80 L259.85 628.80 L260.20 628.80 L260.55 628.80 L260.90 628.80 L261.25 628.80 L261.60 628.80 L261.95 628.80 L262.30 628.80 L262.65 628.80 L263.00 628.80 L263.35 628.80 L263.70 628.80 L264.05 628.80 L264.40 628.80 L264.75 628.80 L265.10 628.80 L265.45 628.80 L265.80 628.80 L266.15 628.80 L266.50 628.80 L266.85 628.80 L267.20 628.80 L267.55 628.80 L267.90 628.80 L268.25 628.79 L268.60 628.79 L268.95 628.79 L269.30 628.78 L269.65 628.77 L270.00 628.75 L270.35 628.73 L270.70 628.70 L271.05 628.66 L271.40 628.61 L271.75 628.54 L272.10 628.45 L272.45 628.35 L272.80 628.21 L273.15 628.06 L273.50 627.88 L273.85 627.68 L274.20 627.46 L274.55 627.22 L274.90 626.98 L275.25 626.74 L275.60 626.50 L275.95 626.29 L276.30 626.10 L276.65 625.96 L277.00 625.85 L277.35 625.80 L277.70 625.81 L278.05 625.87 L278.40 625.97 L278.75 626.13 L279.10 626.32 L279.45 626.54 L279.80 626.77 L280.15 627.02 L280.50 627.26 L280.85 627.49 L281.20 627.71 L281.55 627.91 L281.90 628.08 L282.25 628.23 L282.60 628.36 L282.95 628.47 L283.30 628.55 L283.65 628.62 L284.00 628.67 L284.35 628.71 L284.70 628.74 L285.05 628.76 L285.40 628.77 L285.75 628.78 L286.10 628.79 L286.45 628.79 L286.80 628.80 L287.15 628.80 L287.50 628.80 L287.85 628.80 L288.20 628.80 L288.55 628.80 L288.90 628.80 L289.25 628.80 L289.60 629.21 L289.95 629.69 L290.30 630.16 L290.65 630.64 L291.00 631.12 L291.35 631.60 L291.70 630.33 L292.05 627.77 L292.40 625.20 L292.75 622.63 L293.10 620.07 L293.45 617.50 L293.80 614.93 L294.15 612.37 L294.50 609.80 L294.85 612.48 L295.20 615.16 L295.55 617.84 L295.90 620.52 L296.25 623.20 L296.60 625.88 L296.95 628.56 L297.30 631.24 L297.65 633.92 L298.00 633.47 L298.35 632.51 L298.70 631.55 L299.05 630.59 L299.40 629.62 L299.75 628.77 L300.10 628.74 L300.45 628.70 L300.80 628.67 L301.15 628.63 L301.50 628.60 L301.85 628.56 L302.20 628.53 L302.55 628.49 L302.90 628.46 L303.25 628.42 L303.60 628.39 L303.95 628.35 L304.30 628.32 L304.65 628.28 L305.00 628.25 L305.35 628.21 L305.70 628.18 L306.05 628.14 L306.40 628.10 L306.75 628.06 L307.10 628.03 L307.45 627.99 L307.80 627.94 L308.15 627.90 L308.50 627.86 L308.85 627.81 L309.20 627.76 L309.55 627.70 L309.90 627.64 L310.25 627.58 L310.60 627.50 L310.95 627.43 L311.30 627.34 L311.65 627.26 L312.00 627.19 L312.35 627.11 L312.70 627.02 L313.05 626.92 L313.40 626.81 L313.75 626.68 L314.10 626.55 L314.45 626.41 L314.80 626.26 L315.15 626.10 L315.50 625.95 L315.85 625.78 L316.20 625.62 L316.55 625.47 L316.90 625.32 L317.25 625.18 L317.60 625.06 L317.95 624.95 L318.30 624.86 L318.65 624.79 L319.00 624.74 L319.35 624.72 L319.70 624.76 L320.05 624.86 L320.40 624.98 L320.75 625.12 L321.10 625.28 L321.45 625.47 L321.80 625.66 L322.15 625.87 L322.50 626.09 L322.85 626.32 L323.20 626.55 L323.55 626.78 L323.90 627.01 L324.25 627.23 L324.60 627.45 L324.95 627.66 L325.30 627.86 L325.65 628.02 L326.00 628.13 L326.35 628.23 L326.70 628.32 L327.05 628.40 L327.40 628.47 L327.75 628.53 L328.10 628.58 L328.45 628.62 L328.80 628.66 L329.15 628.69 L329.50 628.71 L329.85 628.73 L330.20 628.75 L330.55 628.76 L330.90 628.77 L331.25 628.78 L331.60 628.78 L331.95 628.79 L332.30 628.79 L332.65 628.79 L333.00 628.79 L333.35 628.80 L333.70 628.80 L334.05 628.80 L334.40 628.80 L334.75 628.80 L335.10 628.80 L335.45 628.80 L335.80 628.80 L336.15 628.80 L336.50 628.80 L336.85 628.80 L337.20 628.80 L337.55 628.80 L337.90 628.80 L338.25 628.80 L338.60 628.80 L338.95 628.80 L339.30 628.80 L339.65 628.80 L340.00 628.80 L340.35 628.80 L340.70 628.80 L341.05 628.80 L341.40 628.80 L341.75 628.80 L342.10 628.80 L342.45 628.80 L342.80 628.80 L343.15 628.80 L343.50 628.80 L343.85 628.80 L344.20 628.80 L344.55 628.80 L344.90 628.80 L345.25 628.80 L345.60 628.80 L345.95 628.79 L346.30 628.79 L346.65 628.78 L347.00 628.77 L347.35 628.76 L347.70 628.74 L348.05 628.72 L348.40 628.68 L348.75 628.63 L349.10 628.57 L349.45 628.49 L349.80 621.27 L350.15 612.84 L350.50 604.38 L350.85 595.90 L351.20 592.14 L351.55 600.24 L351.90 608.33 L352.25 616.17 L352.60 623.92 L352.95 625.74 L353.30 625.19 L353.65 624.67 L354.00 624.19 L354.35 623.75 L354.70 623.72 L355.05 624.02 L355.40 624.38 L355.75 624.78 L356.10 625.24 L356.45 625.73 L356.80 626.26 L357.15 626.67 L357.50 626.91 L357.85 627.15 L358.20 627.39 L358.55 627.62 L358.90 627.83 L359.25 628.01 L359.60 628.17 L359.95 628.31 L360.30 628.42 L360.65 628.52 L361.00 628.59 L361.35 628.65 L361.70 628.69 L362.05 628.72 L362.40 628.75 L362.75 628.76 L363.10 628.78 L363.45 628.78 L363.80 628.79 L364.15 628.79 L364.50 628.80 L364.85 628.80 L365.20 628.80 L365.55 628.80 L365.90 628.80 L366.25 628.80 L366.60 628.80 L366.95 629.00 L367.30 629.48 L367.65 629.96 L368.00 630.44 L368.35 630.91 L368.70 631.39 L369.05 631.43 L369.40 628.87 L369.75 626.30 L370.10 623.73 L370.45 621.17 L370.80 618.60 L371.15 616.03 L371.50 613.47 L371.85 610.90 L372.20 611.33 L372.55 614.01 L372.90 616.69 L373.25 619.37 L373.60 622.05 L373.95 624.73 L374.30 627.41 L374.65 630.09 L375.00 632.77 L375.35 633.89 L375.70 632.92 L376.05 631.96 L376.40 631.00 L376.75 630.04 L377.10 629.06 L377.45 628.75 L377.80 628.72 L378.15 628.68 L378.50 628.65 L378.85 628.61 L379.20 628.58 L379.55 628.54 L379.90 628.51 L380.25 628.47 L380.60 628.44 L380.95 628.40 L381.30 628.37 L381.65 628.33 L382.00 628.30 L382.35 628.26 L382.70 628.23 L383.05 628.19 L383.40 628.16 L383.75 628.12 L384.10 628.08 L384.45 628.04 L384.80 628.00 L385.15 627.96 L385.50 627.92 L385.85 627.88 L386.20 627.83 L386.55 627.78 L386.90 627.73 L387.25 627.67 L387.60 627.60 L387.95 627.54 L388.30 627.46 L388.65 627.38 L389.00 627.29 L389.35 627.22 L389.70 627.14 L390.05 627.06 L390.40 626.96 L390.75 626.86 L391.10 626.74 L391.45 626.61 L391.80 626.47 L392.15 626.32 L392.50 626.17 L392.85 626.01 L393.20 625.85 L393.55 625.69 L393.90 625.54 L394.25 625.38 L394.60 625.24 L394.95 625.11 L395.30 624.99 L395.65 624.90 L396.00 624.82 L396.35 624.76 L396.70 624.73 L397.05 624.73 L397.40 624.82 L397.75 624.93 L398.10 625.06 L398.45 625.21 L398.80 625.39 L399.15 625.58 L399.50 625.78 L399.85 626.00 L400.20 626.22 L400.55 626.45 L400.90 626.68 L401.25 626.91 L401.60 627.14 L401.95 627.36 L402.30 627.57 L402.65 627.78 L403.00 627.97 L403.35 628.09 L403.70 628.19 L404.05 628.28 L404.40 628.37 L404.75 628.44 L405.10 628.50 L405.45 628.56 L405.80 628.60 L406.15 628.64 L406.50 628.67 L406.85 628.70 L407.20 628.72 L407.55 628.74 L407.90 628.75 L408.25 628.76 L408.60 628.77 L408.95 628.78 L409.30 628.78 L409.65 628.79 L410.00 628.79 L410.35 628.79 L410.70 628.80 L411.05 628.80 L411.40 628.80 L411.75 628.80 L412.10 628.80 L412.45 628.80 L412.80 628.80 L413.15 628.80 L413.50 628.80 L413.85 628.80 L414.20 628.80 L414.55 628.80 L414.90 628.80 L415.25 628.80 L415.60 628.80 L415.95 628.80 L416.30 628.80 L416.65 628.80 L417.00 628.80 L417.35 628.80 L417.70 628.80 L418.05 628.80 L418.40 628.80 L418.75 628.80 L419.10 628.80 L419.45 628.80 L419.80 628.80 L420.15 628.80 L420.50 628.80 L420.85 628.80 L421.20 628.80 L421.55 628.80 L421.90 628.80 L422.25 628.80 L422.60 628.80 L422.95 628.80 L423.30 628.79 L423.65 628.79 L424.00 628.78 L424.35 628.77 L424.70 628.76 L425.05 628.74 L425.40 628.71 L425.75 628.67 L426.10 628.63 L426.45 628.56 L426.80 628.48 L427.15 628.38 L427.50 628.25 L427.85 628.11 L428.20 627.93 L428.55 627.74 L428.90 627.52 L429.25 627.29 L429.60 627.05 L429.95 626.81 L430.30 626.57 L430.65 626.35 L431.00 626.15 L431.35 625.99 L431.70 625.88 L432.05 625.81 L432.40 625.80 L432.75 625.84" stroke="#606060"/><path d="M1480.00 622.25 L1480.35 622.29 L1480.70 622.36 L1481.05 622.48 L1481.40 622.63 L1481.75 622.81 L1482.10 623.03 L1482.45 623.34 L1482.80 623.71 L1483.15 624.08 L1483.50 624.47 L1483.85 624.85 L1484.20 625.24 L1484.55 625.62 L1484.90 625.99 L1485.25 626.34 L1485.60 626.68 L1485.95 627.00 L1486.30 627.31 L1486.65 627.59 L1487.00 627.86 L1487.35 628.06 L1487.70 628.19 L1488.05 628.29 L1488.40 628.39 L1488.75 628.46 L1489.10 628.53 L1489.45 628.59 L1489.80 628.63 L1490.15 628.67" stroke="#ee50a0"/><path d="M1490.10 628.66 L1490.45 628.69 L1490.80 628.72 L1491.15 628.74 L1491.50 628.75 L1491.85 628.76 L1492.20 628.77 L1492.55 628.78 L1492.90 628.79 L1493.25 628.79 L1493.60 628.79 L1493.95 628.79 L1494.30 628.80 L1494.65 628.80 L1495.00 628.80 L1495.35 628.80 L1495.70 628.80 L1496.05 628.80 L1496.40 628.80 L1496.75 628.80 L1497.10 628.80 L1497.45 628.80 L1497.80 628.80 L1498.15 628.80 L1498.50 628.80 L1498.85 628.80 L1499.20 628.80 L1499.55 628.80 L1499.90 628.80 L1500.25 628.80 L1500.60 628.80 L1500.95 628.80 L1501.30 628.80 L1501.65 628.80 L1502.00 628.80 L1502.35 628.80 L1502.70 628.80 L1503.05 628.80 L1503.40 628.80 L1503.75 628.80 L1504.10 628.80 L1504.45 628.80 L1504.80 628.80 L1505.15 628.80 L1505.50 628.80 L1505.85 628.80 L1506.20 628.80 L1506.55 628.80 L1506.90 628.80 L1507.25 628.80 L1507.60 628.80 L1507.95 628.80 L1508.30 628.80 L1508.65 628.80 L1509.00 628.80 L1509.35 628.80 L1509.70 625.00 L1510.05 620.57 L1510.40 616.13 L1510.75 611.70 L1511.10 612.33 L1511.45 616.73 L1511.80 620.94 L1512.15 625.14 L1512.50 628.08 L1512.85 627.86 L1513.20 627.63 L1513.55 627.40 L1513.90 627.17 L1514.25 626.94 L1514.60 626.72 L1514.95 626.55 L1515.30 626.78 L1515.65 627.01 L1516.00 627.24 L1516.35 627.46 L1516.70 627.69 L1517.05 627.92 L1517.40 628.15 L1517.75 628.38 L1518.10 628.60 L1518.45 628.80 L1518.80 628.80 L1519.15 628.80 L1519.50 628.80" stroke="#5c5c5c"/><path d="M1519.40 628.80 L1519.75 628.80 L1520.10 628.80 L1520.45 628.80 L1520.80 628.80 L1521.15 628.80 L1521.50 628.80 L1521.85 628.80 L1522.20 628.80 L1522.55 628.80 L1522.90 628.80 L1523.25 628.80 L1523.60 628.80 L1523.95 628.80 L1524.30 628.80 L1524.65 628.80 L1525.00 628.80 L1525.35 628.80 L1525.70 628.80 L1526.05 628.80 L1526.40 628.80 L1526.75 628.80 L1527.10 628.80 L1527.45 629.02 L1527.80 629.55 L1528.15 630.07 L1528.50 630.60 L1528.85 631.12 L1529.20 631.65 L1529.55 631.73 L1529.90 629.13 L1530.25 626.52 L1530.60 623.92 L1530.95 621.32 L1531.30 618.72 L1531.65 616.12 L1532.00 613.52 L1532.35 610.91 L1532.70 611.24 L1533.05 613.75 L1533.40 616.27 L1533.75 618.78 L1534.10 621.30 L1534.45 623.82 L1534.80 626.33 L1535.15 628.85 L1535.50 631.36 L1535.85 632.50 L1536.20 631.80 L1536.55 631.10 L1536.90 630.40 L1537.25 629.70 L1537.60 628.99 L1537.95 628.76 L1538.30 628.72 L1538.65 628.69 L1539.00 628.66 L1539.35 628.63 L1539.70 628.59 L1540.05 628.56 L1540.40 628.53 L1540.75 628.49 L1541.10 628.46 L1541.45 628.43 L1541.80 628.40 L1542.15 628.36 L1542.50 628.33 L1542.85 628.29 L1543.20 628.26 L1543.55 628.22 L1543.90 628.19 L1544.25 628.15 L1544.60 628.11 L1544.95 628.07 L1545.30 628.03 L1545.65 627.99 L1546.00 627.94 L1546.35 627.88 L1546.70 627.83 L1547.05 627.76 L1547.40 627.69 L1547.75 627.61 L1548.10 627.52 L1548.45 627.42 L1548.80 627.30 L1549.15 627.17 L1549.50 627.03 L1549.85 626.86 L1550.20 626.68 L1550.55 626.48 L1550.90 626.27 L1551.25 626.03 L1551.60 625.77 L1551.95 625.50 L1552.30 625.21 L1552.65 624.91 L1553.00 624.61 L1553.35 624.29 L1553.70 624.00 L1554.05 623.72 L1554.40 623.45 L1554.75 623.20 L1555.10 622.97 L1555.45 622.76 L1555.80 622.58 L1556.15 622.44 L1556.50 622.33 L1556.85 622.27 L1557.20 622.25 L1557.55 622.27 L1557.90 622.33 L1558.25 622.44 L1558.60 622.58 L1558.95 622.76 L1559.30 622.97 L1559.65 623.24 L1560.00 623.60 L1560.35 623.97 L1560.70 624.36 L1561.05 624.74 L1561.40 625.13 L1561.75 625.51 L1562.10 625.88 L1562.45 626.24 L1562.80 626.59 L1563.15 626.91 L1563.50 627.22 L1563.85 627.51 L1564.20 627.78 L1564.55 628.02 L1564.90 628.15 L1565.25 628.26 L1565.60 628.36 L1565.95 628.44 L1566.30 628.51 L1566.65 628.57 L1567.00 628.62 L1567.35 628.66 L1567.70 628.69" stroke="#ee50a0"/><path d="M1567.40 628.66 L1567.75 628.69 L1568.10 628.72 L1568.45 628.74 L1568.80 628.75 L1569.15 628.76 L1569.50 628.77 L1569.85 628.78 L1570.20 628.79 L1570.55 628.79 L1570.90 628.79 L1571.25 628.79 L1571.60 628.80 L1571.95 628.80 L1572.30 628.80 L1572.65 628.80 L1573.00 628.80 L1573.35 628.80 L1573.70 628.80 L1574.05 628.80 L1574.40 628.80 L1574.75 628.80 L1575.10 628.80 L1575.45 628.80 L1575.80 628.80 L1576.15 628.80 L1576.50 628.80 L1576.85 628.80 L1577.20 628.80 L1577.55 628.80 L1577.90 628.80 L1578.25 628.80 L1578.60 628.80 L1578.95 628.80 L1579.30 628.80 L1579.65 628.80 L1580.00 628.80 L1580.35 628.80 L1580.70 628.80 L1581.05 628.80 L1581.40 628.80 L1581.75 628.80 L1582.10 628.80 L1582.45 628.80 L1582.80 628.80 L1583.15 628.80 L1583.50 628.80 L1583.85 628.80 L1584.20 628.80 L1584.55 628.80 L1584.90 628.80 L1585.25 628.80 L1585.60 628.80 L1585.95 628.80 L1586.30 628.80 L1586.65 628.80 L1587.00 626.71 L1587.35 624.27 L1587.70 621.83 L1588.05 619.40 L1588.40 619.74 L1588.75 622.16 L1589.10 624.48 L1589.45 626.79 L1589.80 628.41 L1590.15 628.28 L1590.50 628.16 L1590.85 628.03 L1591.20 627.90 L1591.55 627.78 L1591.90 627.65 L1592.25 627.56 L1592.60 627.69 L1592.95 627.81 L1593.30 627.94 L1593.65 628.07 L1594.00 628.19 L1594.35 628.32 L1594.70 628.44 L1595.05 628.57 L1595.40 628.69 L1595.75 628.80 L1596.10 628.80 L1596.45 628.80 L1596.80 628.80" stroke="#5c5c5c"/><path d="M1596.70 628.80 L1597.05 628.80 L1597.40 628.80 L1597.75 628.80 L1598.10 628.80 L1598.45 628.80 L1598.80 628.80 L1599.15 628.80 L1599.50 628.80 L1599.85 628.80 L1600.20 628.80 L1600.55 628.80 L1600.90 628.80 L1601.25 628.80 L1601.60 628.80 L1601.95 628.80 L1602.30 628.80 L1602.65 628.80 L1603.00 628.80 L1603.35 628.80 L1603.70 628.80 L1604.05 628.80 L1604.40 628.80 L1604.75 629.02 L1605.10 629.55 L1605.45 630.07 L1605.80 630.60 L1606.15 631.12 L1606.50 631.65 L1606.85 631.73 L1607.20 629.13 L1607.55 626.52 L1607.90 623.92 L1608.25 621.32 L1608.60 618.72 L1608.95 616.12 L1609.30 613.52 L1609.65 610.91 L1610.00 611.24 L1610.35 613.75 L1610.70 616.27 L1611.05 618.78 L1611.40 621.30 L1611.75 623.82 L1612.10 626.33 L1612.45 628.85 L1612.80 631.36 L1613.15 632.50 L1613.50 631.80 L1613.85 631.10 L1614.20 630.40 L1614.55 629.70 L1614.90 628.99 L1615.25 628.76 L1615.60 628.72 L1615.95 628.69 L1616.30 628.66 L1616.65 628.63 L1617.00 628.59 L1617.35 628.56 L1617.70 628.53 L1618.05 628.49 L1618.40 628.46 L1618.75 628.43 L1619.10 628.40 L1619.45 628.36 L1619.80 628.33 L1620.15 628.29 L1620.50 628.26 L1620.85 628.22 L1621.20 628.19 L1621.55 628.15 L1621.90 628.11 L1622.25 628.07 L1622.60 628.03 L1622.95 627.99 L1623.30 627.94 L1623.65 627.88 L1624.00 627.83 L1624.35 627.76 L1624.70 627.69 L1625.05 627.61 L1625.40 627.52 L1625.75 627.42 L1626.10 627.30 L1626.45 627.17 L1626.80 627.03 L1627.15 626.86 L1627.50 626.68 L1627.85 626.48 L1628.20 626.27 L1628.55 626.03 L1628.90 625.77 L1629.25 625.50 L1629.60 625.21 L1629.95 624.91 L1630.30 624.61 L1630.65 624.29 L1631.00 624.00 L1631.35 623.72 L1631.70 623.45 L1632.05 623.20 L1632.40 622.97 L1632.75 622.76 L1633.10 622.58 L1633.45 622.44 L1633.80 622.33 L1634.15 622.27 L1634.50 622.25 L1634.85 622.27 L1635.20 622.33 L1635.55 622.44 L1635.90 622.58 L1636.25 622.76 L1636.60 622.97 L1636.95 623.24 L1637.30 623.60 L1637.65 623.97 L1638.00 624.36 L1638.35 624.74 L1638.70 625.13 L1639.05 625.51 L1639.40 625.88 L1639.75 626.24 L1640.10 626.59 L1640.45 626.91 L1640.80 627.22 L1641.15 627.51 L1641.50 627.78 L1641.85 628.02 L1642.20 628.15 L1642.55 628.26 L1642.90 628.36 L1643.25 628.44 L1643.60 628.51 L1643.95 628.57 L1644.30 628.62 L1644.65 628.66 L1645.00 628.69" stroke="#ee50a0"/><path d="M1644.70 628.66 L1645.05 628.69 L1645.40 628.72 L1645.75 628.74 L1646.10 628.75 L1646.45 628.76 L1646.80 628.77 L1647.15 628.78 L1647.50 628.79 L1647.85 628.79 L1648.20 628.79 L1648.55 628.79 L1648.90 628.80 L1649.25 628.80 L1649.60 628.80 L1649.95 628.80 L1650.30 628.80 L1650.65 628.80 L1651.00 628.80 L1651.35 628.80 L1651.70 628.80 L1652.05 628.80 L1652.40 628.80 L1652.75 628.80 L1653.10 628.80 L1653.45 628.80 L1653.80 628.80 L1654.15 628.80 L1654.50 628.80 L1654.85 628.80 L1655.20 628.80 L1655.55 628.80 L1655.90 628.80 L1656.25 628.80 L1656.60 628.80 L1656.95 628.80 L1657.30 628.80 L1657.65 628.80 L1658.00 628.80 L1658.35 628.80 L1658.70 628.80 L1659.05 628.80 L1659.40 628.80 L1659.75 628.80 L1660.10 628.80 L1660.45 628.80 L1660.80 628.80 L1661.15 628.80 L1661.50 628.80 L1661.85 628.80 L1662.20 628.80 L1662.55 628.80 L1662.90 628.80 L1663.25 628.80 L1663.60 628.80 L1663.95 628.80 L1664.30 623.21 L1664.65 616.70 L1665.00 610.18 L1665.35 603.66 L1665.70 604.59 L1666.05 611.06 L1666.40 617.24 L1666.75 623.43 L1667.10 627.75 L1667.45 627.41 L1667.80 627.08 L1668.15 626.74 L1668.50 626.41 L1668.85 626.07 L1669.20 625.74 L1669.55 625.50 L1669.90 625.83 L1670.25 626.17 L1670.60 626.50 L1670.95 626.84 L1671.30 627.17 L1671.65 627.51 L1672.00 627.84 L1672.35 628.18 L1672.70 628.51 L1673.05 628.80 L1673.40 628.80 L1673.75 628.80 L1674.10 628.80" stroke="#5c5c5c"/><path d="M1674.00 628.80 L1674.35 628.80 L1674.70 628.80 L1675.05 628.80 L1675.40 628.80 L1675.75 628.80 L1676.10 628.80 L1676.45 628.80 L1676.80 628.80 L1677.15 628.80 L1677.50 628.80 L1677.85 628.80 L1678.20 628.80 L1678.55 628.80 L1678.90 628.80 L1679.25 628.80 L1679.60 628.80 L1679.95 628.80 L1680.30 628.80 L1680.65 628.80 L1681.00 628.80 L1681.35 628.80 L1681.70 628.80 L1682.05 629.02 L1682.40 629.55 L1682.75 630.07 L1683.10 630.60 L1683.45 631.12 L1683.80 631.65 L1684.15 631.73 L1684.50 629.13 L1684.85 626.52 L1685.20 623.92 L1685.55 621.32 L1685.90 618.72 L1686.25 616.12 L1686.60 613.52 L1686.95 610.91 L1687.30 611.24 L1687.65 613.75 L1688.00 616.27 L1688.35 618.78 L1688.70 621.30 L1689.05 623.82 L1689.40 626.33 L1689.75 628.85 L1690.10 631.36 L1690.45 632.50 L1690.80 631.80 L1691.15 631.10 L1691.50 630.40 L1691.85 629.70 L1692.20 628.99 L1692.55 628.76 L1692.90 628.72 L1693.25 628.69 L1693.60 628.66 L1693.95 628.63 L1694.30 628.59 L1694.65 628.56 L1695.00 628.53 L1695.35 628.49 L1695.70 628.46 L1696.05 628.43 L1696.40 628.40 L1696.75 628.36 L1697.10 628.33 L1697.45 628.29 L1697.80 628.26 L1698.15 628.22 L1698.50 628.19 L1698.85 628.15 L1699.20 628.11 L1699.55 628.07 L1699.90 628.03 L1700.25 627.99 L1700.60 627.94 L1700.95 627.88 L1701.30 627.83 L1701.65 627.76 L1702.00 627.69 L1702.35 627.61 L1702.70 627.52 L1703.05 627.42 L1703.40 627.30 L1703.75 627.17 L1704.10 627.03 L1704.45 626.86 L1704.80 626.68 L1705.15 626.48 L1705.50 626.27 L1705.85 626.03 L1706.20 625.77 L1706.55 625.50 L1706.90 625.21 L1707.25 624.91 L1707.60 624.61 L1707.95 624.29 L1708.30 624.00 L1708.65 623.72 L1709.00 623.45 L1709.35 623.20 L1709.70 622.97 L1710.05 622.76 L1710.40 622.58 L1710.75 622.44 L1711.10 622.33 L1711.45 622.27 L1711.80 622.25 L1712.15 622.27 L1712.50 622.33 L1712.85 622.44 L1713.20 622.58 L1713.55 622.76 L1713.90 622.97 L1714.25 623.24 L1714.60 623.60 L1714.95 623.97 L1715.30 624.36 L1715.65 624.74 L1716.00 625.13 L1716.35 625.51 L1716.70 625.88 L1717.05 626.24 L1717.40 626.59 L1717.75 626.91 L1718.10 627.22 L1718.45 627.51 L1718.80 627.78 L1719.15 628.02 L1719.50 628.15 L1719.85 628.26 L1720.20 628.36 L1720.55 628.44 L1720.90 628.51 L1721.25 628.57 L1721.60 628.62 L1721.95 628.66 L1722.30 628.69" stroke="#ee50a0"/><path d="M1722.00 628.66 L1722.35 628.69 L1722.70 628.72 L1723.05 628.74 L1723.40 628.75 L1723.75 628.76 L1724.10 628.77 L1724.45 628.78 L1724.80 628.79 L1725.15 628.79 L1725.50 628.79 L1725.85 628.79 L1726.20 628.80 L1726.55 628.80 L1726.90 628.80 L1727.25 628.80 L1727.60 628.80 L1727.95 628.80 L1728.30 628.80 L1728.65 628.80 L1729.00 628.80 L1729.35 628.80 L1729.70 628.80 L1730.05 628.80 L1730.40 628.80 L1730.75 628.80 L1731.10 628.80 L1731.45 628.80 L1731.80 628.80 L1732.15 628.80 L1732.50 628.80 L1732.85 628.80 L1733.20 628.80 L1733.55 628.80 L1733.90 628.80 L1734.25 628.80 L1734.60 628.80 L1734.95 628.80 L1735.30 628.80 L1735.65 628.80 L1736.00 628.80 L1736.35 628.80 L1736.70 628.80 L1737.05 628.80 L1737.40 628.80 L1737.75 628.80 L1738.10 628.80 L1738.45 628.80 L1738.80 628.80 L1739.15 628.80 L1739.50 628.80 L1739.85 628.80 L1740.20 628.80 L1740.55 628.80 L1740.90 628.80 L1741.25 628.80 L1741.60 627.55 L1741.95 626.08 L1742.30 624.62 L1742.65 623.16 L1743.00 623.37 L1743.35 624.82 L1743.70 626.21 L1744.05 627.59 L1744.40 628.56 L1744.75 628.49 L1745.10 628.41 L1745.45 628.34 L1745.80 628.26 L1746.15 628.19 L1746.50 628.11 L1746.85 628.06 L1747.20 628.13 L1747.55 628.21 L1747.90 628.28 L1748.25 628.36 L1748.60 628.43 L1748.95 628.51 L1749.30 628.59 L1749.65 628.66 L1750.00 628.74 L1750.35 628.80 L1750.70 628.80 L1751.05 628.80 L1751.40 628.80" stroke="#5c5c5c"/><path d="M1751.30 628.80 L1751.65 628.80 L1752.00 628.80 L1752.35 628.80 L1752.70 628.80 L1753.05 628.80 L1753.40 628.80 L1753.75 628.80 L1754.10 628.80 L1754.45 628.80 L1754.80 628.80 L1755.15 628.80 L1755.50 628.80 L1755.85 628.80 L1756.20 628.80 L1756.55 628.80 L1756.90 628.80 L1757.25 628.80 L1757.60 628.80 L1757.95 628.80 L1758.30 628.80 L1758.65 628.80 L1759.00 628.80 L1759.35 629.02 L1759.70 629.55 L1760.05 630.07 L1760.40 630.60 L1760.75 631.12 L1761.10 631.65 L1761.45 631.73 L1761.80 629.13 L1762.15 626.52 L1762.50 623.92 L1762.85 621.32 L1763.20 618.72 L1763.55 616.12 L1763.90 613.52 L1764.25 610.91 L1764.60 611.24 L1764.95 613.75 L1765.30 616.27 L1765.65 618.78 L1766.00 621.30 L1766.35 623.82 L1766.70 626.33 L1767.05 628.85 L1767.40 631.36 L1767.75 632.50 L1768.10 631.80 L1768.45 631.10 L1768.80 630.40 L1769.15 629.70 L1769.50 628.99 L1769.85 628.76 L1770.20 628.72 L1770.55 628.69 L1770.90 628.66 L1771.25 628.63 L1771.60 628.59 L1771.95 628.56 L1772.30 628.53 L1772.65 628.49 L1773.00 628.46 L1773.35 628.43 L1773.70 628.40 L1774.05 628.36 L1774.40 628.33 L1774.75 628.29 L1775.10 628.26 L1775.45 628.22 L1775.80 628.19 L1776.15 628.15 L1776.50 628.11 L1776.85 628.07 L1777.20 628.03 L1777.55 627.99 L1777.90 627.94 L1778.25 627.88 L1778.60 627.83 L1778.95 627.76 L1779.30 627.69 L1779.65 627.61 L1780.00 627.52 L1780.35 627.42" stroke="#ee50a0"/></g></svg>
<svg class="a" style="left:0;top:0" width="2000" height="1029" viewBox="0 0 2000 1029">
<text x="251.30" y="130.90" font-size="14.60" font-family='"Liberation Sans", sans-serif' font-weight="bold" fill="#1010bd" text-anchor="start" textLength="56.57" lengthAdjust="spacingAndGlyphs" stroke="#1010bd" stroke-width="0.35">10:46:00</text>
<text x="291.00" y="146.30" font-size="14.60" font-family='"Liberation Sans", sans-serif' font-weight="bold" fill="#1010bd" text-anchor="start" textLength="8.63" lengthAdjust="spacingAndGlyphs" stroke="#1010bd" stroke-width="0.35">N</text>
<text x="367.90" y="146.30" font-size="14.60" font-family='"Liberation Sans", sans-serif' font-weight="bold" fill="#1010bd" text-anchor="start" textLength="8.63" lengthAdjust="spacingAndGlyphs" stroke="#1010bd" stroke-width="0.35">N</text>
<text x="1529.90" y="130.90" font-size="14.60" font-family='"Liberation Sans", sans-serif' font-weight="bold" fill="#1010bd" text-anchor="start" textLength="69.53" lengthAdjust="spacingAndGlyphs" stroke="#1010bd" stroke-width="0.35">10 mm/mV</text>
<text x="1653.40" y="130.90" font-size="14.60" font-family='"Liberation Sans", sans-serif' font-weight="bold" fill="#1010bd" text-anchor="start" textLength="77.32" lengthAdjust="spacingAndGlyphs" stroke="#1010bd" stroke-width="0.35">HR: 80 bpm</text>
<text x="1523.10" y="146.00" font-size="14.60" font-family='"Liberation Sans", sans-serif' font-weight="bold" fill="#1010bd" text-anchor="start" textLength="17.89" lengthAdjust="spacingAndGlyphs" stroke="#1010bd" stroke-width="0.35">AP</text>
<text x="1600.00" y="146.00" font-size="14.60" font-family='"Liberation Sans", sans-serif' font-weight="bold" fill="#1010bd" text-anchor="start" textLength="17.89" lengthAdjust="spacingAndGlyphs" stroke="#1010bd" stroke-width="0.35">AP</text>
<text x="1677.60" y="146.00" font-size="14.60" font-family='"Liberation Sans", sans-serif' font-weight="bold" fill="#1010bd" text-anchor="start" textLength="17.89" lengthAdjust="spacingAndGlyphs" stroke="#1010bd" stroke-width="0.35">AP</text>
<text x="1754.60" y="146.00" font-size="14.60" font-family='"Liberation Sans", sans-serif' font-weight="bold" fill="#1010bd" text-anchor="start" textLength="17.89" lengthAdjust="spacingAndGlyphs" stroke="#1010bd" stroke-width="0.35">AP</text>
<rect x="215.5" y="666.4" width="1562" height="2" fill="#6a6aff"/>
<rect x="273.40" y="651.8" width="1.8" height="15.5" fill="#6a6aff"/>
<rect x="350.90" y="651.8" width="1.8" height="15.5" fill="#6a6aff"/>
<rect x="428.40" y="651.8" width="1.8" height="15.5" fill="#6a6aff"/>
<rect x="1510.50" y="651.8" width="1.8" height="15.5" fill="#6a6aff"/>
<rect x="1588.00" y="651.8" width="1.8" height="15.5" fill="#6a6aff"/>
<rect x="1665.40" y="651.8" width="1.8" height="15.5" fill="#6a6aff"/>
<rect x="1742.70" y="651.8" width="1.8" height="15.5" fill="#6a6aff"/>
<text x="321.70" y="686.00" font-size="14.60" font-family='"Liberation Sans", sans-serif' font-weight="bold" fill="#1010bd" text-anchor="start" textLength="23.08" lengthAdjust="spacingAndGlyphs" stroke="#1010bd" stroke-width="0.35">745</text>
<text x="399.00" y="686.00" font-size="14.60" font-family='"Liberation Sans", sans-serif' font-weight="bold" fill="#1010bd" text-anchor="start" textLength="23.38" lengthAdjust="spacingAndGlyphs" stroke="#1010bd" stroke-width="0.35">750</text>
<text x="1481.20" y="686.00" font-size="14.60" font-family='"Liberation Sans", sans-serif' font-weight="bold" fill="#1010bd" text-anchor="start" textLength="23.38" lengthAdjust="spacingAndGlyphs" stroke="#1010bd" stroke-width="0.35">750</text>
<text x="1558.60" y="686.00" font-size="14.60" font-family='"Liberation Sans", sans-serif' font-weight="bold" fill="#1010bd" text-anchor="start" textLength="23.38" lengthAdjust="spacingAndGlyphs" stroke="#1010bd" stroke-width="0.35">750</text>
<text x="1635.90" y="686.00" font-size="14.60" font-family='"Liberation Sans", sans-serif' font-weight="bold" fill="#1010bd" text-anchor="start" textLength="23.38" lengthAdjust="spacingAndGlyphs" stroke="#1010bd" stroke-width="0.35">750</text>
<text x="1713.20" y="686.00" font-size="14.60" font-family='"Liberation Sans", sans-serif' font-weight="bold" fill="#1010bd" text-anchor="start" textLength="23.38" lengthAdjust="spacingAndGlyphs" stroke="#1010bd" stroke-width="0.35">750</text>
<rect x="215" y="137" width="1" height="554" fill="#b8d0b8"/>
<rect x="215" y="691" width="1" height="176" fill="#dadada"/>
<rect x="1787" y="140" width="1" height="726" fill="#e4e4e4"/>
<rect x="215.5" y="691" width="1572.5" height="17.6" fill="#f0f0f0"/>
<rect x="215.5" y="708.6" width="1572.5" height="5" fill="#f7f7f7"/>
<rect x="232.4" y="692.6" width="17.4" height="14.6" fill="#cdcdcd"/>
<path d="M225.2 696.2 L221.6 699.8 L225.2 703.4" fill="none" stroke="#606060" stroke-width="1.7"/>
<path d="M1765.6 696.6 L1769.2 700.2 L1765.6 703.8" fill="none" stroke="#606060" stroke-width="1.7"/>
<rect x="215.5" y="713.6" width="1572.5" height="2" fill="#8a8a8a"/>
<clipPath id="vsc"><path d="M1700 114 H1762 A26 26 0 0 1 1788 140 V700 H1700 Z"/></clipPath><g clip-path="url(#vsc)">
<rect x="1777.5" y="114" width="10.5" height="577" fill="#f0f0f0"/>
<rect x="1778.4" y="132.3" width="9.6" height="269.7" fill="#cdcdcd"/>
<path d="M1779.6 127.6 L1783 124.2 L1786.4 127.6" fill="none" stroke="#606060" stroke-width="1.5"/>
</g>
<path d="M1781.6 680.6 L1785 684 L1788.4 680.6" fill="none" stroke="#606060" stroke-width="1.5"/>
<text x="236.30" y="792.50" font-size="13.80" font-family='"Liberation Sans", sans-serif' font-style="italic" fill="#2a2a2a" text-anchor="start" textLength="19.19" lengthAdjust="spacingAndGlyphs" stroke="#2a2a2a" stroke-width="0.25">HR</text>
<text x="232.50" y="807.60" font-size="13.80" font-family='"Liberation Sans", sans-serif' font-style="italic" fill="#2a2a2a" text-anchor="start" textLength="26.21" lengthAdjust="spacingAndGlyphs" stroke="#2a2a2a" stroke-width="0.25">bpm</text>
<text x="306.28" y="735.70" font-size="13.80" font-family='"Liberation Sans", sans-serif' font-style="italic" fill="#2a2a2a" text-anchor="end" textLength="21.87" lengthAdjust="spacingAndGlyphs" stroke="#2a2a2a" stroke-width="0.25">160</text>
<text x="306.28" y="779.20" font-size="13.80" font-family='"Liberation Sans", sans-serif' font-style="italic" fill="#2a2a2a" text-anchor="end" textLength="21.87" lengthAdjust="spacingAndGlyphs" stroke="#2a2a2a" stroke-width="0.25">120</text>
<text x="306.33" y="822.20" font-size="13.80" font-family='"Liberation Sans", sans-serif' font-style="italic" fill="#2a2a2a" text-anchor="end" textLength="14.58" lengthAdjust="spacingAndGlyphs" stroke="#2a2a2a" stroke-width="0.25">80</text>
<text x="306.33" y="865.40" font-size="13.80" font-family='"Liberation Sans", sans-serif' font-style="italic" fill="#2a2a2a" text-anchor="end" textLength="14.58" lengthAdjust="spacingAndGlyphs" stroke="#2a2a2a" stroke-width="0.25">40</text>
<rect x="309" y="729.85" width="4" height="1.3" fill="#444"/>
<rect x="309" y="751.35" width="4" height="1.3" fill="#444"/>
<rect x="309" y="773.35" width="4" height="1.3" fill="#444"/>
<rect x="309" y="794.85" width="4" height="1.3" fill="#444"/>
<rect x="309" y="816.35" width="4" height="1.3" fill="#444"/>
<rect x="309" y="837.85" width="4" height="1.3" fill="#444"/>
<rect x="309" y="859.55" width="4" height="1.3" fill="#444"/>
<rect x="312.3" y="716" width="1.6" height="14.5" fill="#8c8cff"/>
<rect x="312.3" y="730.5" width="1.6" height="130" fill="#8ef060"/>
<rect x="313.5" y="816.3" width="130" height="1.5" fill="#ff6a6a"/>
<rect x="313" y="859.6" width="927" height="1.6" fill="#555"/>
<rect x="319.35" y="860" width="1.3" height="4" fill="#444"/>
<text x="319.70" y="877.60" font-size="13.80" font-family='"Liberation Sans", sans-serif' font-style="italic" fill="#2a2a2a" text-anchor="middle" stroke="#2a2a2a" stroke-width="0.25">11</text>
<rect x="350.30" y="860" width="1.3" height="4" fill="#444"/>
<text x="350.65" y="877.60" font-size="13.80" font-family='"Liberation Sans", sans-serif' font-style="italic" fill="#2a2a2a" text-anchor="middle" stroke="#2a2a2a" stroke-width="0.25">12</text>
<rect x="381.25" y="860" width="1.3" height="4" fill="#444"/>
<text x="381.60" y="877.60" font-size="13.80" font-family='"Liberation Sans", sans-serif' font-style="italic" fill="#2a2a2a" text-anchor="middle" stroke="#2a2a2a" stroke-width="0.25">13</text>
<rect x="412.20" y="860" width="1.3" height="4" fill="#444"/>
<text x="412.55" y="877.60" font-size="13.80" font-family='"Liberation Sans", sans-serif' font-style="italic" fill="#2a2a2a" text-anchor="middle" stroke="#2a2a2a" stroke-width="0.25">14</text>
<rect x="443.15" y="860" width="1.3" height="4" fill="#444"/>
<text x="443.50" y="877.60" font-size="13.80" font-family='"Liberation Sans", sans-serif' font-style="italic" fill="#2a2a2a" text-anchor="middle" stroke="#2a2a2a" stroke-width="0.25">15</text>
<rect x="474.10" y="860" width="1.3" height="4" fill="#444"/>
<text x="474.45" y="877.60" font-size="13.80" font-family='"Liberation Sans", sans-serif' font-style="italic" fill="#2a2a2a" text-anchor="middle" stroke="#2a2a2a" stroke-width="0.25">16</text>
<rect x="505.05" y="860" width="1.3" height="4" fill="#444"/>
<text x="505.40" y="877.60" font-size="13.80" font-family='"Liberation Sans", sans-serif' font-style="italic" fill="#2a2a2a" text-anchor="middle" stroke="#2a2a2a" stroke-width="0.25">17</text>
<rect x="536.00" y="860" width="1.3" height="4" fill="#444"/>
<text x="536.35" y="877.60" font-size="13.80" font-family='"Liberation Sans", sans-serif' font-style="italic" fill="#2a2a2a" text-anchor="middle" stroke="#2a2a2a" stroke-width="0.25">18</text>
<rect x="566.95" y="860" width="1.3" height="4" fill="#444"/>
<text x="567.30" y="877.60" font-size="13.80" font-family='"Liberation Sans", sans-serif' font-style="italic" fill="#2a2a2a" text-anchor="middle" stroke="#2a2a2a" stroke-width="0.25">19</text>
<rect x="597.90" y="860" width="1.3" height="4" fill="#444"/>
<text x="598.25" y="877.60" font-size="13.80" font-family='"Liberation Sans", sans-serif' font-style="italic" fill="#2a2a2a" text-anchor="middle" stroke="#2a2a2a" stroke-width="0.25">20</text>
<rect x="628.85" y="860" width="1.3" height="4" fill="#444"/>
<text x="629.20" y="877.60" font-size="13.80" font-family='"Liberation Sans", sans-serif' font-style="italic" fill="#2a2a2a" text-anchor="middle" stroke="#2a2a2a" stroke-width="0.25">21</text>
<rect x="659.80" y="860" width="1.3" height="4" fill="#444"/>
<text x="660.15" y="877.60" font-size="13.80" font-family='"Liberation Sans", sans-serif' font-style="italic" fill="#2a2a2a" text-anchor="middle" stroke="#2a2a2a" stroke-width="0.25">22</text>
<rect x="690.75" y="860" width="1.3" height="4" fill="#444"/>
<text x="691.10" y="877.60" font-size="13.80" font-family='"Liberation Sans", sans-serif' font-style="italic" fill="#2a2a2a" text-anchor="middle" stroke="#2a2a2a" stroke-width="0.25">23</text>
<rect x="721.70" y="860" width="1.3" height="4" fill="#444"/>
<text x="722.05" y="877.60" font-size="13.80" font-family='"Liberation Sans", sans-serif' font-style="italic" fill="#2a2a2a" text-anchor="middle" stroke="#2a2a2a" stroke-width="0.25">0</text>
<rect x="752.65" y="860" width="1.3" height="4" fill="#444"/>
<text x="753.00" y="877.60" font-size="13.80" font-family='"Liberation Sans", sans-serif' font-style="italic" fill="#2a2a2a" text-anchor="middle" stroke="#2a2a2a" stroke-width="0.25">1</text>
<rect x="783.60" y="860" width="1.3" height="4" fill="#444"/>
<text x="783.95" y="877.60" font-size="13.80" font-family='"Liberation Sans", sans-serif' font-style="italic" fill="#2a2a2a" text-anchor="middle" stroke="#2a2a2a" stroke-width="0.25">2</text>
<rect x="814.55" y="860" width="1.3" height="4" fill="#444"/>
<text x="814.90" y="877.60" font-size="13.80" font-family='"Liberation Sans", sans-serif' font-style="italic" fill="#2a2a2a" text-anchor="middle" stroke="#2a2a2a" stroke-width="0.25">3</text>
<rect x="845.50" y="860" width="1.3" height="4" fill="#444"/>
<text x="845.85" y="877.60" font-size="13.80" font-family='"Liberation Sans", sans-serif' font-style="italic" fill="#2a2a2a" text-anchor="middle" stroke="#2a2a2a" stroke-width="0.25">4</text>
<rect x="876.45" y="860" width="1.3" height="4" fill="#444"/>
<text x="876.80" y="877.60" font-size="13.80" font-family='"Liberation Sans", sans-serif' font-style="italic" fill="#2a2a2a" text-anchor="middle" stroke="#2a2a2a" stroke-width="0.25">5</text>
<rect x="907.40" y="860" width="1.3" height="4" fill="#444"/>
<text x="907.75" y="877.60" font-size="13.80" font-family='"Liberation Sans", sans-serif' font-style="italic" fill="#2a2a2a" text-anchor="middle" stroke="#2a2a2a" stroke-width="0.25">6</text>
<rect x="938.35" y="860" width="1.3" height="4" fill="#444"/>
<text x="938.70" y="877.60" font-size="13.80" font-family='"Liberation Sans", sans-serif' font-style="italic" fill="#2a2a2a" text-anchor="middle" stroke="#2a2a2a" stroke-width="0.25">7</text>
<rect x="969.30" y="860" width="1.3" height="4" fill="#444"/>
<text x="969.65" y="877.60" font-size="13.80" font-family='"Liberation Sans", sans-serif' font-style="italic" fill="#2a2a2a" text-anchor="middle" stroke="#2a2a2a" stroke-width="0.25">8</text>
<rect x="1000.25" y="860" width="1.3" height="4" fill="#444"/>
<text x="1000.60" y="877.60" font-size="13.80" font-family='"Liberation Sans", sans-serif' font-style="italic" fill="#2a2a2a" text-anchor="middle" stroke="#2a2a2a" stroke-width="0.25">9</text>
<rect x="1031.20" y="860" width="1.3" height="4" fill="#444"/>
<text x="1031.55" y="877.60" font-size="13.80" font-family='"Liberation Sans", sans-serif' font-style="italic" fill="#2a2a2a" text-anchor="middle" stroke="#2a2a2a" stroke-width="0.25">10</text>
<rect x="1062.15" y="860" width="1.3" height="4" fill="#444"/>
<text x="1062.50" y="877.60" font-size="13.80" font-family='"Liberation Sans", sans-serif' font-style="italic" fill="#2a2a2a" text-anchor="middle" stroke="#2a2a2a" stroke-width="0.25">11</text>
<rect x="1093.10" y="860" width="1.3" height="4" fill="#444"/>
<text x="1093.45" y="877.60" font-size="13.80" font-family='"Liberation Sans", sans-serif' font-style="italic" fill="#2a2a2a" text-anchor="middle" stroke="#2a2a2a" stroke-width="0.25">12</text>
<rect x="1124.05" y="860" width="1.3" height="4" fill="#444"/>
<text x="1124.40" y="877.60" font-size="13.80" font-family='"Liberation Sans", sans-serif' font-style="italic" fill="#2a2a2a" text-anchor="middle" stroke="#2a2a2a" stroke-width="0.25">13</text>
<rect x="1155.00" y="860" width="1.3" height="4" fill="#444"/>
<text x="1155.35" y="877.60" font-size="13.80" font-family='"Liberation Sans", sans-serif' font-style="italic" fill="#2a2a2a" text-anchor="middle" stroke="#2a2a2a" stroke-width="0.25">14</text>
<rect x="1185.95" y="860" width="1.3" height="4" fill="#444"/>
<text x="1186.30" y="877.60" font-size="13.80" font-family='"Liberation Sans", sans-serif' font-style="italic" fill="#2a2a2a" text-anchor="middle" stroke="#2a2a2a" stroke-width="0.25">15</text>
<rect x="1216.90" y="860" width="1.3" height="4" fill="#444"/>
<text x="1217.25" y="877.60" font-size="13.80" font-family='"Liberation Sans", sans-serif' font-style="italic" fill="#2a2a2a" text-anchor="middle" stroke="#2a2a2a" stroke-width="0.25">16</text>
</svg>
<div class="a" style="left:432.5px;top:121.3px;width:1051.0px;height:721.5px;box-shadow:1px 3px 14px rgba(0,0,0,0.32);background:#f0f0f0"></div>
<svg class="a" style="left:0;top:0" width="2000" height="1029" viewBox="0 0 2000 1029">
<rect x="432.50" y="121.30" width="1051.00" height="721.50" fill="#f0f0f0" stroke="#707070" stroke-width="1.3"/>
<rect x="433.20" y="122.00" width="1049.60" height="26.60" fill="#ffffff"/>
<text x="436.80" y="139.60" font-size="14.00" font-family='"Liberation Sans", sans-serif' fill="#1e1e1e" text-anchor="start" textLength="38.01" lengthAdjust="spacingAndGlyphs">Tables</text>
<rect x="441.3" y="172.3" width="1034.70" height="627.20" fill="#f0f0f0"/>
<path d="M441.6 799 V172.6 H1475.5" fill="none" stroke="#e2e2e2" stroke-width="1"/>
<path d="M441.3 799.2 H1475.8 V172.3" fill="none" stroke="#6c6c6c" stroke-width="1.6"/>
<path d="M443.6 171.6 V152.3 H556" fill="none" stroke="#e0e0e0" stroke-width="1"/>
<rect x="555.5" y="151.5" width="1.6" height="19.2" fill="#707070"/>
<path d="M559 171.6 V152.3 H624" fill="none" stroke="#e4e4e4" stroke-width="1"/>
<rect x="733" y="149.5" width="1.6" height="22" fill="#707070"/>
<rect x="627" y="151.8" width="104.4" height="18.2" fill="none" stroke="#3a3a3a" stroke-width="1" stroke-dasharray="1 1"/>
<text x="451.30" y="166.10" font-size="14.00" font-family='"Liberation Serif", serif' fill="#111" text-anchor="start" textLength="96.79" lengthAdjust="spacingAndGlyphs" stroke="#111" stroke-width="0.30">Arrhythmia Table</text>
<text x="566.50" y="166.00" font-size="14.00" font-family='"Liberation Serif", serif' fill="#111" text-anchor="start" textLength="49.53" lengthAdjust="spacingAndGlyphs" stroke="#111" stroke-width="0.30">ST Table</text>
<text x="631.50" y="164.00" font-size="14.00" font-family='"Liberation Serif", serif' fill="#111" text-anchor="start" textLength="91.49" lengthAdjust="spacingAndGlyphs" stroke="#111" stroke-width="0.30">Pacemaker Table</text>
<rect x="452" y="180" width="1009.50" height="607.00" fill="#ffffff"/>
<rect x="452" y="180" width="1009.50" height="20" fill="#f0f0f0"/>
<rect x="451.6" y="179.8" width="1009.90" height="2" fill="#6e6e6e"/>
<rect x="451.6" y="179.8" width="2" height="607.20" fill="#6e6e6e"/>
<rect x="453" y="198.9" width="1008.50" height="2" fill="#7a7a7a"/>
<rect x="567.10" y="181" width="1.8" height="19" fill="#7a7a7a"/>
<rect x="568.90" y="181" width="1" height="19" fill="#ffffff"/>
<rect x="649.70" y="181" width="1.8" height="19" fill="#7a7a7a"/>
<rect x="651.50" y="181" width="1" height="19" fill="#ffffff"/>
<rect x="742.10" y="181" width="1.8" height="19" fill="#7a7a7a"/>
<rect x="743.90" y="181" width="1" height="19" fill="#ffffff"/>
<rect x="825.10" y="181" width="1.8" height="19" fill="#7a7a7a"/>
<rect x="826.90" y="181" width="1" height="19" fill="#ffffff"/>
<rect x="907.70" y="181" width="1.8" height="19" fill="#7a7a7a"/>
<rect x="909.50" y="181" width="1" height="19" fill="#ffffff"/>
<rect x="990.10" y="181" width="1.8" height="19" fill="#7a7a7a"/>
<rect x="991.90" y="181" width="1" height="19" fill="#ffffff"/>
<rect x="1072.50" y="181" width="1.8" height="19" fill="#7a7a7a"/>
<rect x="1074.30" y="181" width="1" height="19" fill="#ffffff"/>
<rect x="1154.70" y="181" width="1.8" height="19" fill="#7a7a7a"/>
<rect x="1156.50" y="181" width="1" height="19" fill="#ffffff"/>
<rect x="1237.50" y="181" width="1.8" height="19" fill="#7a7a7a"/>
<rect x="1239.30" y="181" width="1" height="19" fill="#ffffff"/>
<rect x="1319.70" y="181" width="1.8" height="19" fill="#7a7a7a"/>
<rect x="1321.50" y="181" width="1" height="19" fill="#ffffff"/>
<rect x="1402.30" y="181" width="1.8" height="19" fill="#7a7a7a"/>
<rect x="1404.10" y="181" width="1" height="19" fill="#ffffff"/>
<rect x="454" y="219.05" width="1007.50" height="1" fill="#ececec"/>
<rect x="454" y="236.60" width="1007.50" height="1" fill="#ececec"/>
<rect x="454" y="254.15" width="1007.50" height="1" fill="#ececec"/>
<rect x="454" y="271.70" width="1007.50" height="1" fill="#ececec"/>
<rect x="454" y="289.25" width="1007.50" height="1" fill="#ececec"/>
<rect x="454" y="306.80" width="1007.50" height="1" fill="#ececec"/>
<rect x="454" y="324.35" width="1007.50" height="1" fill="#ececec"/>
<rect x="454" y="341.90" width="1007.50" height="1" fill="#ececec"/>
<rect x="454" y="359.45" width="1007.50" height="1" fill="#ececec"/>
<rect x="454" y="377.00" width="1007.50" height="1" fill="#ececec"/>
<rect x="454" y="394.55" width="1007.50" height="1" fill="#ececec"/>
<rect x="454" y="412.10" width="1007.50" height="1" fill="#ececec"/>
<rect x="454" y="429.65" width="1007.50" height="1" fill="#ececec"/>
<rect x="454" y="447.20" width="1007.50" height="1" fill="#ececec"/>
<rect x="454" y="464.75" width="1007.50" height="1" fill="#ececec"/>
<rect x="454" y="482.30" width="1007.50" height="1" fill="#ececec"/>
<rect x="454" y="499.85" width="1007.50" height="1" fill="#ececec"/>
<rect x="454" y="517.40" width="1007.50" height="1" fill="#ececec"/>
<rect x="454" y="534.95" width="1007.50" height="1" fill="#ececec"/>
<rect x="454" y="552.50" width="1007.50" height="1" fill="#ececec"/>
<rect x="454" y="570.05" width="1007.50" height="1" fill="#ececec"/>
<rect x="454" y="587.60" width="1007.50" height="1" fill="#ececec"/>
<rect x="454" y="605.15" width="1007.50" height="1" fill="#ececec"/>
<rect x="454" y="622.70" width="1007.50" height="1" fill="#ececec"/>
<rect x="454" y="640.25" width="1007.50" height="1" fill="#ececec"/>
<rect x="454" y="657.80" width="1007.50" height="1" fill="#ececec"/>
<rect x="454" y="675.35" width="1007.50" height="1" fill="#ececec"/>
<rect x="454" y="692.90" width="1007.50" height="1" fill="#ececec"/>
<rect x="454" y="710.45" width="1007.50" height="1" fill="#ececec"/>
<rect x="454" y="728.00" width="1007.50" height="1" fill="#ececec"/>
<rect x="454" y="745.55" width="1007.50" height="1" fill="#ececec"/>
<rect x="454" y="763.10" width="1007.50" height="1" fill="#ececec"/>
<rect x="568.80" y="201" width="1" height="569.5" fill="#ececec"/>
<rect x="651.40" y="201" width="1" height="569.5" fill="#ececec"/>
<rect x="743.80" y="201" width="1" height="569.5" fill="#ececec"/>
<rect x="826.80" y="201" width="1" height="569.5" fill="#ececec"/>
<rect x="909.40" y="201" width="1" height="569.5" fill="#ececec"/>
<rect x="991.80" y="201" width="1" height="569.5" fill="#ececec"/>
<rect x="1074.20" y="201" width="1" height="569.5" fill="#ececec"/>
<rect x="1156.40" y="201" width="1" height="569.5" fill="#ececec"/>
<rect x="1239.20" y="201" width="1" height="569.5" fill="#ececec"/>
<rect x="1321.40" y="201" width="1" height="569.5" fill="#ececec"/>
<rect x="1404.00" y="201" width="1" height="569.5" fill="#ececec"/>
<svg x="453" y="180" width="1008.50" height="21" viewBox="453 180 1008.50 21" overflow="hidden">
<text x="459.70" y="196.00" font-size="14.00" font-family='"Liberation Serif", serif' fill="#111" text-anchor="start" textLength="26.70" lengthAdjust="spacingAndGlyphs" stroke="#111" stroke-width="0.30">Time</text>
<text x="644.96" y="196.00" font-size="14.00" font-family='"Liberation Serif", serif' fill="#111" text-anchor="end" textLength="40.16" lengthAdjust="spacingAndGlyphs" stroke="#111" stroke-width="0.30">Av. HR</text>
<text x="737.42" y="196.00" font-size="14.00" font-family='"Liberation Serif", serif' fill="#111" text-anchor="end" textLength="61.28" lengthAdjust="spacingAndGlyphs" stroke="#111" stroke-width="0.30">Av. HR&lt;30</text>
<text x="820.42" y="196.00" font-size="14.00" font-family='"Liberation Serif", serif' fill="#111" text-anchor="end" textLength="47.64" lengthAdjust="spacingAndGlyphs" stroke="#111" stroke-width="0.30">Self beat</text>
<text x="903.02" y="196.00" font-size="14.00" font-family='"Liberation Serif", serif' fill="#111" text-anchor="end" textLength="29.27" lengthAdjust="spacingAndGlyphs" stroke="#111" stroke-width="0.30">DDD</text>
<text x="985.43" y="196.00" font-size="14.00" font-family='"Liberation Serif", serif' fill="#111" text-anchor="end" textLength="61.16" lengthAdjust="spacingAndGlyphs" stroke="#111" stroke-width="0.30">Pacing Fail</text>
<text x="1067.83" y="196.00" font-size="14.00" font-family='"Liberation Serif", serif' fill="#111" text-anchor="end" textLength="43.53" lengthAdjust="spacingAndGlyphs" stroke="#111" stroke-width="0.30">A-Pulse</text>
<text x="1149.98" y="196.00" font-size="14.00" font-family='"Liberation Serif", serif' fill="#111" text-anchor="end" textLength="17.27" lengthAdjust="spacingAndGlyphs" stroke="#111" stroke-width="0.30">AP</text>
<text x="1232.82" y="196.00" font-size="14.00" font-family='"Liberation Serif", serif' fill="#111" text-anchor="end" textLength="29.27" lengthAdjust="spacingAndGlyphs" stroke="#111" stroke-width="0.30">AOO</text>
<text x="1315.01" y="196.00" font-size="14.00" font-family='"Liberation Serif", serif' fill="#111" text-anchor="end" textLength="27.03" lengthAdjust="spacingAndGlyphs" stroke="#111" stroke-width="0.30">AUS</text>
<text x="1397.61" y="196.00" font-size="14.00" font-family='"Liberation Serif", serif' fill="#111" text-anchor="end" textLength="27.03" lengthAdjust="spacingAndGlyphs" stroke="#111" stroke-width="0.30">AOS</text>
<text x="1480.41" y="196.00" font-size="14.00" font-family='"Liberation Serif", serif' fill="#111" text-anchor="end" textLength="42.29" lengthAdjust="spacingAndGlyphs" stroke="#111" stroke-width="0.30">V-Pulse</text>
</svg>
<svg x="453" y="201" width="1008.50" height="569" viewBox="453 201 1008.50 569" overflow="hidden">
<polygon points="461.32,204.80 466.68,204.80 470.70,208.82 470.70,214.18 466.68,218.20 461.32,218.20 457.30,214.18 457.30,208.82" fill="#7a0000"/><polygon points="460.84,204.80 465.56,204.80 469.10,208.34 469.10,213.06 465.56,216.60 460.84,216.60 457.30,213.06 457.30,208.34" fill="#ff0800"/><path d="M459.90 209.80 l2.0 -2.4 l1.4 0.9 l-2.0 2.5 z" fill="#ffd400"/>
<text x="474.80" y="216.60" font-size="14.00" font-family='"Liberation Serif", serif' fill="#111" text-anchor="start" textLength="58.96" lengthAdjust="spacingAndGlyphs" stroke="#111" stroke-width="0.30">10:46-11:46</text>
<polygon points="461.32,222.35 466.68,222.35 470.70,226.37 470.70,231.73 466.68,235.75 461.32,235.75 457.30,231.73 457.30,226.37" fill="#7a0000"/><polygon points="460.84,222.35 465.56,222.35 469.10,225.89 469.10,230.61 465.56,234.15 460.84,234.15 457.30,230.61 457.30,225.89" fill="#ff0800"/><path d="M459.90 227.35 l2.0 -2.4 l1.4 0.9 l-2.0 2.5 z" fill="#ffd400"/>
<text x="474.80" y="234.15" font-size="14.00" font-family='"Liberation Serif", serif' fill="#111" text-anchor="start" textLength="58.96" lengthAdjust="spacingAndGlyphs" stroke="#111" stroke-width="0.30">11:46-12:46</text>
<polygon points="461.32,239.90 466.68,239.90 470.70,243.92 470.70,249.28 466.68,253.30 461.32,253.30 457.30,249.28 457.30,243.92" fill="#7a0000"/><polygon points="460.84,239.90 465.56,239.90 469.10,243.44 469.10,248.16 465.56,251.70 460.84,251.70 457.30,248.16 457.30,243.44" fill="#ff0800"/><path d="M459.90 244.90 l2.0 -2.4 l1.4 0.9 l-2.0 2.5 z" fill="#ffd400"/>
<text x="474.80" y="251.70" font-size="14.00" font-family='"Liberation Serif", serif' fill="#111" text-anchor="start" textLength="59.41" lengthAdjust="spacingAndGlyphs" stroke="#111" stroke-width="0.30">12:46-13:46</text>
<polygon points="461.32,257.45 466.68,257.45 470.70,261.47 470.70,266.83 466.68,270.85 461.32,270.85 457.30,266.83 457.30,261.47" fill="#7a0000"/><polygon points="460.84,257.45 465.56,257.45 469.10,260.99 469.10,265.71 465.56,269.25 460.84,269.25 457.30,265.71 457.30,260.99" fill="#ff0800"/><path d="M459.90 262.45 l2.0 -2.4 l1.4 0.9 l-2.0 2.5 z" fill="#ffd400"/>
<text x="474.80" y="269.25" font-size="14.00" font-family='"Liberation Serif", serif' fill="#111" text-anchor="start" textLength="59.41" lengthAdjust="spacingAndGlyphs" stroke="#111" stroke-width="0.30">13:46-14:46</text>
<polygon points="461.32,275.00 466.68,275.00 470.70,279.02 470.70,284.38 466.68,288.40 461.32,288.40 457.30,284.38 457.30,279.02" fill="#7a0000"/><polygon points="460.84,275.00 465.56,275.00 469.10,278.54 469.10,283.26 465.56,286.80 460.84,286.80 457.30,283.26 457.30,278.54" fill="#ff0800"/><path d="M459.90 280.00 l2.0 -2.4 l1.4 0.9 l-2.0 2.5 z" fill="#ffd400"/>
<text x="474.80" y="286.80" font-size="14.00" font-family='"Liberation Serif", serif' fill="#111" text-anchor="start" textLength="59.41" lengthAdjust="spacingAndGlyphs" stroke="#111" stroke-width="0.30">14:46-15:46</text>
<polygon points="461.32,292.55 466.68,292.55 470.70,296.57 470.70,301.93 466.68,305.95 461.32,305.95 457.30,301.93 457.30,296.57" fill="#7a0000"/><polygon points="460.84,292.55 465.56,292.55 469.10,296.09 469.10,300.81 465.56,304.35 460.84,304.35 457.30,300.81 457.30,296.09" fill="#ff0800"/><path d="M459.90 297.55 l2.0 -2.4 l1.4 0.9 l-2.0 2.5 z" fill="#ffd400"/>
<text x="474.80" y="304.35" font-size="14.00" font-family='"Liberation Serif", serif' fill="#111" text-anchor="start" textLength="59.41" lengthAdjust="spacingAndGlyphs" stroke="#111" stroke-width="0.30">15:46-16:46</text>
<polygon points="461.32,310.10 466.68,310.10 470.70,314.12 470.70,319.48 466.68,323.50 461.32,323.50 457.30,319.48 457.30,314.12" fill="#7a0000"/><polygon points="460.84,310.10 465.56,310.10 469.10,313.64 469.10,318.36 465.56,321.90 460.84,321.90 457.30,318.36 457.30,313.64" fill="#ff0800"/><path d="M459.90 315.10 l2.0 -2.4 l1.4 0.9 l-2.0 2.5 z" fill="#ffd400"/>
<text x="474.80" y="321.90" font-size="14.00" font-family='"Liberation Serif", serif' fill="#111" text-anchor="start" textLength="59.41" lengthAdjust="spacingAndGlyphs" stroke="#111" stroke-width="0.30">16:46-17:46</text>
<polygon points="461.32,327.65 466.68,327.65 470.70,331.67 470.70,337.03 466.68,341.05 461.32,341.05 457.30,337.03 457.30,331.67" fill="#7a0000"/><polygon points="460.84,327.65 465.56,327.65 469.10,331.19 469.10,335.91 465.56,339.45 460.84,339.45 457.30,335.91 457.30,331.19" fill="#ff0800"/><path d="M459.90 332.65 l2.0 -2.4 l1.4 0.9 l-2.0 2.5 z" fill="#ffd400"/>
<text x="474.80" y="339.45" font-size="14.00" font-family='"Liberation Serif", serif' fill="#111" text-anchor="start" textLength="59.41" lengthAdjust="spacingAndGlyphs" stroke="#111" stroke-width="0.30">17:46-18:46</text>
<polygon points="461.32,345.20 466.68,345.20 470.70,349.22 470.70,354.58 466.68,358.60 461.32,358.60 457.30,354.58 457.30,349.22" fill="#7a0000"/><polygon points="460.84,345.20 465.56,345.20 469.10,348.74 469.10,353.46 465.56,357.00 460.84,357.00 457.30,353.46 457.30,348.74" fill="#ff0800"/><path d="M459.90 350.20 l2.0 -2.4 l1.4 0.9 l-2.0 2.5 z" fill="#ffd400"/>
<text x="474.80" y="357.00" font-size="14.00" font-family='"Liberation Serif", serif' fill="#111" text-anchor="start" textLength="59.41" lengthAdjust="spacingAndGlyphs" stroke="#111" stroke-width="0.30">18:46-19:46</text>
<polygon points="461.32,362.75 466.68,362.75 470.70,366.77 470.70,372.13 466.68,376.15 461.32,376.15 457.30,372.13 457.30,366.77" fill="#7a0000"/><polygon points="460.84,362.75 465.56,362.75 469.10,366.29 469.10,371.01 465.56,374.55 460.84,374.55 457.30,371.01 457.30,366.29" fill="#ff0800"/><path d="M459.90 367.75 l2.0 -2.4 l1.4 0.9 l-2.0 2.5 z" fill="#ffd400"/>
<text x="474.80" y="374.55" font-size="14.00" font-family='"Liberation Serif", serif' fill="#111" text-anchor="start" textLength="59.41" lengthAdjust="spacingAndGlyphs" stroke="#111" stroke-width="0.30">19:46-20:46</text>
<polygon points="461.32,380.30 466.68,380.30 470.70,384.32 470.70,389.68 466.68,393.70 461.32,393.70 457.30,389.68 457.30,384.32" fill="#7a0000"/><polygon points="460.84,380.30 465.56,380.30 469.10,383.84 469.10,388.56 465.56,392.10 460.84,392.10 457.30,388.56 457.30,383.84" fill="#ff0800"/><path d="M459.90 385.30 l2.0 -2.4 l1.4 0.9 l-2.0 2.5 z" fill="#ffd400"/>
<text x="474.80" y="392.10" font-size="14.00" font-family='"Liberation Serif", serif' fill="#111" text-anchor="start" textLength="59.41" lengthAdjust="spacingAndGlyphs" stroke="#111" stroke-width="0.30">20:46-21:46</text>
<polygon points="461.32,397.85 466.68,397.85 470.70,401.87 470.70,407.23 466.68,411.25 461.32,411.25 457.30,407.23 457.30,401.87" fill="#7a0000"/><polygon points="460.84,397.85 465.56,397.85 469.10,401.39 469.10,406.11 465.56,409.65 460.84,409.65 457.30,406.11 457.30,401.39" fill="#ff0800"/><path d="M459.90 402.85 l2.0 -2.4 l1.4 0.9 l-2.0 2.5 z" fill="#ffd400"/>
<text x="474.80" y="409.65" font-size="14.00" font-family='"Liberation Serif", serif' fill="#111" text-anchor="start" textLength="59.41" lengthAdjust="spacingAndGlyphs" stroke="#111" stroke-width="0.30">21:46-22:46</text>
<polygon points="461.32,415.40 466.68,415.40 470.70,419.42 470.70,424.78 466.68,428.80 461.32,428.80 457.30,424.78 457.30,419.42" fill="#7a0000"/><polygon points="460.84,415.40 465.56,415.40 469.10,418.94 469.10,423.66 465.56,427.20 460.84,427.20 457.30,423.66 457.30,418.94" fill="#ff0800"/><path d="M459.90 420.40 l2.0 -2.4 l1.4 0.9 l-2.0 2.5 z" fill="#ffd400"/>
<text x="474.80" y="427.20" font-size="14.00" font-family='"Liberation Serif", serif' fill="#111" text-anchor="start" textLength="59.41" lengthAdjust="spacingAndGlyphs" stroke="#111" stroke-width="0.30">22:46-23:46</text>
<polygon points="461.32,432.95 466.68,432.95 470.70,436.97 470.70,442.33 466.68,446.35 461.32,446.35 457.30,442.33 457.30,436.97" fill="#7a0000"/><polygon points="460.84,432.95 465.56,432.95 469.10,436.49 469.10,441.21 465.56,444.75 460.84,444.75 457.30,441.21 457.30,436.49" fill="#ff0800"/><path d="M459.90 437.95 l2.0 -2.4 l1.4 0.9 l-2.0 2.5 z" fill="#ffd400"/>
<text x="474.80" y="444.75" font-size="14.00" font-family='"Liberation Serif", serif' fill="#111" text-anchor="start" textLength="59.41" lengthAdjust="spacingAndGlyphs" stroke="#111" stroke-width="0.30">23:46-00:46</text>
<polygon points="461.32,450.50 466.68,450.50 470.70,454.52 470.70,459.88 466.68,463.90 461.32,463.90 457.30,459.88 457.30,454.52" fill="#7a0000"/><polygon points="460.84,450.50 465.56,450.50 469.10,454.04 469.10,458.76 465.56,462.30 460.84,462.30 457.30,458.76 457.30,454.04" fill="#ff0800"/><path d="M459.90 455.50 l2.0 -2.4 l1.4 0.9 l-2.0 2.5 z" fill="#ffd400"/>
<text x="474.80" y="462.30" font-size="14.00" font-family='"Liberation Serif", serif' fill="#111" text-anchor="start" textLength="59.41" lengthAdjust="spacingAndGlyphs" stroke="#111" stroke-width="0.30">00:46-01:46</text>
<polygon points="461.32,468.05 466.68,468.05 470.70,472.07 470.70,477.43 466.68,481.45 461.32,481.45 457.30,477.43 457.30,472.07" fill="#7a0000"/><polygon points="460.84,468.05 465.56,468.05 469.10,471.59 469.10,476.31 465.56,479.85 460.84,479.85 457.30,476.31 457.30,471.59" fill="#ff0800"/><path d="M459.90 473.05 l2.0 -2.4 l1.4 0.9 l-2.0 2.5 z" fill="#ffd400"/>
<text x="474.80" y="479.85" font-size="14.00" font-family='"Liberation Serif", serif' fill="#111" text-anchor="start" textLength="59.41" lengthAdjust="spacingAndGlyphs" stroke="#111" stroke-width="0.30">01:46-02:46</text>
<polygon points="461.32,485.60 466.68,485.60 470.70,489.62 470.70,494.98 466.68,499.00 461.32,499.00 457.30,494.98 457.30,489.62" fill="#7a0000"/><polygon points="460.84,485.60 465.56,485.60 469.10,489.14 469.10,493.86 465.56,497.40 460.84,497.40 457.30,493.86 457.30,489.14" fill="#ff0800"/><path d="M459.90 490.60 l2.0 -2.4 l1.4 0.9 l-2.0 2.5 z" fill="#ffd400"/>
<text x="474.80" y="497.40" font-size="14.00" font-family='"Liberation Serif", serif' fill="#111" text-anchor="start" textLength="59.41" lengthAdjust="spacingAndGlyphs" stroke="#111" stroke-width="0.30">02:46-03:46</text>
<polygon points="461.32,503.15 466.68,503.15 470.70,507.17 470.70,512.53 466.68,516.55 461.32,516.55 457.30,512.53 457.30,507.17" fill="#7a0000"/><polygon points="460.84,503.15 465.56,503.15 469.10,506.69 469.10,511.41 465.56,514.95 460.84,514.95 457.30,511.41 457.30,506.69" fill="#ff0800"/><path d="M459.90 508.15 l2.0 -2.4 l1.4 0.9 l-2.0 2.5 z" fill="#ffd400"/>
<text x="474.80" y="514.95" font-size="14.00" font-family='"Liberation Serif", serif' fill="#111" text-anchor="start" textLength="59.41" lengthAdjust="spacingAndGlyphs" stroke="#111" stroke-width="0.30">03:46-04:46</text>
<polygon points="461.32,520.70 466.68,520.70 470.70,524.72 470.70,530.08 466.68,534.10 461.32,534.10 457.30,530.08 457.30,524.72" fill="#7a0000"/><polygon points="460.84,520.70 465.56,520.70 469.10,524.24 469.10,528.96 465.56,532.50 460.84,532.50 457.30,528.96 457.30,524.24" fill="#ff0800"/><path d="M459.90 525.70 l2.0 -2.4 l1.4 0.9 l-2.0 2.5 z" fill="#ffd400"/>
<text x="474.80" y="532.50" font-size="14.00" font-family='"Liberation Serif", serif' fill="#111" text-anchor="start" textLength="59.41" lengthAdjust="spacingAndGlyphs" stroke="#111" stroke-width="0.30">04:46-05:46</text>
<polygon points="461.32,538.25 466.68,538.25 470.70,542.27 470.70,547.63 466.68,551.65 461.32,551.65 457.30,547.63 457.30,542.27" fill="#7a0000"/><polygon points="460.84,538.25 465.56,538.25 469.10,541.79 469.10,546.51 465.56,550.05 460.84,550.05 457.30,546.51 457.30,541.79" fill="#ff0800"/><path d="M459.90 543.25 l2.0 -2.4 l1.4 0.9 l-2.0 2.5 z" fill="#ffd400"/>
<text x="474.80" y="550.05" font-size="14.00" font-family='"Liberation Serif", serif' fill="#111" text-anchor="start" textLength="59.41" lengthAdjust="spacingAndGlyphs" stroke="#111" stroke-width="0.30">05:46-06:46</text>
<polygon points="461.32,555.80 466.68,555.80 470.70,559.82 470.70,565.18 466.68,569.20 461.32,569.20 457.30,565.18 457.30,559.82" fill="#7a0000"/><polygon points="460.84,555.80 465.56,555.80 469.10,559.34 469.10,564.06 465.56,567.60 460.84,567.60 457.30,564.06 457.30,559.34" fill="#ff0800"/><path d="M459.90 560.80 l2.0 -2.4 l1.4 0.9 l-2.0 2.5 z" fill="#ffd400"/>
<text x="474.80" y="567.60" font-size="14.00" font-family='"Liberation Serif", serif' fill="#111" text-anchor="start" textLength="59.41" lengthAdjust="spacingAndGlyphs" stroke="#111" stroke-width="0.30">06:46-07:46</text>
<polygon points="461.32,573.35 466.68,573.35 470.70,577.37 470.70,582.73 466.68,586.75 461.32,586.75 457.30,582.73 457.30,577.37" fill="#7a0000"/><polygon points="460.84,573.35 465.56,573.35 469.10,576.89 469.10,581.61 465.56,585.15 460.84,585.15 457.30,581.61 457.30,576.89" fill="#ff0800"/><path d="M459.90 578.35 l2.0 -2.4 l1.4 0.9 l-2.0 2.5 z" fill="#ffd400"/>
<text x="474.80" y="585.15" font-size="14.00" font-family='"Liberation Serif", serif' fill="#111" text-anchor="start" textLength="59.41" lengthAdjust="spacingAndGlyphs" stroke="#111" stroke-width="0.30">07:46-08:46</text>
<polygon points="461.32,590.90 466.68,590.90 470.70,594.92 470.70,600.28 466.68,604.30 461.32,604.30 457.30,600.28 457.30,594.92" fill="#7a0000"/><polygon points="460.84,590.90 465.56,590.90 469.10,594.44 469.10,599.16 465.56,602.70 460.84,602.70 457.30,599.16 457.30,594.44" fill="#ff0800"/><path d="M459.90 595.90 l2.0 -2.4 l1.4 0.9 l-2.0 2.5 z" fill="#ffd400"/>
<text x="474.80" y="602.70" font-size="14.00" font-family='"Liberation Serif", serif' fill="#111" text-anchor="start" textLength="59.41" lengthAdjust="spacingAndGlyphs" stroke="#111" stroke-width="0.30">08:46-09:46</text>
<polygon points="461.32,608.45 466.68,608.45 470.70,612.47 470.70,617.83 466.68,621.85 461.32,621.85 457.30,617.83 457.30,612.47" fill="#7a0000"/><polygon points="460.84,608.45 465.56,608.45 469.10,611.99 469.10,616.71 465.56,620.25 460.84,620.25 457.30,616.71 457.30,611.99" fill="#ff0800"/><path d="M459.90 613.45 l2.0 -2.4 l1.4 0.9 l-2.0 2.5 z" fill="#ffd400"/>
<text x="474.80" y="620.25" font-size="14.00" font-family='"Liberation Serif", serif' fill="#111" text-anchor="start" textLength="59.41" lengthAdjust="spacingAndGlyphs" stroke="#111" stroke-width="0.30">09:46-10:46</text>
<polygon points="461.32,626.00 466.68,626.00 470.70,630.02 470.70,635.38 466.68,639.40 461.32,639.40 457.30,635.38 457.30,630.02" fill="#7a0000"/><polygon points="460.84,626.00 465.56,626.00 469.10,629.54 469.10,634.26 465.56,637.80 460.84,637.80 457.30,634.26 457.30,629.54" fill="#ff0800"/><path d="M459.90 631.00 l2.0 -2.4 l1.4 0.9 l-2.0 2.5 z" fill="#ffd400"/>
<text x="474.80" y="637.80" font-size="14.00" font-family='"Liberation Serif", serif' fill="#111" text-anchor="start" textLength="59.41" lengthAdjust="spacingAndGlyphs" stroke="#111" stroke-width="0.30">10:46-10:51</text>
<polygon points="461.32,643.55 466.68,643.55 470.70,647.57 470.70,652.93 466.68,656.95 461.32,656.95 457.30,652.93 457.30,647.57" fill="#7a0000"/><polygon points="460.84,643.55 465.56,643.55 469.10,647.09 469.10,651.81 465.56,655.35 460.84,655.35 457.30,651.81 457.30,647.09" fill="#ff0800"/><path d="M459.90 648.55 l2.0 -2.4 l1.4 0.9 l-2.0 2.5 z" fill="#ffd400"/>
<text x="474.80" y="655.35" font-size="14.00" font-family='"Liberation Serif", serif' fill="#111" text-anchor="start" textLength="16.99" lengthAdjust="spacingAndGlyphs" stroke="#111" stroke-width="0.30">All</text>
<polygon points="461.32,661.10 466.68,661.10 470.70,665.12 470.70,670.48 466.68,674.50 461.32,674.50 457.30,670.48 457.30,665.12" fill="#7a0000"/><polygon points="460.84,661.10 465.56,661.10 469.10,664.64 469.10,669.36 465.56,672.90 460.84,672.90 457.30,669.36 457.30,664.64" fill="#ff0800"/><path d="M459.90 666.10 l2.0 -2.4 l1.4 0.9 l-2.0 2.5 z" fill="#ffd400"/>
<text x="474.80" y="672.90" font-size="14.00" font-family='"Liberation Serif", serif' fill="#111" text-anchor="start" textLength="23.64" lengthAdjust="spacingAndGlyphs" stroke="#111" stroke-width="0.30">Unit</text>
<text x="645.00" y="216.60" font-size="14.00" font-family='"Liberation Serif", serif' fill="#111" text-anchor="end" textLength="6.23" lengthAdjust="spacingAndGlyphs" stroke="#111" stroke-width="0.30">0</text>
<text x="645.00" y="234.15" font-size="14.00" font-family='"Liberation Serif", serif' fill="#111" text-anchor="end" textLength="6.23" lengthAdjust="spacingAndGlyphs" stroke="#111" stroke-width="0.30">0</text>
<text x="645.00" y="251.70" font-size="14.00" font-family='"Liberation Serif", serif' fill="#111" text-anchor="end" textLength="6.23" lengthAdjust="spacingAndGlyphs" stroke="#111" stroke-width="0.30">0</text>
<text x="645.00" y="269.25" font-size="14.00" font-family='"Liberation Serif", serif' fill="#111" text-anchor="end" textLength="6.23" lengthAdjust="spacingAndGlyphs" stroke="#111" stroke-width="0.30">0</text>
<text x="645.00" y="286.80" font-size="14.00" font-family='"Liberation Serif", serif' fill="#111" text-anchor="end" textLength="6.23" lengthAdjust="spacingAndGlyphs" stroke="#111" stroke-width="0.30">0</text>
<text x="645.00" y="304.35" font-size="14.00" font-family='"Liberation Serif", serif' fill="#111" text-anchor="end" textLength="6.23" lengthAdjust="spacingAndGlyphs" stroke="#111" stroke-width="0.30">0</text>
<text x="645.00" y="321.90" font-size="14.00" font-family='"Liberation Serif", serif' fill="#111" text-anchor="end" textLength="6.23" lengthAdjust="spacingAndGlyphs" stroke="#111" stroke-width="0.30">0</text>
<text x="645.00" y="339.45" font-size="14.00" font-family='"Liberation Serif", serif' fill="#111" text-anchor="end" textLength="6.23" lengthAdjust="spacingAndGlyphs" stroke="#111" stroke-width="0.30">0</text>
<text x="645.00" y="357.00" font-size="14.00" font-family='"Liberation Serif", serif' fill="#111" text-anchor="end" textLength="6.23" lengthAdjust="spacingAndGlyphs" stroke="#111" stroke-width="0.30">0</text>
<text x="645.00" y="374.55" font-size="14.00" font-family='"Liberation Serif", serif' fill="#111" text-anchor="end" textLength="6.23" lengthAdjust="spacingAndGlyphs" stroke="#111" stroke-width="0.30">0</text>
<text x="645.00" y="392.10" font-size="14.00" font-family='"Liberation Serif", serif' fill="#111" text-anchor="end" textLength="6.23" lengthAdjust="spacingAndGlyphs" stroke="#111" stroke-width="0.30">0</text>
<text x="645.00" y="409.65" font-size="14.00" font-family='"Liberation Serif", serif' fill="#111" text-anchor="end" textLength="6.23" lengthAdjust="spacingAndGlyphs" stroke="#111" stroke-width="0.30">0</text>
<text x="645.00" y="427.20" font-size="14.00" font-family='"Liberation Serif", serif' fill="#111" text-anchor="end" textLength="6.23" lengthAdjust="spacingAndGlyphs" stroke="#111" stroke-width="0.30">0</text>
<text x="645.00" y="444.75" font-size="14.00" font-family='"Liberation Serif", serif' fill="#111" text-anchor="end" textLength="6.23" lengthAdjust="spacingAndGlyphs" stroke="#111" stroke-width="0.30">0</text>
<text x="645.00" y="462.30" font-size="14.00" font-family='"Liberation Serif", serif' fill="#111" text-anchor="end" textLength="6.23" lengthAdjust="spacingAndGlyphs" stroke="#111" stroke-width="0.30">0</text>
<text x="645.00" y="479.85" font-size="14.00" font-family='"Liberation Serif", serif' fill="#111" text-anchor="end" textLength="6.23" lengthAdjust="spacingAndGlyphs" stroke="#111" stroke-width="0.30">0</text>
<text x="645.00" y="497.40" font-size="14.00" font-family='"Liberation Serif", serif' fill="#111" text-anchor="end" textLength="6.23" lengthAdjust="spacingAndGlyphs" stroke="#111" stroke-width="0.30">0</text>
<text x="645.00" y="514.95" font-size="14.00" font-family='"Liberation Serif", serif' fill="#111" text-anchor="end" textLength="6.23" lengthAdjust="spacingAndGlyphs" stroke="#111" stroke-width="0.30">0</text>
<text x="645.00" y="532.50" font-size="14.00" font-family='"Liberation Serif", serif' fill="#111" text-anchor="end" textLength="6.23" lengthAdjust="spacingAndGlyphs" stroke="#111" stroke-width="0.30">0</text>
<text x="645.00" y="550.05" font-size="14.00" font-family='"Liberation Serif", serif' fill="#111" text-anchor="end" textLength="6.23" lengthAdjust="spacingAndGlyphs" stroke="#111" stroke-width="0.30">0</text>
<text x="645.00" y="567.60" font-size="14.00" font-family='"Liberation Serif", serif' fill="#111" text-anchor="end" textLength="6.23" lengthAdjust="spacingAndGlyphs" stroke="#111" stroke-width="0.30">0</text>
<text x="645.00" y="585.15" font-size="14.00" font-family='"Liberation Serif", serif' fill="#111" text-anchor="end" textLength="6.23" lengthAdjust="spacingAndGlyphs" stroke="#111" stroke-width="0.30">0</text>
<text x="645.00" y="602.70" font-size="14.00" font-family='"Liberation Serif", serif' fill="#111" text-anchor="end" textLength="6.23" lengthAdjust="spacingAndGlyphs" stroke="#111" stroke-width="0.30">0</text>
<text x="645.00" y="620.25" font-size="14.00" font-family='"Liberation Serif", serif' fill="#111" text-anchor="end" textLength="6.23" lengthAdjust="spacingAndGlyphs" stroke="#111" stroke-width="0.30">0</text>
<text x="645.00" y="637.80" font-size="14.00" font-family='"Liberation Serif", serif' fill="#111" text-anchor="end" textLength="6.23" lengthAdjust="spacingAndGlyphs" stroke="#111" stroke-width="0.30">0</text>
<text x="645.00" y="655.35" font-size="14.00" font-family='"Liberation Serif", serif' fill="#111" text-anchor="end" textLength="6.23" lengthAdjust="spacingAndGlyphs" stroke="#111" stroke-width="0.30">0</text>
<text x="644.97" y="672.90" font-size="14.00" font-family='"Liberation Serif", serif' fill="#111" text-anchor="end" textLength="22.15" lengthAdjust="spacingAndGlyphs" stroke="#111" stroke-width="0.30">bpm</text>
<text x="737.40" y="216.60" font-size="14.00" font-family='"Liberation Serif", serif' fill="#111" text-anchor="end" textLength="6.23" lengthAdjust="spacingAndGlyphs" stroke="#111" stroke-width="0.30">0</text>
<text x="737.40" y="234.15" font-size="14.00" font-family='"Liberation Serif", serif' fill="#111" text-anchor="end" textLength="6.23" lengthAdjust="spacingAndGlyphs" stroke="#111" stroke-width="0.30">0</text>
<text x="737.40" y="251.70" font-size="14.00" font-family='"Liberation Serif", serif' fill="#111" text-anchor="end" textLength="6.23" lengthAdjust="spacingAndGlyphs" stroke="#111" stroke-width="0.30">0</text>
<text x="737.40" y="269.25" font-size="14.00" font-family='"Liberation Serif", serif' fill="#111" text-anchor="end" textLength="6.23" lengthAdjust="spacingAndGlyphs" stroke="#111" stroke-width="0.30">0</text>
<text x="737.40" y="286.80" font-size="14.00" font-family='"Liberation Serif", serif' fill="#111" text-anchor="end" textLength="6.23" lengthAdjust="spacingAndGlyphs" stroke="#111" stroke-width="0.30">0</text>
<text x="737.40" y="304.35" font-size="14.00" font-family='"Liberation Serif", serif' fill="#111" text-anchor="end" textLength="6.23" lengthAdjust="spacingAndGlyphs" stroke="#111" stroke-width="0.30">0</text>
<text x="737.40" y="321.90" font-size="14.00" font-family='"Liberation Serif", serif' fill="#111" text-anchor="end" textLength="6.23" lengthAdjust="spacingAndGlyphs" stroke="#111" stroke-width="0.30">0</text>
<text x="737.40" y="339.45" font-size="14.00" font-family='"Liberation Serif", serif' fill="#111" text-anchor="end" textLength="6.23" lengthAdjust="spacingAndGlyphs" stroke="#111" stroke-width="0.30">0</text>
<text x="737.40" y="357.00" font-size="14.00" font-family='"Liberation Serif", serif' fill="#111" text-anchor="end" textLength="6.23" lengthAdjust="spacingAndGlyphs" stroke="#111" stroke-width="0.30">0</text>
<text x="737.40" y="374.55" font-size="14.00" font-family='"Liberation Serif", serif' fill="#111" text-anchor="end" textLength="6.23" lengthAdjust="spacingAndGlyphs" stroke="#111" stroke-width="0.30">0</text>
<text x="737.40" y="392.10" font-size="14.00" font-family='"Liberation Serif", serif' fill="#111" text-anchor="end" textLength="6.23" lengthAdjust="spacingAndGlyphs" stroke="#111" stroke-width="0.30">0</text>
<text x="737.40" y="409.65" font-size="14.00" font-family='"Liberation Serif", serif' fill="#111" text-anchor="end" textLength="6.23" lengthAdjust="spacingAndGlyphs" stroke="#111" stroke-width="0.30">0</text>
<text x="737.40" y="427.20" font-size="14.00" font-family='"Liberation Serif", serif' fill="#111" text-anchor="end" textLength="6.23" lengthAdjust="spacingAndGlyphs" stroke="#111" stroke-width="0.30">0</text>
<text x="737.40" y="444.75" font-size="14.00" font-family='"Liberation Serif", serif' fill="#111" text-anchor="end" textLength="6.23" lengthAdjust="spacingAndGlyphs" stroke="#111" stroke-width="0.30">0</text>
<text x="737.40" y="462.30" font-size="14.00" font-family='"Liberation Serif", serif' fill="#111" text-anchor="end" textLength="6.23" lengthAdjust="spacingAndGlyphs" stroke="#111" stroke-width="0.30">0</text>
<text x="737.40" y="479.85" font-size="14.00" font-family='"Liberation Serif", serif' fill="#111" text-anchor="end" textLength="6.23" lengthAdjust="spacingAndGlyphs" stroke="#111" stroke-width="0.30">0</text>
<text x="737.40" y="497.40" font-size="14.00" font-family='"Liberation Serif", serif' fill="#111" text-anchor="end" textLength="6.23" lengthAdjust="spacingAndGlyphs" stroke="#111" stroke-width="0.30">0</text>
<text x="737.40" y="514.95" font-size="14.00" font-family='"Liberation Serif", serif' fill="#111" text-anchor="end" textLength="6.23" lengthAdjust="spacingAndGlyphs" stroke="#111" stroke-width="0.30">0</text>
<text x="737.40" y="532.50" font-size="14.00" font-family='"Liberation Serif", serif' fill="#111" text-anchor="end" textLength="6.23" lengthAdjust="spacingAndGlyphs" stroke="#111" stroke-width="0.30">0</text>
<text x="737.40" y="550.05" font-size="14.00" font-family='"Liberation Serif", serif' fill="#111" text-anchor="end" textLength="6.23" lengthAdjust="spacingAndGlyphs" stroke="#111" stroke-width="0.30">0</text>
<text x="737.40" y="567.60" font-size="14.00" font-family='"Liberation Serif", serif' fill="#111" text-anchor="end" textLength="6.23" lengthAdjust="spacingAndGlyphs" stroke="#111" stroke-width="0.30">0</text>
<text x="737.40" y="585.15" font-size="14.00" font-family='"Liberation Serif", serif' fill="#111" text-anchor="end" textLength="6.23" lengthAdjust="spacingAndGlyphs" stroke="#111" stroke-width="0.30">0</text>
<text x="737.40" y="602.70" font-size="14.00" font-family='"Liberation Serif", serif' fill="#111" text-anchor="end" textLength="6.23" lengthAdjust="spacingAndGlyphs" stroke="#111" stroke-width="0.30">0</text>
<text x="737.40" y="620.25" font-size="14.00" font-family='"Liberation Serif", serif' fill="#111" text-anchor="end" textLength="6.23" lengthAdjust="spacingAndGlyphs" stroke="#111" stroke-width="0.30">0</text>
<text x="737.40" y="637.80" font-size="14.00" font-family='"Liberation Serif", serif' fill="#111" text-anchor="end" textLength="6.23" lengthAdjust="spacingAndGlyphs" stroke="#111" stroke-width="0.30">0</text>
<text x="737.40" y="655.35" font-size="14.00" font-family='"Liberation Serif", serif' fill="#111" text-anchor="end" textLength="6.23" lengthAdjust="spacingAndGlyphs" stroke="#111" stroke-width="0.30">0</text>
<text x="737.40" y="672.90" font-size="14.00" font-family='"Liberation Serif", serif' fill="#111" text-anchor="end" textLength="6.23" lengthAdjust="spacingAndGlyphs" stroke="#111" stroke-width="0.30">n</text>
<text x="820.40" y="216.60" font-size="14.00" font-family='"Liberation Serif", serif' fill="#111" text-anchor="end" textLength="6.23" lengthAdjust="spacingAndGlyphs" stroke="#111" stroke-width="0.30">2</text>
<text x="820.40" y="234.15" font-size="14.00" font-family='"Liberation Serif", serif' fill="#111" text-anchor="end" textLength="6.23" lengthAdjust="spacingAndGlyphs" stroke="#111" stroke-width="0.30">0</text>
<text x="820.40" y="251.70" font-size="14.00" font-family='"Liberation Serif", serif' fill="#111" text-anchor="end" textLength="6.23" lengthAdjust="spacingAndGlyphs" stroke="#111" stroke-width="0.30">0</text>
<text x="820.40" y="269.25" font-size="14.00" font-family='"Liberation Serif", serif' fill="#111" text-anchor="end" textLength="6.23" lengthAdjust="spacingAndGlyphs" stroke="#111" stroke-width="0.30">1</text>
<text x="820.40" y="286.80" font-size="14.00" font-family='"Liberation Serif", serif' fill="#111" text-anchor="end" textLength="6.23" lengthAdjust="spacingAndGlyphs" stroke="#111" stroke-width="0.30">0</text>
<text x="820.40" y="304.35" font-size="14.00" font-family='"Liberation Serif", serif' fill="#111" text-anchor="end" textLength="6.23" lengthAdjust="spacingAndGlyphs" stroke="#111" stroke-width="0.30">0</text>
<text x="820.40" y="321.90" font-size="14.00" font-family='"Liberation Serif", serif' fill="#111" text-anchor="end" textLength="6.23" lengthAdjust="spacingAndGlyphs" stroke="#111" stroke-width="0.30">0</text>
<text x="820.40" y="339.45" font-size="14.00" font-family='"Liberation Serif", serif' fill="#111" text-anchor="end" textLength="6.23" lengthAdjust="spacingAndGlyphs" stroke="#111" stroke-width="0.30">0</text>
<text x="820.40" y="357.00" font-size="14.00" font-family='"Liberation Serif", serif' fill="#111" text-anchor="end" textLength="6.23" lengthAdjust="spacingAndGlyphs" stroke="#111" stroke-width="0.30">0</text>
<text x="820.40" y="374.55" font-size="14.00" font-family='"Liberation Serif", serif' fill="#111" text-anchor="end" textLength="6.23" lengthAdjust="spacingAndGlyphs" stroke="#111" stroke-width="0.30">0</text>
<text x="820.40" y="392.10" font-size="14.00" font-family='"Liberation Serif", serif' fill="#111" text-anchor="end" textLength="6.23" lengthAdjust="spacingAndGlyphs" stroke="#111" stroke-width="0.30">0</text>
<text x="820.40" y="409.65" font-size="14.00" font-family='"Liberation Serif", serif' fill="#111" text-anchor="end" textLength="6.23" lengthAdjust="spacingAndGlyphs" stroke="#111" stroke-width="0.30">0</text>
<text x="820.40" y="427.20" font-size="14.00" font-family='"Liberation Serif", serif' fill="#111" text-anchor="end" textLength="6.23" lengthAdjust="spacingAndGlyphs" stroke="#111" stroke-width="0.30">0</text>
<text x="820.40" y="444.75" font-size="14.00" font-family='"Liberation Serif", serif' fill="#111" text-anchor="end" textLength="6.23" lengthAdjust="spacingAndGlyphs" stroke="#111" stroke-width="0.30">0</text>
<text x="820.40" y="462.30" font-size="14.00" font-family='"Liberation Serif", serif' fill="#111" text-anchor="end" textLength="6.23" lengthAdjust="spacingAndGlyphs" stroke="#111" stroke-width="0.30">0</text>
<text x="820.40" y="479.85" font-size="14.00" font-family='"Liberation Serif", serif' fill="#111" text-anchor="end" textLength="6.23" lengthAdjust="spacingAndGlyphs" stroke="#111" stroke-width="0.30">0</text>
<text x="820.40" y="497.40" font-size="14.00" font-family='"Liberation Serif", serif' fill="#111" text-anchor="end" textLength="6.23" lengthAdjust="spacingAndGlyphs" stroke="#111" stroke-width="0.30">0</text>
<text x="820.40" y="514.95" font-size="14.00" font-family='"Liberation Serif", serif' fill="#111" text-anchor="end" textLength="6.23" lengthAdjust="spacingAndGlyphs" stroke="#111" stroke-width="0.30">0</text>
<text x="820.40" y="532.50" font-size="14.00" font-family='"Liberation Serif", serif' fill="#111" text-anchor="end" textLength="6.23" lengthAdjust="spacingAndGlyphs" stroke="#111" stroke-width="0.30">0</text>
<text x="820.40" y="550.05" font-size="14.00" font-family='"Liberation Serif", serif' fill="#111" text-anchor="end" textLength="6.23" lengthAdjust="spacingAndGlyphs" stroke="#111" stroke-width="0.30">0</text>
<text x="820.40" y="567.60" font-size="14.00" font-family='"Liberation Serif", serif' fill="#111" text-anchor="end" textLength="6.23" lengthAdjust="spacingAndGlyphs" stroke="#111" stroke-width="0.30">0</text>
<text x="820.40" y="585.15" font-size="14.00" font-family='"Liberation Serif", serif' fill="#111" text-anchor="end" textLength="6.23" lengthAdjust="spacingAndGlyphs" stroke="#111" stroke-width="0.30">0</text>
<text x="820.40" y="602.70" font-size="14.00" font-family='"Liberation Serif", serif' fill="#111" text-anchor="end" textLength="6.23" lengthAdjust="spacingAndGlyphs" stroke="#111" stroke-width="0.30">0</text>
<text x="820.40" y="620.25" font-size="14.00" font-family='"Liberation Serif", serif' fill="#111" text-anchor="end" textLength="6.23" lengthAdjust="spacingAndGlyphs" stroke="#111" stroke-width="0.30">0</text>
<text x="820.40" y="637.80" font-size="14.00" font-family='"Liberation Serif", serif' fill="#111" text-anchor="end" textLength="18.69" lengthAdjust="spacingAndGlyphs" stroke="#111" stroke-width="0.30">164</text>
<text x="820.40" y="655.35" font-size="14.00" font-family='"Liberation Serif", serif' fill="#111" text-anchor="end" textLength="18.69" lengthAdjust="spacingAndGlyphs" stroke="#111" stroke-width="0.30">167</text>
<text x="820.40" y="672.90" font-size="14.00" font-family='"Liberation Serif", serif' fill="#111" text-anchor="end" textLength="6.23" lengthAdjust="spacingAndGlyphs" stroke="#111" stroke-width="0.30">n</text>
<text x="903.00" y="216.60" font-size="14.00" font-family='"Liberation Serif", serif' fill="#111" text-anchor="end" textLength="6.23" lengthAdjust="spacingAndGlyphs" stroke="#111" stroke-width="0.30">0</text>
<text x="903.00" y="234.15" font-size="14.00" font-family='"Liberation Serif", serif' fill="#111" text-anchor="end" textLength="6.23" lengthAdjust="spacingAndGlyphs" stroke="#111" stroke-width="0.30">0</text>
<text x="903.00" y="251.70" font-size="14.00" font-family='"Liberation Serif", serif' fill="#111" text-anchor="end" textLength="6.23" lengthAdjust="spacingAndGlyphs" stroke="#111" stroke-width="0.30">0</text>
<text x="903.00" y="269.25" font-size="14.00" font-family='"Liberation Serif", serif' fill="#111" text-anchor="end" textLength="6.23" lengthAdjust="spacingAndGlyphs" stroke="#111" stroke-width="0.30">0</text>
<text x="903.00" y="286.80" font-size="14.00" font-family='"Liberation Serif", serif' fill="#111" text-anchor="end" textLength="6.23" lengthAdjust="spacingAndGlyphs" stroke="#111" stroke-width="0.30">0</text>
<text x="903.00" y="304.35" font-size="14.00" font-family='"Liberation Serif", serif' fill="#111" text-anchor="end" textLength="6.23" lengthAdjust="spacingAndGlyphs" stroke="#111" stroke-width="0.30">0</text>
<text x="903.00" y="321.90" font-size="14.00" font-family='"Liberation Serif", serif' fill="#111" text-anchor="end" textLength="6.23" lengthAdjust="spacingAndGlyphs" stroke="#111" stroke-width="0.30">0</text>
<text x="903.00" y="339.45" font-size="14.00" font-family='"Liberation Serif", serif' fill="#111" text-anchor="end" textLength="6.23" lengthAdjust="spacingAndGlyphs" stroke="#111" stroke-width="0.30">0</text>
<text x="903.00" y="357.00" font-size="14.00" font-family='"Liberation Serif", serif' fill="#111" text-anchor="end" textLength="6.23" lengthAdjust="spacingAndGlyphs" stroke="#111" stroke-width="0.30">0</text>
<text x="903.00" y="374.55" font-size="14.00" font-family='"Liberation Serif", serif' fill="#111" text-anchor="end" textLength="6.23" lengthAdjust="spacingAndGlyphs" stroke="#111" stroke-width="0.30">0</text>
<text x="903.00" y="392.10" font-size="14.00" font-family='"Liberation Serif", serif' fill="#111" text-anchor="end" textLength="6.23" lengthAdjust="spacingAndGlyphs" stroke="#111" stroke-width="0.30">0</text>
<text x="903.00" y="409.65" font-size="14.00" font-family='"Liberation Serif", serif' fill="#111" text-anchor="end" textLength="6.23" lengthAdjust="spacingAndGlyphs" stroke="#111" stroke-width="0.30">0</text>
<text x="903.00" y="427.20" font-size="14.00" font-family='"Liberation Serif", serif' fill="#111" text-anchor="end" textLength="6.23" lengthAdjust="spacingAndGlyphs" stroke="#111" stroke-width="0.30">0</text>
<text x="903.00" y="444.75" font-size="14.00" font-family='"Liberation Serif", serif' fill="#111" text-anchor="end" textLength="6.23" lengthAdjust="spacingAndGlyphs" stroke="#111" stroke-width="0.30">0</text>
<text x="903.00" y="462.30" font-size="14.00" font-family='"Liberation Serif", serif' fill="#111" text-anchor="end" textLength="6.23" lengthAdjust="spacingAndGlyphs" stroke="#111" stroke-width="0.30">0</text>
<text x="903.00" y="479.85" font-size="14.00" font-family='"Liberation Serif", serif' fill="#111" text-anchor="end" textLength="6.23" lengthAdjust="spacingAndGlyphs" stroke="#111" stroke-width="0.30">0</text>
<text x="903.00" y="497.40" font-size="14.00" font-family='"Liberation Serif", serif' fill="#111" text-anchor="end" textLength="6.23" lengthAdjust="spacingAndGlyphs" stroke="#111" stroke-width="0.30">0</text>
<text x="903.00" y="514.95" font-size="14.00" font-family='"Liberation Serif", serif' fill="#111" text-anchor="end" textLength="6.23" lengthAdjust="spacingAndGlyphs" stroke="#111" stroke-width="0.30">0</text>
<text x="903.00" y="532.50" font-size="14.00" font-family='"Liberation Serif", serif' fill="#111" text-anchor="end" textLength="6.23" lengthAdjust="spacingAndGlyphs" stroke="#111" stroke-width="0.30">0</text>
<text x="903.00" y="550.05" font-size="14.00" font-family='"Liberation Serif", serif' fill="#111" text-anchor="end" textLength="6.23" lengthAdjust="spacingAndGlyphs" stroke="#111" stroke-width="0.30">0</text>
<text x="903.00" y="567.60" font-size="14.00" font-family='"Liberation Serif", serif' fill="#111" text-anchor="end" textLength="6.23" lengthAdjust="spacingAndGlyphs" stroke="#111" stroke-width="0.30">0</text>
<text x="903.00" y="585.15" font-size="14.00" font-family='"Liberation Serif", serif' fill="#111" text-anchor="end" textLength="6.23" lengthAdjust="spacingAndGlyphs" stroke="#111" stroke-width="0.30">0</text>
<text x="903.00" y="602.70" font-size="14.00" font-family='"Liberation Serif", serif' fill="#111" text-anchor="end" textLength="6.23" lengthAdjust="spacingAndGlyphs" stroke="#111" stroke-width="0.30">0</text>
<text x="903.00" y="620.25" font-size="14.00" font-family='"Liberation Serif", serif' fill="#111" text-anchor="end" textLength="6.23" lengthAdjust="spacingAndGlyphs" stroke="#111" stroke-width="0.30">0</text>
<text x="903.00" y="637.80" font-size="14.00" font-family='"Liberation Serif", serif' fill="#111" text-anchor="end" textLength="6.23" lengthAdjust="spacingAndGlyphs" stroke="#111" stroke-width="0.30">0</text>
<text x="903.00" y="655.35" font-size="14.00" font-family='"Liberation Serif", serif' fill="#111" text-anchor="end" textLength="6.23" lengthAdjust="spacingAndGlyphs" stroke="#111" stroke-width="0.30">0</text>
<text x="903.00" y="672.90" font-size="14.00" font-family='"Liberation Serif", serif' fill="#111" text-anchor="end" textLength="6.23" lengthAdjust="spacingAndGlyphs" stroke="#111" stroke-width="0.30">n</text>
<text x="985.40" y="216.60" font-size="14.00" font-family='"Liberation Serif", serif' fill="#111" text-anchor="end" textLength="6.23" lengthAdjust="spacingAndGlyphs" stroke="#111" stroke-width="0.30">0</text>
<text x="985.40" y="234.15" font-size="14.00" font-family='"Liberation Serif", serif' fill="#111" text-anchor="end" textLength="6.23" lengthAdjust="spacingAndGlyphs" stroke="#111" stroke-width="0.30">0</text>
<text x="985.40" y="251.70" font-size="14.00" font-family='"Liberation Serif", serif' fill="#111" text-anchor="end" textLength="6.23" lengthAdjust="spacingAndGlyphs" stroke="#111" stroke-width="0.30">0</text>
<text x="985.40" y="269.25" font-size="14.00" font-family='"Liberation Serif", serif' fill="#111" text-anchor="end" textLength="6.23" lengthAdjust="spacingAndGlyphs" stroke="#111" stroke-width="0.30">0</text>
<text x="985.40" y="286.80" font-size="14.00" font-family='"Liberation Serif", serif' fill="#111" text-anchor="end" textLength="6.23" lengthAdjust="spacingAndGlyphs" stroke="#111" stroke-width="0.30">0</text>
<text x="985.40" y="304.35" font-size="14.00" font-family='"Liberation Serif", serif' fill="#111" text-anchor="end" textLength="6.23" lengthAdjust="spacingAndGlyphs" stroke="#111" stroke-width="0.30">0</text>
<text x="985.40" y="321.90" font-size="14.00" font-family='"Liberation Serif", serif' fill="#111" text-anchor="end" textLength="6.23" lengthAdjust="spacingAndGlyphs" stroke="#111" stroke-width="0.30">0</text>
<text x="985.40" y="339.45" font-size="14.00" font-family='"Liberation Serif", serif' fill="#111" text-anchor="end" textLength="6.23" lengthAdjust="spacingAndGlyphs" stroke="#111" stroke-width="0.30">0</text>
<text x="985.40" y="357.00" font-size="14.00" font-family='"Liberation Serif", serif' fill="#111" text-anchor="end" textLength="6.23" lengthAdjust="spacingAndGlyphs" stroke="#111" stroke-width="0.30">0</text>
<text x="985.40" y="374.55" font-size="14.00" font-family='"Liberation Serif", serif' fill="#111" text-anchor="end" textLength="6.23" lengthAdjust="spacingAndGlyphs" stroke="#111" stroke-width="0.30">0</text>
<text x="985.40" y="392.10" font-size="14.00" font-family='"Liberation Serif", serif' fill="#111" text-anchor="end" textLength="6.23" lengthAdjust="spacingAndGlyphs" stroke="#111" stroke-width="0.30">0</text>
<text x="985.40" y="409.65" font-size="14.00" font-family='"Liberation Serif", serif' fill="#111" text-anchor="end" textLength="6.23" lengthAdjust="spacingAndGlyphs" stroke="#111" stroke-width="0.30">0</text>
<text x="985.40" y="427.20" font-size="14.00" font-family='"Liberation Serif", serif' fill="#111" text-anchor="end" textLength="6.23" lengthAdjust="spacingAndGlyphs" stroke="#111" stroke-width="0.30">0</text>
<text x="985.40" y="444.75" font-size="14.00" font-family='"Liberation Serif", serif' fill="#111" text-anchor="end" textLength="6.23" lengthAdjust="spacingAndGlyphs" stroke="#111" stroke-width="0.30">0</text>
<text x="985.40" y="462.30" font-size="14.00" font-family='"Liberation Serif", serif' fill="#111" text-anchor="end" textLength="6.23" lengthAdjust="spacingAndGlyphs" stroke="#111" stroke-width="0.30">0</text>
<text x="985.40" y="479.85" font-size="14.00" font-family='"Liberation Serif", serif' fill="#111" text-anchor="end" textLength="6.23" lengthAdjust="spacingAndGlyphs" stroke="#111" stroke-width="0.30">0</text>
<text x="985.40" y="497.40" font-size="14.00" font-family='"Liberation Serif", serif' fill="#111" text-anchor="end" textLength="6.23" lengthAdjust="spacingAndGlyphs" stroke="#111" stroke-width="0.30">0</text>
<text x="985.40" y="514.95" font-size="14.00" font-family='"Liberation Serif", serif' fill="#111" text-anchor="end" textLength="6.23" lengthAdjust="spacingAndGlyphs" stroke="#111" stroke-width="0.30">0</text>
<text x="985.40" y="532.50" font-size="14.00" font-family='"Liberation Serif", serif' fill="#111" text-anchor="end" textLength="6.23" lengthAdjust="spacingAndGlyphs" stroke="#111" stroke-width="0.30">0</text>
<text x="985.40" y="550.05" font-size="14.00" font-family='"Liberation Serif", serif' fill="#111" text-anchor="end" textLength="6.23" lengthAdjust="spacingAndGlyphs" stroke="#111" stroke-width="0.30">0</text>
<text x="985.40" y="567.60" font-size="14.00" font-family='"Liberation Serif", serif' fill="#111" text-anchor="end" textLength="6.23" lengthAdjust="spacingAndGlyphs" stroke="#111" stroke-width="0.30">0</text>
<text x="985.40" y="585.15" font-size="14.00" font-family='"Liberation Serif", serif' fill="#111" text-anchor="end" textLength="6.23" lengthAdjust="spacingAndGlyphs" stroke="#111" stroke-width="0.30">0</text>
<text x="985.40" y="602.70" font-size="14.00" font-family='"Liberation Serif", serif' fill="#111" text-anchor="end" textLength="6.23" lengthAdjust="spacingAndGlyphs" stroke="#111" stroke-width="0.30">0</text>
<text x="985.40" y="620.25" font-size="14.00" font-family='"Liberation Serif", serif' fill="#111" text-anchor="end" textLength="6.23" lengthAdjust="spacingAndGlyphs" stroke="#111" stroke-width="0.30">0</text>
<text x="985.40" y="637.80" font-size="14.00" font-family='"Liberation Serif", serif' fill="#111" text-anchor="end" textLength="6.23" lengthAdjust="spacingAndGlyphs" stroke="#111" stroke-width="0.30">0</text>
<text x="985.40" y="655.35" font-size="14.00" font-family='"Liberation Serif", serif' fill="#111" text-anchor="end" textLength="6.23" lengthAdjust="spacingAndGlyphs" stroke="#111" stroke-width="0.30">0</text>
<text x="985.40" y="672.90" font-size="14.00" font-family='"Liberation Serif", serif' fill="#111" text-anchor="end" textLength="6.23" lengthAdjust="spacingAndGlyphs" stroke="#111" stroke-width="0.30">n</text>
<text x="1067.80" y="216.60" font-size="14.00" font-family='"Liberation Serif", serif' fill="#111" text-anchor="end" textLength="24.92" lengthAdjust="spacingAndGlyphs" stroke="#111" stroke-width="0.30">4798</text>
<text x="1067.80" y="234.15" font-size="14.00" font-family='"Liberation Serif", serif' fill="#111" text-anchor="end" textLength="24.92" lengthAdjust="spacingAndGlyphs" stroke="#111" stroke-width="0.30">4800</text>
<text x="1067.80" y="251.70" font-size="14.00" font-family='"Liberation Serif", serif' fill="#111" text-anchor="end" textLength="24.92" lengthAdjust="spacingAndGlyphs" stroke="#111" stroke-width="0.30">4801</text>
<text x="1067.80" y="269.25" font-size="14.00" font-family='"Liberation Serif", serif' fill="#111" text-anchor="end" textLength="24.92" lengthAdjust="spacingAndGlyphs" stroke="#111" stroke-width="0.30">4778</text>
<text x="1067.80" y="286.80" font-size="14.00" font-family='"Liberation Serif", serif' fill="#111" text-anchor="end" textLength="24.92" lengthAdjust="spacingAndGlyphs" stroke="#111" stroke-width="0.30">4801</text>
<text x="1067.80" y="304.35" font-size="14.00" font-family='"Liberation Serif", serif' fill="#111" text-anchor="end" textLength="24.92" lengthAdjust="spacingAndGlyphs" stroke="#111" stroke-width="0.30">4800</text>
<text x="1067.80" y="321.90" font-size="14.00" font-family='"Liberation Serif", serif' fill="#111" text-anchor="end" textLength="24.92" lengthAdjust="spacingAndGlyphs" stroke="#111" stroke-width="0.30">4800</text>
<text x="1067.80" y="339.45" font-size="14.00" font-family='"Liberation Serif", serif' fill="#111" text-anchor="end" textLength="24.92" lengthAdjust="spacingAndGlyphs" stroke="#111" stroke-width="0.30">4801</text>
<text x="1067.80" y="357.00" font-size="14.00" font-family='"Liberation Serif", serif' fill="#111" text-anchor="end" textLength="24.92" lengthAdjust="spacingAndGlyphs" stroke="#111" stroke-width="0.30">4800</text>
<text x="1067.80" y="374.55" font-size="14.00" font-family='"Liberation Serif", serif' fill="#111" text-anchor="end" textLength="24.92" lengthAdjust="spacingAndGlyphs" stroke="#111" stroke-width="0.30">4801</text>
<text x="1067.80" y="392.10" font-size="14.00" font-family='"Liberation Serif", serif' fill="#111" text-anchor="end" textLength="24.92" lengthAdjust="spacingAndGlyphs" stroke="#111" stroke-width="0.30">4800</text>
<text x="1067.80" y="409.65" font-size="14.00" font-family='"Liberation Serif", serif' fill="#111" text-anchor="end" textLength="24.92" lengthAdjust="spacingAndGlyphs" stroke="#111" stroke-width="0.30">4801</text>
<text x="1067.80" y="427.20" font-size="14.00" font-family='"Liberation Serif", serif' fill="#111" text-anchor="end" textLength="24.92" lengthAdjust="spacingAndGlyphs" stroke="#111" stroke-width="0.30">4800</text>
<text x="1067.80" y="444.75" font-size="14.00" font-family='"Liberation Serif", serif' fill="#111" text-anchor="end" textLength="24.92" lengthAdjust="spacingAndGlyphs" stroke="#111" stroke-width="0.30">4801</text>
<text x="1067.80" y="462.30" font-size="14.00" font-family='"Liberation Serif", serif' fill="#111" text-anchor="end" textLength="24.92" lengthAdjust="spacingAndGlyphs" stroke="#111" stroke-width="0.30">4800</text>
<text x="1067.80" y="479.85" font-size="14.00" font-family='"Liberation Serif", serif' fill="#111" text-anchor="end" textLength="24.92" lengthAdjust="spacingAndGlyphs" stroke="#111" stroke-width="0.30">4800</text>
<text x="1067.80" y="497.40" font-size="14.00" font-family='"Liberation Serif", serif' fill="#111" text-anchor="end" textLength="24.92" lengthAdjust="spacingAndGlyphs" stroke="#111" stroke-width="0.30">4801</text>
<text x="1067.80" y="514.95" font-size="14.00" font-family='"Liberation Serif", serif' fill="#111" text-anchor="end" textLength="24.92" lengthAdjust="spacingAndGlyphs" stroke="#111" stroke-width="0.30">4800</text>
<text x="1067.80" y="532.50" font-size="14.00" font-family='"Liberation Serif", serif' fill="#111" text-anchor="end" textLength="24.92" lengthAdjust="spacingAndGlyphs" stroke="#111" stroke-width="0.30">4801</text>
<text x="1067.80" y="550.05" font-size="14.00" font-family='"Liberation Serif", serif' fill="#111" text-anchor="end" textLength="24.92" lengthAdjust="spacingAndGlyphs" stroke="#111" stroke-width="0.30">4800</text>
<text x="1067.80" y="567.60" font-size="14.00" font-family='"Liberation Serif", serif' fill="#111" text-anchor="end" textLength="24.92" lengthAdjust="spacingAndGlyphs" stroke="#111" stroke-width="0.30">4801</text>
<text x="1067.80" y="585.15" font-size="14.00" font-family='"Liberation Serif", serif' fill="#111" text-anchor="end" textLength="24.92" lengthAdjust="spacingAndGlyphs" stroke="#111" stroke-width="0.30">4800</text>
<text x="1067.80" y="602.70" font-size="14.00" font-family='"Liberation Serif", serif' fill="#111" text-anchor="end" textLength="24.92" lengthAdjust="spacingAndGlyphs" stroke="#111" stroke-width="0.30">4800</text>
<text x="1067.80" y="620.25" font-size="14.00" font-family='"Liberation Serif", serif' fill="#111" text-anchor="end" textLength="24.92" lengthAdjust="spacingAndGlyphs" stroke="#111" stroke-width="0.30">4801</text>
<text x="1067.80" y="637.80" font-size="14.00" font-family='"Liberation Serif", serif' fill="#111" text-anchor="end" textLength="18.69" lengthAdjust="spacingAndGlyphs" stroke="#111" stroke-width="0.30">295</text>
<text x="1067.77" y="655.35" font-size="14.00" font-family='"Liberation Serif", serif' fill="#111" text-anchor="end" textLength="36.92" lengthAdjust="spacingAndGlyphs" stroke="#111" stroke-width="0.30">115481</text>
<text x="1067.80" y="672.90" font-size="14.00" font-family='"Liberation Serif", serif' fill="#111" text-anchor="end" textLength="6.23" lengthAdjust="spacingAndGlyphs" stroke="#111" stroke-width="0.30">n</text>
<text x="1150.00" y="216.60" font-size="14.00" font-family='"Liberation Serif", serif' fill="#111" text-anchor="end" textLength="24.92" lengthAdjust="spacingAndGlyphs" stroke="#111" stroke-width="0.30">4798</text>
<text x="1150.00" y="234.15" font-size="14.00" font-family='"Liberation Serif", serif' fill="#111" text-anchor="end" textLength="24.92" lengthAdjust="spacingAndGlyphs" stroke="#111" stroke-width="0.30">4800</text>
<text x="1150.00" y="251.70" font-size="14.00" font-family='"Liberation Serif", serif' fill="#111" text-anchor="end" textLength="24.92" lengthAdjust="spacingAndGlyphs" stroke="#111" stroke-width="0.30">4801</text>
<text x="1150.00" y="269.25" font-size="14.00" font-family='"Liberation Serif", serif' fill="#111" text-anchor="end" textLength="24.92" lengthAdjust="spacingAndGlyphs" stroke="#111" stroke-width="0.30">4778</text>
<text x="1150.00" y="286.80" font-size="14.00" font-family='"Liberation Serif", serif' fill="#111" text-anchor="end" textLength="24.92" lengthAdjust="spacingAndGlyphs" stroke="#111" stroke-width="0.30">4801</text>
<text x="1150.00" y="304.35" font-size="14.00" font-family='"Liberation Serif", serif' fill="#111" text-anchor="end" textLength="24.92" lengthAdjust="spacingAndGlyphs" stroke="#111" stroke-width="0.30">4800</text>
<text x="1150.00" y="321.90" font-size="14.00" font-family='"Liberation Serif", serif' fill="#111" text-anchor="end" textLength="24.92" lengthAdjust="spacingAndGlyphs" stroke="#111" stroke-width="0.30">4800</text>
<text x="1150.00" y="339.45" font-size="14.00" font-family='"Liberation Serif", serif' fill="#111" text-anchor="end" textLength="24.92" lengthAdjust="spacingAndGlyphs" stroke="#111" stroke-width="0.30">4801</text>
<text x="1150.00" y="357.00" font-size="14.00" font-family='"Liberation Serif", serif' fill="#111" text-anchor="end" textLength="24.92" lengthAdjust="spacingAndGlyphs" stroke="#111" stroke-width="0.30">4800</text>
<text x="1150.00" y="374.55" font-size="14.00" font-family='"Liberation Serif", serif' fill="#111" text-anchor="end" textLength="24.92" lengthAdjust="spacingAndGlyphs" stroke="#111" stroke-width="0.30">4801</text>
<text x="1150.00" y="392.10" font-size="14.00" font-family='"Liberation Serif", serif' fill="#111" text-anchor="end" textLength="24.92" lengthAdjust="spacingAndGlyphs" stroke="#111" stroke-width="0.30">4800</text>
<text x="1150.00" y="409.65" font-size="14.00" font-family='"Liberation Serif", serif' fill="#111" text-anchor="end" textLength="24.92" lengthAdjust="spacingAndGlyphs" stroke="#111" stroke-width="0.30">4801</text>
<text x="1150.00" y="427.20" font-size="14.00" font-family='"Liberation Serif", serif' fill="#111" text-anchor="end" textLength="24.92" lengthAdjust="spacingAndGlyphs" stroke="#111" stroke-width="0.30">4800</text>
<text x="1150.00" y="444.75" font-size="14.00" font-family='"Liberation Serif", serif' fill="#111" text-anchor="end" textLength="24.92" lengthAdjust="spacingAndGlyphs" stroke="#111" stroke-width="0.30">4801</text>
<text x="1150.00" y="462.30" font-size="14.00" font-family='"Liberation Serif", serif' fill="#111" text-anchor="end" textLength="24.92" lengthAdjust="spacingAndGlyphs" stroke="#111" stroke-width="0.30">4800</text>
<text x="1150.00" y="479.85" font-size="14.00" font-family='"Liberation Serif", serif' fill="#111" text-anchor="end" textLength="24.92" lengthAdjust="spacingAndGlyphs" stroke="#111" stroke-width="0.30">4800</text>
<text x="1150.00" y="497.40" font-size="14.00" font-family='"Liberation Serif", serif' fill="#111" text-anchor="end" textLength="24.92" lengthAdjust="spacingAndGlyphs" stroke="#111" stroke-width="0.30">4801</text>
<text x="1150.00" y="514.95" font-size="14.00" font-family='"Liberation Serif", serif' fill="#111" text-anchor="end" textLength="24.92" lengthAdjust="spacingAndGlyphs" stroke="#111" stroke-width="0.30">4800</text>
<text x="1150.00" y="532.50" font-size="14.00" font-family='"Liberation Serif", serif' fill="#111" text-anchor="end" textLength="24.92" lengthAdjust="spacingAndGlyphs" stroke="#111" stroke-width="0.30">4801</text>
<text x="1150.00" y="550.05" font-size="14.00" font-family='"Liberation Serif", serif' fill="#111" text-anchor="end" textLength="24.92" lengthAdjust="spacingAndGlyphs" stroke="#111" stroke-width="0.30">4800</text>
<text x="1150.00" y="567.60" font-size="14.00" font-family='"Liberation Serif", serif' fill="#111" text-anchor="end" textLength="24.92" lengthAdjust="spacingAndGlyphs" stroke="#111" stroke-width="0.30">4801</text>
<text x="1150.00" y="585.15" font-size="14.00" font-family='"Liberation Serif", serif' fill="#111" text-anchor="end" textLength="24.92" lengthAdjust="spacingAndGlyphs" stroke="#111" stroke-width="0.30">4800</text>
<text x="1150.00" y="602.70" font-size="14.00" font-family='"Liberation Serif", serif' fill="#111" text-anchor="end" textLength="24.92" lengthAdjust="spacingAndGlyphs" stroke="#111" stroke-width="0.30">4800</text>
<text x="1150.00" y="620.25" font-size="14.00" font-family='"Liberation Serif", serif' fill="#111" text-anchor="end" textLength="24.92" lengthAdjust="spacingAndGlyphs" stroke="#111" stroke-width="0.30">4801</text>
<text x="1150.00" y="637.80" font-size="14.00" font-family='"Liberation Serif", serif' fill="#111" text-anchor="end" textLength="18.69" lengthAdjust="spacingAndGlyphs" stroke="#111" stroke-width="0.30">295</text>
<text x="1149.97" y="655.35" font-size="14.00" font-family='"Liberation Serif", serif' fill="#111" text-anchor="end" textLength="36.92" lengthAdjust="spacingAndGlyphs" stroke="#111" stroke-width="0.30">115481</text>
<text x="1150.00" y="672.90" font-size="14.00" font-family='"Liberation Serif", serif' fill="#111" text-anchor="end" textLength="6.23" lengthAdjust="spacingAndGlyphs" stroke="#111" stroke-width="0.30">n</text>
<text x="1232.80" y="216.60" font-size="14.00" font-family='"Liberation Serif", serif' fill="#111" text-anchor="end" textLength="6.23" lengthAdjust="spacingAndGlyphs" stroke="#111" stroke-width="0.30">0</text>
<text x="1232.80" y="234.15" font-size="14.00" font-family='"Liberation Serif", serif' fill="#111" text-anchor="end" textLength="6.23" lengthAdjust="spacingAndGlyphs" stroke="#111" stroke-width="0.30">0</text>
<text x="1232.80" y="251.70" font-size="14.00" font-family='"Liberation Serif", serif' fill="#111" text-anchor="end" textLength="6.23" lengthAdjust="spacingAndGlyphs" stroke="#111" stroke-width="0.30">0</text>
<text x="1232.80" y="269.25" font-size="14.00" font-family='"Liberation Serif", serif' fill="#111" text-anchor="end" textLength="6.23" lengthAdjust="spacingAndGlyphs" stroke="#111" stroke-width="0.30">0</text>
<text x="1232.80" y="286.80" font-size="14.00" font-family='"Liberation Serif", serif' fill="#111" text-anchor="end" textLength="6.23" lengthAdjust="spacingAndGlyphs" stroke="#111" stroke-width="0.30">0</text>
<text x="1232.80" y="304.35" font-size="14.00" font-family='"Liberation Serif", serif' fill="#111" text-anchor="end" textLength="6.23" lengthAdjust="spacingAndGlyphs" stroke="#111" stroke-width="0.30">0</text>
<text x="1232.80" y="321.90" font-size="14.00" font-family='"Liberation Serif", serif' fill="#111" text-anchor="end" textLength="6.23" lengthAdjust="spacingAndGlyphs" stroke="#111" stroke-width="0.30">0</text>
<text x="1232.80" y="339.45" font-size="14.00" font-family='"Liberation Serif", serif' fill="#111" text-anchor="end" textLength="6.23" lengthAdjust="spacingAndGlyphs" stroke="#111" stroke-width="0.30">0</text>
<text x="1232.80" y="357.00" font-size="14.00" font-family='"Liberation Serif", serif' fill="#111" text-anchor="end" textLength="6.23" lengthAdjust="spacingAndGlyphs" stroke="#111" stroke-width="0.30">0</text>
<text x="1232.80" y="374.55" font-size="14.00" font-family='"Liberation Serif", serif' fill="#111" text-anchor="end" textLength="6.23" lengthAdjust="spacingAndGlyphs" stroke="#111" stroke-width="0.30">0</text>
<text x="1232.80" y="392.10" font-size="14.00" font-family='"Liberation Serif", serif' fill="#111" text-anchor="end" textLength="6.23" lengthAdjust="spacingAndGlyphs" stroke="#111" stroke-width="0.30">0</text>
<text x="1232.80" y="409.65" font-size="14.00" font-family='"Liberation Serif", serif' fill="#111" text-anchor="end" textLength="6.23" lengthAdjust="spacingAndGlyphs" stroke="#111" stroke-width="0.30">0</text>
<text x="1232.80" y="427.20" font-size="14.00" font-family='"Liberation Serif", serif' fill="#111" text-anchor="end" textLength="6.23" lengthAdjust="spacingAndGlyphs" stroke="#111" stroke-width="0.30">0</text>
<text x="1232.80" y="444.75" font-size="14.00" font-family='"Liberation Serif", serif' fill="#111" text-anchor="end" textLength="6.23" lengthAdjust="spacingAndGlyphs" stroke="#111" stroke-width="0.30">0</text>
<text x="1232.80" y="462.30" font-size="14.00" font-family='"Liberation Serif", serif' fill="#111" text-anchor="end" textLength="6.23" lengthAdjust="spacingAndGlyphs" stroke="#111" stroke-width="0.30">0</text>
<text x="1232.80" y="479.85" font-size="14.00" font-family='"Liberation Serif", serif' fill="#111" text-anchor="end" textLength="6.23" lengthAdjust="spacingAndGlyphs" stroke="#111" stroke-width="0.30">0</text>
<text x="1232.80" y="497.40" font-size="14.00" font-family='"Liberation Serif", serif' fill="#111" text-anchor="end" textLength="6.23" lengthAdjust="spacingAndGlyphs" stroke="#111" stroke-width="0.30">0</text>
<text x="1232.80" y="514.95" font-size="14.00" font-family='"Liberation Serif", serif' fill="#111" text-anchor="end" textLength="6.23" lengthAdjust="spacingAndGlyphs" stroke="#111" stroke-width="0.30">0</text>
<text x="1232.80" y="532.50" font-size="14.00" font-family='"Liberation Serif", serif' fill="#111" text-anchor="end" textLength="6.23" lengthAdjust="spacingAndGlyphs" stroke="#111" stroke-width="0.30">0</text>
<text x="1232.80" y="550.05" font-size="14.00" font-family='"Liberation Serif", serif' fill="#111" text-anchor="end" textLength="6.23" lengthAdjust="spacingAndGlyphs" stroke="#111" stroke-width="0.30">0</text>
<text x="1232.80" y="567.60" font-size="14.00" font-family='"Liberation Serif", serif' fill="#111" text-anchor="end" textLength="6.23" lengthAdjust="spacingAndGlyphs" stroke="#111" stroke-width="0.30">0</text>
<text x="1232.80" y="585.15" font-size="14.00" font-family='"Liberation Serif", serif' fill="#111" text-anchor="end" textLength="6.23" lengthAdjust="spacingAndGlyphs" stroke="#111" stroke-width="0.30">0</text>
<text x="1232.80" y="602.70" font-size="14.00" font-family='"Liberation Serif", serif' fill="#111" text-anchor="end" textLength="6.23" lengthAdjust="spacingAndGlyphs" stroke="#111" stroke-width="0.30">0</text>
<text x="1232.80" y="620.25" font-size="14.00" font-family='"Liberation Serif", serif' fill="#111" text-anchor="end" textLength="6.23" lengthAdjust="spacingAndGlyphs" stroke="#111" stroke-width="0.30">0</text>
<text x="1232.80" y="637.80" font-size="14.00" font-family='"Liberation Serif", serif' fill="#111" text-anchor="end" textLength="6.23" lengthAdjust="spacingAndGlyphs" stroke="#111" stroke-width="0.30">0</text>
<text x="1232.80" y="655.35" font-size="14.00" font-family='"Liberation Serif", serif' fill="#111" text-anchor="end" textLength="6.23" lengthAdjust="spacingAndGlyphs" stroke="#111" stroke-width="0.30">0</text>
<text x="1232.80" y="672.90" font-size="14.00" font-family='"Liberation Serif", serif' fill="#111" text-anchor="end" textLength="6.23" lengthAdjust="spacingAndGlyphs" stroke="#111" stroke-width="0.30">n</text>
<text x="1315.00" y="216.60" font-size="14.00" font-family='"Liberation Serif", serif' fill="#111" text-anchor="end" textLength="6.23" lengthAdjust="spacingAndGlyphs" stroke="#111" stroke-width="0.30">0</text>
<text x="1315.00" y="234.15" font-size="14.00" font-family='"Liberation Serif", serif' fill="#111" text-anchor="end" textLength="6.23" lengthAdjust="spacingAndGlyphs" stroke="#111" stroke-width="0.30">0</text>
<text x="1315.00" y="251.70" font-size="14.00" font-family='"Liberation Serif", serif' fill="#111" text-anchor="end" textLength="6.23" lengthAdjust="spacingAndGlyphs" stroke="#111" stroke-width="0.30">0</text>
<text x="1315.00" y="269.25" font-size="14.00" font-family='"Liberation Serif", serif' fill="#111" text-anchor="end" textLength="6.23" lengthAdjust="spacingAndGlyphs" stroke="#111" stroke-width="0.30">0</text>
<text x="1315.00" y="286.80" font-size="14.00" font-family='"Liberation Serif", serif' fill="#111" text-anchor="end" textLength="6.23" lengthAdjust="spacingAndGlyphs" stroke="#111" stroke-width="0.30">0</text>
<text x="1315.00" y="304.35" font-size="14.00" font-family='"Liberation Serif", serif' fill="#111" text-anchor="end" textLength="6.23" lengthAdjust="spacingAndGlyphs" stroke="#111" stroke-width="0.30">0</text>
<text x="1315.00" y="321.90" font-size="14.00" font-family='"Liberation Serif", serif' fill="#111" text-anchor="end" textLength="6.23" lengthAdjust="spacingAndGlyphs" stroke="#111" stroke-width="0.30">0</text>
<text x="1315.00" y="339.45" font-size="14.00" font-family='"Liberation Serif", serif' fill="#111" text-anchor="end" textLength="6.23" lengthAdjust="spacingAndGlyphs" stroke="#111" stroke-width="0.30">0</text>
<text x="1315.00" y="357.00" font-size="14.00" font-family='"Liberation Serif", serif' fill="#111" text-anchor="end" textLength="6.23" lengthAdjust="spacingAndGlyphs" stroke="#111" stroke-width="0.30">0</text>
<text x="1315.00" y="374.55" font-size="14.00" font-family='"Liberation Serif", serif' fill="#111" text-anchor="end" textLength="6.23" lengthAdjust="spacingAndGlyphs" stroke="#111" stroke-width="0.30">0</text>
<text x="1315.00" y="392.10" font-size="14.00" font-family='"Liberation Serif", serif' fill="#111" text-anchor="end" textLength="6.23" lengthAdjust="spacingAndGlyphs" stroke="#111" stroke-width="0.30">0</text>
<text x="1315.00" y="409.65" font-size="14.00" font-family='"Liberation Serif", serif' fill="#111" text-anchor="end" textLength="6.23" lengthAdjust="spacingAndGlyphs" stroke="#111" stroke-width="0.30">0</text>
<text x="1315.00" y="427.20" font-size="14.00" font-family='"Liberation Serif", serif' fill="#111" text-anchor="end" textLength="6.23" lengthAdjust="spacingAndGlyphs" stroke="#111" stroke-width="0.30">0</text>
<text x="1315.00" y="444.75" font-size="14.00" font-family='"Liberation Serif", serif' fill="#111" text-anchor="end" textLength="6.23" lengthAdjust="spacingAndGlyphs" stroke="#111" stroke-width="0.30">0</text>
<text x="1315.00" y="462.30" font-size="14.00" font-family='"Liberation Serif", serif' fill="#111" text-anchor="end" textLength="6.23" lengthAdjust="spacingAndGlyphs" stroke="#111" stroke-width="0.30">0</text>
<text x="1315.00" y="479.85" font-size="14.00" font-family='"Liberation Serif", serif' fill="#111" text-anchor="end" textLength="6.23" lengthAdjust="spacingAndGlyphs" stroke="#111" stroke-width="0.30">0</text>
<text x="1315.00" y="497.40" font-size="14.00" font-family='"Liberation Serif", serif' fill="#111" text-anchor="end" textLength="6.23" lengthAdjust="spacingAndGlyphs" stroke="#111" stroke-width="0.30">0</text>
<text x="1315.00" y="514.95" font-size="14.00" font-family='"Liberation Serif", serif' fill="#111" text-anchor="end" textLength="6.23" lengthAdjust="spacingAndGlyphs" stroke="#111" stroke-width="0.30">0</text>
<text x="1315.00" y="532.50" font-size="14.00" font-family='"Liberation Serif", serif' fill="#111" text-anchor="end" textLength="6.23" lengthAdjust="spacingAndGlyphs" stroke="#111" stroke-width="0.30">0</text>
<text x="1315.00" y="550.05" font-size="14.00" font-family='"Liberation Serif", serif' fill="#111" text-anchor="end" textLength="6.23" lengthAdjust="spacingAndGlyphs" stroke="#111" stroke-width="0.30">0</text>
<text x="1315.00" y="567.60" font-size="14.00" font-family='"Liberation Serif", serif' fill="#111" text-anchor="end" textLength="6.23" lengthAdjust="spacingAndGlyphs" stroke="#111" stroke-width="0.30">0</text>
<text x="1315.00" y="585.15" font-size="14.00" font-family='"Liberation Serif", serif' fill="#111" text-anchor="end" textLength="6.23" lengthAdjust="spacingAndGlyphs" stroke="#111" stroke-width="0.30">0</text>
<text x="1315.00" y="602.70" font-size="14.00" font-family='"Liberation Serif", serif' fill="#111" text-anchor="end" textLength="6.23" lengthAdjust="spacingAndGlyphs" stroke="#111" stroke-width="0.30">0</text>
<text x="1315.00" y="620.25" font-size="14.00" font-family='"Liberation Serif", serif' fill="#111" text-anchor="end" textLength="6.23" lengthAdjust="spacingAndGlyphs" stroke="#111" stroke-width="0.30">0</text>
<text x="1315.00" y="637.80" font-size="14.00" font-family='"Liberation Serif", serif' fill="#111" text-anchor="end" textLength="6.23" lengthAdjust="spacingAndGlyphs" stroke="#111" stroke-width="0.30">0</text>
<text x="1315.00" y="655.35" font-size="14.00" font-family='"Liberation Serif", serif' fill="#111" text-anchor="end" textLength="6.23" lengthAdjust="spacingAndGlyphs" stroke="#111" stroke-width="0.30">0</text>
<text x="1315.00" y="672.90" font-size="14.00" font-family='"Liberation Serif", serif' fill="#111" text-anchor="end" textLength="6.23" lengthAdjust="spacingAndGlyphs" stroke="#111" stroke-width="0.30">n</text>
<text x="1397.60" y="216.60" font-size="14.00" font-family='"Liberation Serif", serif' fill="#111" text-anchor="end" textLength="6.23" lengthAdjust="spacingAndGlyphs" stroke="#111" stroke-width="0.30">0</text>
<text x="1397.60" y="234.15" font-size="14.00" font-family='"Liberation Serif", serif' fill="#111" text-anchor="end" textLength="6.23" lengthAdjust="spacingAndGlyphs" stroke="#111" stroke-width="0.30">0</text>
<text x="1397.60" y="251.70" font-size="14.00" font-family='"Liberation Serif", serif' fill="#111" text-anchor="end" textLength="6.23" lengthAdjust="spacingAndGlyphs" stroke="#111" stroke-width="0.30">0</text>
<text x="1397.60" y="269.25" font-size="14.00" font-family='"Liberation Serif", serif' fill="#111" text-anchor="end" textLength="6.23" lengthAdjust="spacingAndGlyphs" stroke="#111" stroke-width="0.30">0</text>
<text x="1397.60" y="286.80" font-size="14.00" font-family='"Liberation Serif", serif' fill="#111" text-anchor="end" textLength="6.23" lengthAdjust="spacingAndGlyphs" stroke="#111" stroke-width="0.30">0</text>
<text x="1397.60" y="304.35" font-size="14.00" font-family='"Liberation Serif", serif' fill="#111" text-anchor="end" textLength="6.23" lengthAdjust="spacingAndGlyphs" stroke="#111" stroke-width="0.30">0</text>
<text x="1397.60" y="321.90" font-size="14.00" font-family='"Liberation Serif", serif' fill="#111" text-anchor="end" textLength="6.23" lengthAdjust="spacingAndGlyphs" stroke="#111" stroke-width="0.30">0</text>
<text x="1397.60" y="339.45" font-size="14.00" font-family='"Liberation Serif", serif' fill="#111" text-anchor="end" textLength="6.23" lengthAdjust="spacingAndGlyphs" stroke="#111" stroke-width="0.30">0</text>
<text x="1397.60" y="357.00" font-size="14.00" font-family='"Liberation Serif", serif' fill="#111" text-anchor="end" textLength="6.23" lengthAdjust="spacingAndGlyphs" stroke="#111" stroke-width="0.30">0</text>
<text x="1397.60" y="374.55" font-size="14.00" font-family='"Liberation Serif", serif' fill="#111" text-anchor="end" textLength="6.23" lengthAdjust="spacingAndGlyphs" stroke="#111" stroke-width="0.30">0</text>
<text x="1397.60" y="392.10" font-size="14.00" font-family='"Liberation Serif", serif' fill="#111" text-anchor="end" textLength="6.23" lengthAdjust="spacingAndGlyphs" stroke="#111" stroke-width="0.30">0</text>
<text x="1397.60" y="409.65" font-size="14.00" font-family='"Liberation Serif", serif' fill="#111" text-anchor="end" textLength="6.23" lengthAdjust="spacingAndGlyphs" stroke="#111" stroke-width="0.30">0</text>
<text x="1397.60" y="427.20" font-size="14.00" font-family='"Liberation Serif", serif' fill="#111" text-anchor="end" textLength="6.23" lengthAdjust="spacingAndGlyphs" stroke="#111" stroke-width="0.30">0</text>
<text x="1397.60" y="444.75" font-size="14.00" font-family='"Liberation Serif", serif' fill="#111" text-anchor="end" textLength="6.23" lengthAdjust="spacingAndGlyphs" stroke="#111" stroke-width="0.30">0</text>
<text x="1397.60" y="462.30" font-size="14.00" font-family='"Liberation Serif", serif' fill="#111" text-anchor="end" textLength="6.23" lengthAdjust="spacingAndGlyphs" stroke="#111" stroke-width="0.30">0</text>
<text x="1397.60" y="479.85" font-size="14.00" font-family='"Liberation Serif", serif' fill="#111" text-anchor="end" textLength="6.23" lengthAdjust="spacingAndGlyphs" stroke="#111" stroke-width="0.30">0</text>
<text x="1397.60" y="497.40" font-size="14.00" font-family='"Liberation Serif", serif' fill="#111" text-anchor="end" textLength="6.23" lengthAdjust="spacingAndGlyphs" stroke="#111" stroke-width="0.30">0</text>
<text x="1397.60" y="514.95" font-size="14.00" font-family='"Liberation Serif", serif' fill="#111" text-anchor="end" textLength="6.23" lengthAdjust="spacingAndGlyphs" stroke="#111" stroke-width="0.30">0</text>
<text x="1397.60" y="532.50" font-size="14.00" font-family='"Liberation Serif", serif' fill="#111" text-anchor="end" textLength="6.23" lengthAdjust="spacingAndGlyphs" stroke="#111" stroke-width="0.30">0</text>
<text x="1397.60" y="550.05" font-size="14.00" font-family='"Liberation Serif", serif' fill="#111" text-anchor="end" textLength="6.23" lengthAdjust="spacingAndGlyphs" stroke="#111" stroke-width="0.30">0</text>
<text x="1397.60" y="567.60" font-size="14.00" font-family='"Liberation Serif", serif' fill="#111" text-anchor="end" textLength="6.23" lengthAdjust="spacingAndGlyphs" stroke="#111" stroke-width="0.30">0</text>
<text x="1397.60" y="585.15" font-size="14.00" font-family='"Liberation Serif", serif' fill="#111" text-anchor="end" textLength="6.23" lengthAdjust="spacingAndGlyphs" stroke="#111" stroke-width="0.30">0</text>
<text x="1397.60" y="602.70" font-size="14.00" font-family='"Liberation Serif", serif' fill="#111" text-anchor="end" textLength="6.23" lengthAdjust="spacingAndGlyphs" stroke="#111" stroke-width="0.30">0</text>
<text x="1397.60" y="620.25" font-size="14.00" font-family='"Liberation Serif", serif' fill="#111" text-anchor="end" textLength="6.23" lengthAdjust="spacingAndGlyphs" stroke="#111" stroke-width="0.30">0</text>
<text x="1397.60" y="637.80" font-size="14.00" font-family='"Liberation Serif", serif' fill="#111" text-anchor="end" textLength="6.23" lengthAdjust="spacingAndGlyphs" stroke="#111" stroke-width="0.30">0</text>
<text x="1397.60" y="655.35" font-size="14.00" font-family='"Liberation Serif", serif' fill="#111" text-anchor="end" textLength="6.23" lengthAdjust="spacingAndGlyphs" stroke="#111" stroke-width="0.30">0</text>
<text x="1397.60" y="672.90" font-size="14.00" font-family='"Liberation Serif", serif' fill="#111" text-anchor="end" textLength="6.23" lengthAdjust="spacingAndGlyphs" stroke="#111" stroke-width="0.30">n</text>
</svg>
<rect x="453.6" y="770.4" width="1007.90" height="16.8" fill="#f0f0f0"/>
<rect x="471" y="771.6" width="642" height="14.2" fill="#cdcdcd"/>
<path d="M463.6 774.6 L459.8 778.4 L463.6 782.2" fill="none" stroke="#606060" stroke-width="1.6"/>
<path d="M1451.2 774.6 L1455 778.4 L1451.2 782.2" fill="none" stroke="#606060" stroke-width="1.6"/>
<rect x="1274.40" y="809.3" width="90.40" height="23.7" fill="#f0f0f0"/>
<path d="M1275.00 832.5 V809.9 H1364.80" fill="none" stroke="#a0a0a0" stroke-width="1.2"/>
<path d="M1274.40 832 H1363.90 V809.3" fill="none" stroke="#6a6a6a" stroke-width="1.8"/>
<text x="1310.25" y="824.70" font-size="14.00" font-family='"Liberation Serif", serif' fill="#111" text-anchor="start" textLength="18.69" lengthAdjust="spacingAndGlyphs" stroke="#111" stroke-width="0.30">OK</text>
<rect x="1386.00" y="809.3" width="90.20" height="23.7" fill="#f0f0f0"/>
<path d="M1386.60 832.5 V809.9 H1476.20" fill="none" stroke="#e8e8e8" stroke-width="1.2"/>
<path d="M1386.00 832 H1475.30 V809.3" fill="none" stroke="#6a6a6a" stroke-width="1.8"/>
<text x="1412.40" y="824.70" font-size="14.00" font-family='"Liberation Serif", serif' fill="#111" text-anchor="start" textLength="37.42" lengthAdjust="spacingAndGlyphs" stroke="#111" stroke-width="0.30">Cancel</text>
</svg>
</div>
</body></html>
